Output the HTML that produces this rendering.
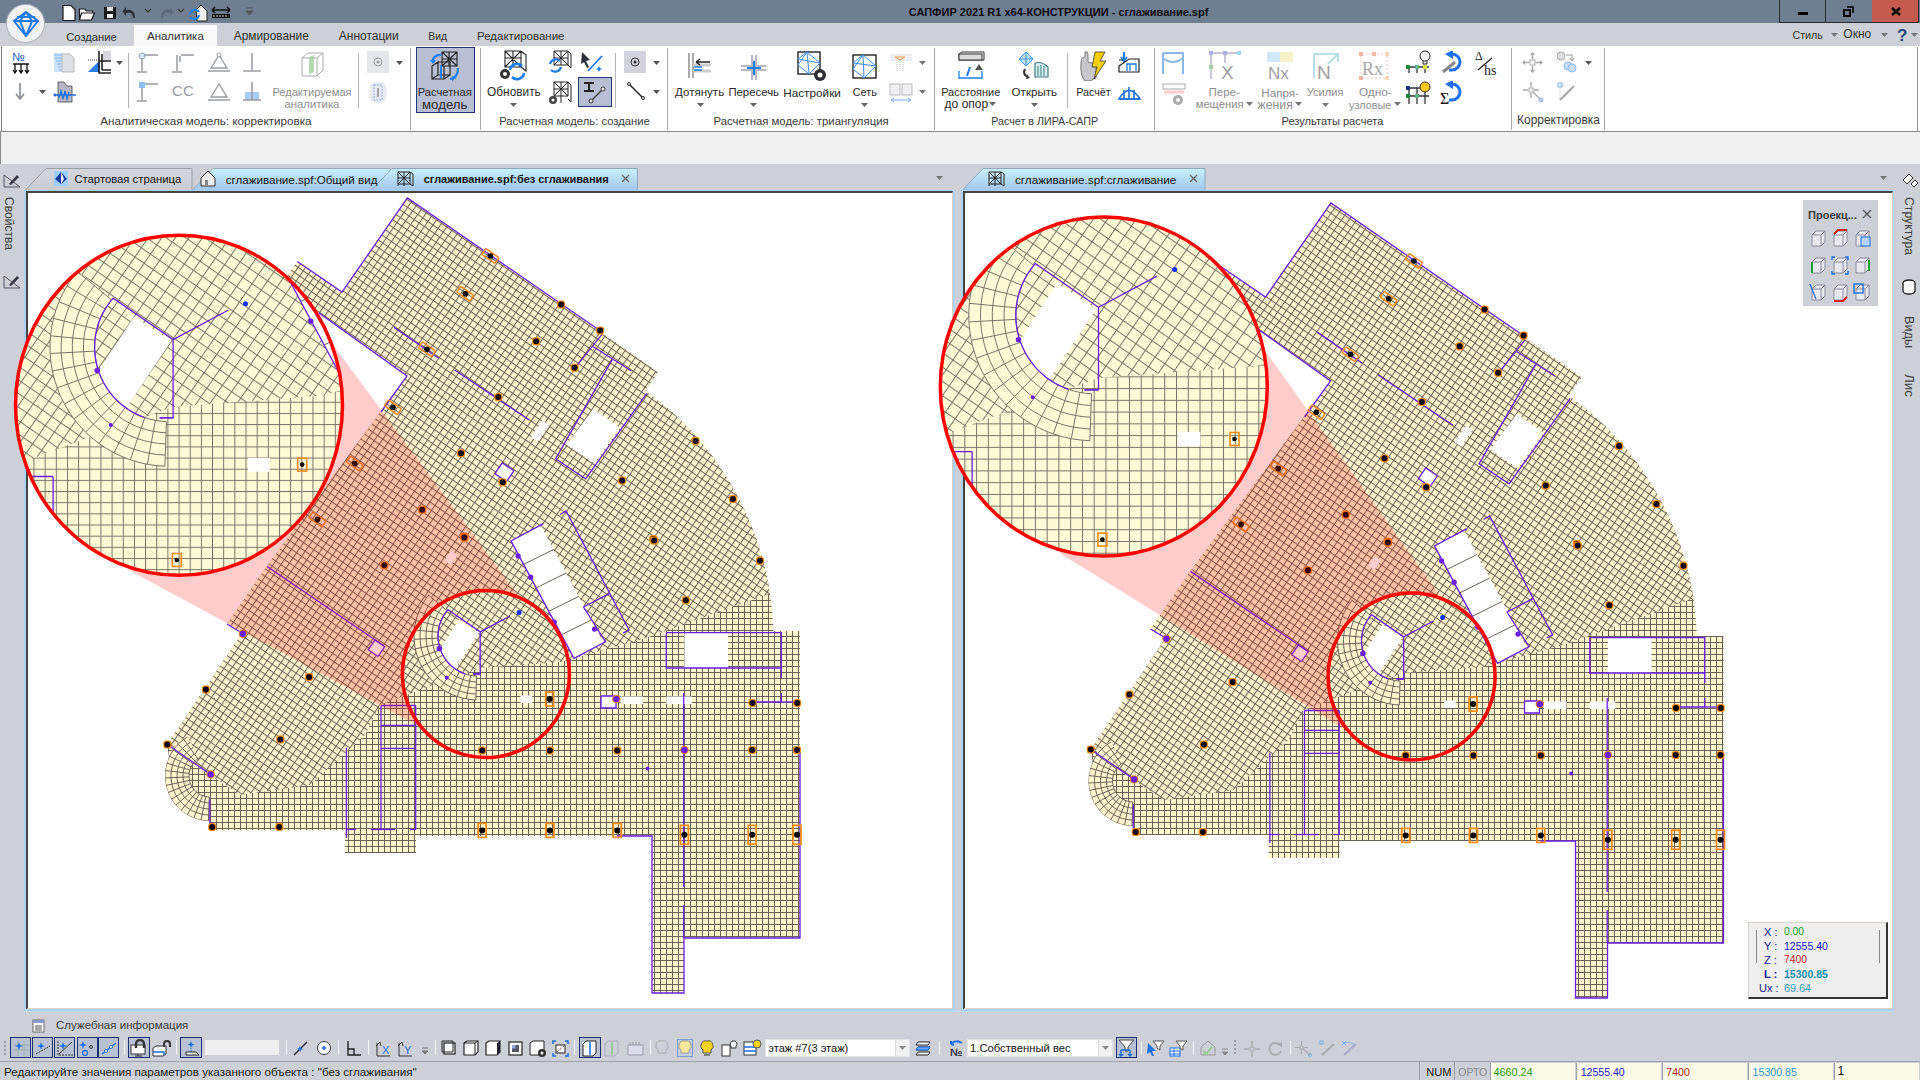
<!DOCTYPE html><html><head><meta charset="utf-8"><style>
*{margin:0;padding:0;box-sizing:border-box}
body{width:1920px;height:1080px;overflow:hidden;position:relative;background:#cdd1d7;font-family:"Liberation Sans", sans-serif;font-size:12px;color:#1e1e1e}
.a{position:absolute;white-space:nowrap}
</style></head><body>

<div class="a" style="left:0;top:0;width:1920px;height:23px;background:#6f7e91"></div>
<div class="a" style="left:908.75px;top:5.72px;font-size:11.01px;line-height:12.67px;color:#0a0a0a;font-weight:bold;">САПФИР 2021 R1 x64-КОНСТРУКЦИИ - сглаживание.spf</div>
<div class="a" style="left:1779px;top:0;width:47px;height:23px;border:1px solid #2a2a2a;border-top:0;"></div>
<div class="a" style="left:1826px;top:0;width:46px;height:23px;border-bottom:1px solid #2a2a2a;"></div>
<div class="a" style="left:1872px;top:0;width:47px;height:23px;border:1px solid #2a2a2a;border-top:0;border-left:0;background:#c55a4e"></div>
<div class="a" style="left:1798px;top:12px;width:10px;height:3px;background:#000"></div>
<svg class="a" style="left:1843px;top:6px;" width="11" height="11" viewBox="0 0 11 11"><rect x="1" y="4" width="6" height="6" fill="none" stroke="#000" stroke-width="2"/><path d="M4,1 L10,1 L10,7" fill="none" stroke="#000" stroke-width="1.6"/></svg>
<svg class="a" style="left:1891px;top:7px;" width="10" height="9" viewBox="0 0 10 9"><path d="M1,1 L9,8 M9,1 L1,8" stroke="#000" stroke-width="2.4"/></svg>
<svg class="a" style="left:60px;top:4px;" width="18" height="18" viewBox="0 0 18 18"><path d="M3,1.5 h8 l4,4 v11 h-12z" fill="#fff" stroke="#1a1a1a" stroke-width="1.2"/></svg>
<svg class="a" style="left:78px;top:4px;" width="18" height="18" viewBox="0 0 18 18"><path d="M1.5,5 h5 l2,2 h6 v2 h-11 l-2,7z M3.5,9 h13 l-3,7 h-12z" fill="#fff" stroke="#1a1a1a" stroke-width="1.2"/></svg>
<svg class="a" style="left:102px;top:4px;" width="16" height="18" viewBox="0 0 16 18"><rect x="2" y="3" width="12" height="12" fill="#1a1a1a"/><rect x="5" y="3" width="6" height="4" fill="#ddd"/><rect x="5" y="10" width="6" height="4" fill="#fff"/></svg>
<svg class="a" style="left:122px;top:3px;" width="16" height="18" viewBox="0 0 16 18"><path d="M13,15 C13,7 8,6 4,7 L4,4 L0.5,8.5 L4,13 L4,10 C8,9 11,10 11,15z" fill="#2a2f3a"/></svg>
<svg class="a" style="left:144px;top:8px;" width="8" height="6" viewBox="0 0 8 6"><path d="M1,1 L4,4 L7,1" fill="none" stroke="#333" stroke-width="1.2"/></svg>
<svg class="a" style="left:158px;top:3px;" width="16" height="18" viewBox="0 0 16 18"><path d="M3,15 C3,7 8,6 12,7 L12,4 L15.5,8.5 L12,13 L12,10 C8,9 5,10 5,15z" fill="#5c6878"/></svg>
<svg class="a" style="left:177px;top:8px;" width="8" height="6" viewBox="0 0 8 6"><path d="M1,1 L4,4 L7,1" fill="none" stroke="#333" stroke-width="1.2"/></svg>
<svg class="a" style="left:188px;top:2px;" width="20" height="20" viewBox="0 0 20 20"><path d="M8,8 L13,3 L19,9 v10 h-10z" fill="#eee" stroke="#222"/><path d="M2,12 a5,5 0 0 1 9,-2 M11,13 a5,5 0 0 1 -9,2" fill="none" stroke="#1e7ef0" stroke-width="2"/></svg>
<svg class="a" style="left:211px;top:4px;" width="20" height="16" viewBox="0 0 20 16"><path d="M1,6 h18 M1,6 l3,-3 M1,6 l3,3 M19,6 l-3,-3 M19,6 l-3,3" stroke="#111" stroke-width="1.5" fill="none"/><rect x="1" y="10" width="18" height="4" fill="#111"/><path d="M3,11v2 M6,11v2 M9,11v2 M12,11v2 M15,11v2" stroke="#ccc"/></svg>
<svg class="a" style="left:245px;top:7px;" width="9" height="9" viewBox="0 0 9 9"><path d="M1,1 h7 M1,4 L4.5,8 L8,4z" stroke="#555" fill="#555"/></svg>
<div class="a" style="left:0;top:23px;width:1920px;height:23px;background:#cdd1d7"></div>
<div class="a" style="left:134px;top:25px;width:83px;height:21px;background:#fafafa"></div>
<div class="a" style="left:66.25px;top:30.60px;font-size:11.20px;line-height:12.88px;color:#2e2e2e;">Создание</div>
<div class="a" style="left:147.00px;top:30.43px;font-size:11.47px;line-height:13.19px;color:#2e2e2e;">Аналитика</div>
<div class="a" style="left:233.75px;top:30.17px;font-size:11.86px;line-height:13.64px;color:#2e2e2e;">Армирование</div>
<div class="a" style="left:338.75px;top:30.08px;font-size:12.00px;line-height:13.80px;color:#2e2e2e;">Аннотации</div>
<div class="a" style="left:428.25px;top:31.15px;font-size:10.36px;line-height:11.92px;color:#2e2e2e;">Вид</div>
<div class="a" style="left:477.00px;top:30.42px;font-size:11.49px;line-height:13.21px;color:#2e2e2e;">Редактирование</div>
<div class="a" style="left:1792.50px;top:28.93px;font-size:10.69px;line-height:12.30px;color:#333;">Стиль</div>
<svg class="a" style="left:1831px;top:33px;" width="7" height="4" viewBox="0 0 7 4"><path d="M0,0 L7,0 L3.5,4Z" fill="#777"/></svg>
<div class="a" style="left:1843.30px;top:28.06px;font-size:12.03px;line-height:13.83px;color:#333;">Окно</div>
<svg class="a" style="left:1881px;top:33px;" width="7" height="4" viewBox="0 0 7 4"><path d="M0,0 L7,0 L3.5,4Z" fill="#777"/></svg>
<svg class="a" style="left:1897px;top:27px;" width="10" height="16" viewBox="0 0 10 16"><text x="0" y="14" font-family="Liberation Sans" font-weight="bold" font-size="17" fill="#2c4470">?</text></svg>
<svg class="a" style="left:1911px;top:33px;" width="7" height="4" viewBox="0 0 7 4"><path d="M0,0 L7,0 L3.5,4Z" fill="#777"/></svg>
<div class="a" style="left:7px;top:5px;width:37px;height:37px;border-radius:50%;background:#f1f2f4;box-shadow:0 0 0 1px #b0b6bf"></div>
<svg class="a" style="left:12px;top:11px;" width="28" height="26" viewBox="0 0 28 26"><path d="M14,1 L26,10 L14,25 L2,10z M2,10 h24 M14,1 L8,10 L14,25 L20,10z M5,6 h18" fill="none" stroke="#1e78e6" stroke-width="2"/></svg>
<div class="a" style="left:0;top:46px;width:1920px;height:86px;background:#fff;border-bottom:1px solid #8c8c8c"></div>
<div class="a" style="left:1px;top:46px;width:1px;height:85px;background:#7a7a7a"></div>
<div class="a" style="left:1917px;top:47px;width:1px;height:84px;background:#9a9a9a"></div>
<div class="a" style="left:0;top:132px;width:1920px;height:32px;background:#f1f1f1"></div>
<div class="a" style="left:0;top:132px;width:1px;height:32px;background:#888"></div>
<div class="a" style="left:100.20px;top:114.30px;font-size:11.66px;line-height:13.41px;color:#3a3a3a;">Аналитическая модель: корректировка</div>
<div class="a" style="left:499.20px;top:114.58px;font-size:11.24px;line-height:12.92px;color:#3a3a3a;">Расчетная модель: создание</div>
<div class="a" style="left:713.50px;top:114.50px;font-size:11.36px;line-height:13.07px;color:#3a3a3a;">Расчетная модель: триангуляция</div>
<div class="a" style="left:991.30px;top:114.92px;font-size:10.71px;line-height:12.31px;color:#3a3a3a;">Расчет в ЛИРА-САПР</div>
<div class="a" style="left:1281.50px;top:114.68px;font-size:11.08px;line-height:12.74px;color:#3a3a3a;">Результаты расчета</div>
<div class="a" style="left:1517.00px;top:114.10px;font-size:11.97px;line-height:13.77px;color:#3a3a3a;">Корректировка</div>
<div class="a" style="left:410.0px;top:48px;width:1px;height:82px;background:#a8a8a8"></div>
<div class="a" style="left:479.5px;top:48px;width:1px;height:82px;background:#a8a8a8"></div>
<div class="a" style="left:667.0px;top:48px;width:1px;height:82px;background:#a8a8a8"></div>
<div class="a" style="left:933.5px;top:48px;width:1px;height:82px;background:#a8a8a8"></div>
<div class="a" style="left:1153.5px;top:48px;width:1px;height:82px;background:#a8a8a8"></div>
<div class="a" style="left:1510.5px;top:48px;width:1px;height:82px;background:#a8a8a8"></div>
<div class="a" style="left:1604.0px;top:48px;width:1px;height:82px;background:#a8a8a8"></div>
<div class="a" style="left:128.0px;top:53px;width:1px;height:55px;background:#b4b4b4"></div>
<div class="a" style="left:358.0px;top:53px;width:1px;height:55px;background:#b4b4b4"></div>
<div class="a" style="left:614.5px;top:53px;width:1px;height:55px;background:#b4b4b4"></div>
<div class="a" style="left:1067.0px;top:53px;width:1px;height:55px;background:#b4b4b4"></div>
<svg class="a" style="left:11px;top:51px;" width="20" height="23" viewBox="0 0 20 23"><text x="1" y="10" font-family="Liberation Sans" font-size="12" fill="#1e5fd0">№</text><path d="M2,13 h16 M4,13 v8 M10,13 v8 M16,13 v8 M2,19 l2,3 l2,-3 M8,19 l2,3 l2,-3 M14,19 l2,3 l2,-3" stroke="#111" stroke-width="1.3" fill="none"/></svg>
<svg class="a" style="left:53px;top:52px;" width="23" height="21" viewBox="0 0 23 21"><path d="M1,1 h10 v19 h-10z" fill="#cfe3fb"/><path d="M1,3h10M2,6h9M3,9h8M4,12h7M5,15h6M6,18h5" stroke="#7fb6f0"/><path d="M9,2 h8 l4,4 v14 h-12z" fill="#dfe0e6" stroke="#bbb"/></svg>
<svg class="a" style="left:87px;top:50px;" width="25" height="24" viewBox="0 0 25 24"><path d="M1,22 L13,10 L13,22z" fill="#2a7de8"/><path d="M1,10 h11" stroke="#333" stroke-dasharray="1,1"/><path d="M12,1 v22 h12 M15,4 v16 M12,11 h12 M15,20 h9" stroke="#222" stroke-width="1.6" fill="none"/><rect x="16" y="1" width="8" height="9" fill="#d6d8de"/></svg>
<svg class="a" style="left:116px;top:61px;" width="7" height="4" viewBox="0 0 7 4"><path d="M0,0 L7,0 L3.5,4Z" fill="#555"/></svg>
<svg class="a" style="left:15px;top:82px;" width="10" height="19" viewBox="0 0 10 19"><path d="M5,1 v15 M1,12 l4,5 l4,-5" stroke="#8a8c94" stroke-width="1.6" fill="none"/></svg>
<svg class="a" style="left:39px;top:90px;" width="7" height="4" viewBox="0 0 7 4"><path d="M0,0 L7,0 L3.5,4Z" fill="#555"/></svg>
<svg class="a" style="left:53px;top:81px;" width="24" height="22" viewBox="0 0 24 22"><path d="M5,1 h6 l3,4 h5 v16 h-14z" fill="#b5b7c3" stroke="#444" stroke-width="0.8"/><path d="M1,14 h22 M6,17 l2,-7 l2,8 l2,-8 l2,8 l2,-7" stroke="#1e70e0" stroke-width="1.3" fill="none"/><circle cx="2" cy="14" r="1.6" fill="#1e70e0"/></svg>
<svg class="a" style="left:137px;top:52px;" width="23" height="22" viewBox="0 0 23 22"><circle cx="5" cy="4" r="3" fill="#d4e4fa" stroke="#8ab"/><path d="M5,7 v12 M8,3 h13 M0,20 h10" stroke="#9a9ca4" stroke-width="1.5"/></svg>
<svg class="a" style="left:137px;top:81px;" width="23" height="22" viewBox="0 0 23 22"><rect x="2" y="1" width="6" height="6" fill="#8ec0f4"/><path d="M5,7 v12 M8,3 h13 M0,20 h10" stroke="#9a9ca4" stroke-width="1.5"/></svg>
<svg class="a" style="left:172px;top:52px;" width="23" height="22" viewBox="0 0 23 22"><path d="M5,3 v16 M9,3 h13 M0,20 h10 M8,4 v6" stroke="#9a9ca4" stroke-width="1.5"/></svg>
<svg class="a" style="left:172px;top:81px;" width="23" height="22" viewBox="0 0 23 22"><text x="0" y="15" font-family="Liberation Sans" font-size="15" fill="#9a9ca4">C</text><text x="11" y="15" font-family="Liberation Sans" font-size="15" fill="#9a9ca4">C</text></svg>
<svg class="a" style="left:207px;top:52px;" width="23" height="22" viewBox="0 0 23 22"><path d="M12,3 L4,16 h16z M1,19 h22" stroke="#9a9ca4" stroke-width="1.4" fill="none"/><circle cx="12" cy="3" r="2" fill="#fff" stroke="#9a9ca4"/></svg>
<svg class="a" style="left:207px;top:81px;" width="23" height="22" viewBox="0 0 23 22"><path d="M12,3 L4,16 h16z M1,19 h22" stroke="#9a9ca4" stroke-width="1.4" fill="none"/></svg>
<svg class="a" style="left:241px;top:52px;" width="23" height="22" viewBox="0 0 23 22"><path d="M11,1 v17 M2,19 h18" stroke="#9a9ca4" stroke-width="1.5"/></svg>
<svg class="a" style="left:241px;top:81px;" width="23" height="22" viewBox="0 0 23 22"><rect x="4" y="11" width="14" height="8" fill="#a8cdf6"/><path d="M11,1 v18 M2,19 h18" stroke="#9a9ca4" stroke-width="1.5"/></svg>
<svg class="a" style="left:300px;top:52px;" width="25" height="26" viewBox="0 0 25 26"><path d="M2,6 L8,1 h15 v17 l-6,6 h-15z M2,6 h15 v18 M17,6 l6,-5" fill="none" stroke="#aaa"/><path d="M9,5 l5,-2 v17 l-5,2z" fill="#9fd19a" opacity="0.8"/></svg>
<div class="a" style="left:272.40px;top:86.27px;font-size:11.10px;line-height:12.76px;color:#8d8d8d;">Редактируемая</div>
<div class="a" style="left:284.40px;top:98.28px;font-size:11.39px;line-height:13.10px;color:#8d8d8d;">аналитика</div>
<div class="a" style="left:367px;top:51px;width:22px;height:22px;background:#e6e7ea"></div>
<svg class="a" style="left:372px;top:56px;" width="12" height="12" viewBox="0 0 12 12"><circle cx="6" cy="6" r="4" fill="none" stroke="#999"/><circle cx="6" cy="6" r="1.5" fill="#999"/></svg>
<svg class="a" style="left:396px;top:61px;" width="7" height="4" viewBox="0 0 7 4"><path d="M0,0 L7,0 L3.5,4Z" fill="#555"/></svg>
<svg class="a" style="left:367px;top:81px;" width="22" height="23" viewBox="0 0 22 23"><path d="M4,3 Q11,-1 18,3 Q22,11 18,20 Q11,24 4,20 Q0,11 4,3z" fill="#e8eaf0"/><rect x="7" y="4" width="8" height="15" fill="none" stroke="#6aa0e6" stroke-dasharray="1.5,1.5"/><path d="M11,7 v9" stroke="#888" stroke-width="1.5"/></svg>
<div class="a" style="left:416px;top:47px;width:59px;height:66px;background:#b8bfd2;border:1px solid #23367a"></div>
<svg class="a" style="left:428px;top:50px;" width="34" height="32" viewBox="0 0 34 32"><path d="M10,12 l-6,4 v13 l6,-4z M10,12 h12 v13 h-12 M4,29 h12 l6,-4 M16,16 v13" fill="none" stroke="#222" stroke-width="1.2"/><path d="M14,2 h15 v14 h-15z M14,9 h15 M21,2 v14 M14,2 l15,14 M29,2 l-15,14" fill="none" stroke="#222" stroke-width="1.1"/><path d="M4,12 Q6,4 14,5 M30,18 Q30,28 22,29" fill="none" stroke="#1e7ef0" stroke-width="2.2"/><path d="M2,10 l3,4 l3,-4z M28,28 l-4,3 l0,-5z" fill="#1e7ef0"/><path d="M13,15 v13" stroke="#1e7ef0" stroke-width="2"/></svg>
<div class="a" style="left:417.70px;top:85.99px;font-size:11.22px;line-height:12.90px;color:#2a2a2a;">Расчетная</div>
<div class="a" style="left:422.00px;top:96.76px;font-size:13.26px;line-height:15.24px;color:#2a2a2a;">модель</div>
<svg class="a" style="left:497px;top:50px;" width="36" height="32" viewBox="0 0 36 32"><path d="M8,1 h16 v16 h-16z M8,8 h16 M16,1 v16 M8,1 l16,16 M24,1 l-16,16 M24,1 l5,4 v16 l-5,-4" fill="none" stroke="#222" stroke-width="1.1"/><circle cx="8" cy="24" r="5" fill="#333"/><circle cx="8" cy="24" r="2" fill="#fff"/><path d="M13,20 a7,7 0 0 1 12,-4 M27,23 a7,7 0 0 1 -12,4" fill="none" stroke="#1e7ef0" stroke-width="2.6"/></svg>
<div class="a" style="left:487.10px;top:85.57px;font-size:11.86px;line-height:13.64px;color:#2a2a2a;">Обновить</div>
<svg class="a" style="left:510px;top:103px;" width="7" height="4" viewBox="0 0 7 4"><path d="M0,0 L7,0 L3.5,4Z" fill="#666"/></svg>
<svg class="a" style="left:548px;top:50px;" width="24" height="24" viewBox="0 0 24 24"><path d="M6,1 h14 v14 h-14z M6,8 h14 M13,1 v14 M6,1 l14,14 M20,1 l-14,14 M20,1 l3,3 v14 l-3,-3" fill="none" stroke="#222" stroke-width="1"/><path d="M2,14 a6,6 0 0 1 10,-3 M13,17 a6,6 0 0 1 -10,3" fill="none" stroke="#1e7ef0" stroke-width="2.2"/></svg>
<svg class="a" style="left:548px;top:81px;" width="24" height="24" viewBox="0 0 24 24"><path d="M6,1 h14 v14 h-14z M6,8 h14 M13,1 v14 M6,1 l14,14 M20,1 l-14,14 M20,1 l3,3 v17 l-3,-3 M6,15 v7 M13,15 v7" fill="none" stroke="#222" stroke-width="1"/><circle cx="5" cy="19" r="4" fill="#444"/><circle cx="5" cy="19" r="1.5" fill="#fff"/></svg>
<svg class="a" style="left:580px;top:51px;" width="25" height="22" viewBox="0 0 25 22"><path d="M2,1 L10,9 L6,10 L9,16 L7,17 L4,11 L1,13z" fill="#2d3140"/><path d="M8,20 L22,5" stroke="#1e7ef0" stroke-width="1.8"/><path d="M19,15 l1,2 l2,1 l-2,1 l-1,2 l-1,-2 l-2,-1 l2,-1z" fill="#1e7ef0"/></svg>
<div class="a" style="left:578px;top:77px;width:34px;height:30px;background:#b8bfd2;border:1px solid #23367a"></div>
<svg class="a" style="left:582px;top:81px;" width="28" height="24" viewBox="0 0 28 24"><path d="M2,2 h10 M2,10 h10 M7,2 v8" stroke="#222" stroke-width="2" fill="none"/><path d="M9,20 L21,8" stroke="#333" stroke-width="1.2"/><circle cx="9" cy="20" r="2" fill="#fff" stroke="#333"/><circle cx="21" cy="8" r="2" fill="#fff" stroke="#333"/></svg>
<div class="a" style="left:624px;top:51px;width:22px;height:22px;background:#d3d3df"></div>
<svg class="a" style="left:629px;top:56px;" width="12" height="12" viewBox="0 0 12 12"><circle cx="6" cy="6" r="4" fill="none" stroke="#333"/><circle cx="6" cy="6" r="1.5" fill="#333"/></svg>
<svg class="a" style="left:653px;top:61px;" width="7" height="4" viewBox="0 0 7 4"><path d="M0,0 L7,0 L3.5,4Z" fill="#555"/></svg>
<svg class="a" style="left:627px;top:82px;" width="18" height="18" viewBox="0 0 18 18"><path d="M2,2 L16,16" stroke="#222" stroke-width="1.4"/><circle cx="2" cy="2" r="1.5" fill="#fff" stroke="#222"/><circle cx="16" cy="16" r="1.5" fill="#fff" stroke="#222"/></svg>
<svg class="a" style="left:653px;top:90px;" width="7" height="4" viewBox="0 0 7 4"><path d="M0,0 L7,0 L3.5,4Z" fill="#555"/></svg>
<svg class="a" style="left:686px;top:52px;" width="26" height="27" viewBox="0 0 26 27"><path d="M3,1 v25 M7,1 v25" stroke="#aaa" stroke-width="2"/><path d="M7,13 h18 M7,19 h18" stroke="#ccc" stroke-width="3"/><path d="M10,10 h14 M10,10 l4,-3 M10,10 l4,3" stroke="#222" stroke-width="1.5" fill="none"/><path d="M8,15 h8 M8,18 h8" stroke="#1e7ef0" stroke-width="1.5"/></svg>
<div class="a" style="left:675.00px;top:85.76px;font-size:11.57px;line-height:13.30px;color:#2a2a2a;">Дотянуть</div>
<svg class="a" style="left:697px;top:103px;" width="7" height="4" viewBox="0 0 7 4"><path d="M0,0 L7,0 L3.5,4Z" fill="#666"/></svg>
<svg class="a" style="left:740px;top:54px;" width="27" height="27" viewBox="0 0 27 27"><path d="M12,1 v25 M16,1 v25 M1,12 h25 M1,16 h25" stroke="#b8b8c8" stroke-width="2"/><path d="M14,7 v14 M7,14 h14" stroke="#1e7ef0" stroke-width="2"/></svg>
<div class="a" style="left:728.40px;top:85.90px;font-size:11.37px;line-height:13.07px;color:#2a2a2a;">Пересечь</div>
<svg class="a" style="left:750px;top:103px;" width="7" height="4" viewBox="0 0 7 4"><path d="M0,0 L7,0 L3.5,4Z" fill="#666"/></svg>
<svg class="a" style="left:797px;top:51px;" width="31" height="32" viewBox="0 0 31 32"><rect x="1" y="1" width="22" height="22" fill="#fff" stroke="#222" stroke-width="1.4"/><path d="M1,8 L10,1 L23,12 L12,23 L1,14 L10,1 M10,1 L12,23 M1,8 L23,12" fill="none" stroke="#3a8ef0" stroke-width="1"/><circle cx="23" cy="24" r="6" fill="#2d2d35"/><circle cx="23" cy="24" r="2.5" fill="#fff"/></svg>
<div class="a" style="left:783.20px;top:85.63px;font-size:11.77px;line-height:13.53px;color:#2a2a2a;">Настройки</div>
<svg class="a" style="left:852px;top:54px;" width="25" height="25" viewBox="0 0 25 25"><rect x="1" y="1" width="23" height="23" fill="#fff" stroke="#222" stroke-width="1.4"/><path d="M1,9 L11,1 L24,12 L12,24 L1,15 L11,1 M11,1 L12,24 M1,9 L24,12" fill="none" stroke="#3a8ef0" stroke-width="1"/></svg>
<div class="a" style="left:852.70px;top:86.21px;font-size:10.88px;line-height:12.51px;color:#2a2a2a;">Сеть</div>
<svg class="a" style="left:861px;top:103px;" width="7" height="4" viewBox="0 0 7 4"><path d="M0,0 L7,0 L3.5,4Z" fill="#666"/></svg>
<svg class="a" style="left:889px;top:52px;" width="24" height="22" viewBox="0 0 24 22"><rect x="1" y="2" width="22" height="7" fill="#eef0f4"/><path d="M6,5 h10 l-5,3z" fill="none" stroke="#f0a050"/><path d="M11,8 v12 M8,10 v10 M14,10 v10" stroke="#bbb" stroke-dasharray="1,1"/></svg>
<svg class="a" style="left:919px;top:61px;" width="7" height="4" viewBox="0 0 7 4"><path d="M0,0 L7,0 L3.5,4Z" fill="#777"/></svg>
<svg class="a" style="left:888px;top:82px;" width="26" height="22" viewBox="0 0 26 22"><rect x="2" y="2" width="10" height="11" fill="#f0f0f2" stroke="#bbb"/><rect x="14" y="2" width="10" height="11" fill="#f0f0f2" stroke="#bbb"/><path d="M3,18 h20 M3,18 l3,-2 M3,18 l3,2 M23,18 l-3,-2 M23,18 l-3,2" stroke="#7ab0ee" fill="none"/></svg>
<svg class="a" style="left:919px;top:90px;" width="7" height="4" viewBox="0 0 7 4"><path d="M0,0 L7,0 L3.5,4Z" fill="#777"/></svg>
<svg class="a" style="left:956px;top:51px;" width="30" height="30" viewBox="0 0 30 30"><path d="M3,3 l3,-2 h22 v8 h-25z" fill="#f4f4f6" stroke="#333"/><rect x="3" y="3" width="23" height="6" fill="#ddd" stroke="#333"/><path d="M3,20 v8 M26,20 v8 M3,27 h23" stroke="#1e7ef0" stroke-width="1.3"/><path d="M11,25 l3,-9" stroke="#1e7ef0" stroke-width="2"/><path d="M19,19 l4,-6 l4,6z" fill="#555"/></svg>
<div class="a" style="left:941.20px;top:86.17px;font-size:10.94px;line-height:12.58px;color:#2a2a2a;">Расстояние</div>
<div class="a" style="left:944.60px;top:97.87px;font-size:12.02px;line-height:13.82px;color:#2a2a2a;">до опор</div>
<svg class="a" style="left:989px;top:102px;" width="7" height="4" viewBox="0 0 7 4"><path d="M0,0 L7,0 L3.5,4Z" fill="#666"/></svg>
<svg class="a" style="left:1018px;top:51px;" width="32" height="30" viewBox="0 0 32 30"><path d="M8,1 L15,8 L8,15 L1,8z M1,8 h14 M8,1 v14" fill="#bfe0fb" stroke="#3a9af0"/><path d="M7,18 q-3,5 3,8" stroke="#333" stroke-width="2.2" fill="none"/><path d="M9,24 l3,3 l-4,1z" fill="#333"/><path d="M17,12 q7,-2 13,4 v10 h-13z" fill="#d8efee" stroke="#3a7a80" stroke-width="1.2"/><path d="M20,15 v10 M23,14 v11 M26,15 v10" stroke="#3a7a80"/></svg>
<div class="a" style="left:1011.60px;top:85.75px;font-size:11.59px;line-height:13.32px;color:#2a2a2a;">Открыть</div>
<svg class="a" style="left:1031px;top:103px;" width="7" height="4" viewBox="0 0 7 4"><path d="M0,0 L7,0 L3.5,4Z" fill="#666"/></svg>
<svg class="a" style="left:1077px;top:51px;" width="32" height="30" viewBox="0 0 32 30"><path d="M4,12 q0,-6 4,-6 v-5 q3,-1 3,2 v8 l8,2 v14 l-6,3 h-5 q-5,-5 -4,-18z" fill="#c8c8cc" stroke="#777"/><path d="M18,1 h10 l-5,9 h6 l-12,18 l3,-12 h-5z" fill="#f6d000" stroke="#333" stroke-width="0.8"/></svg>
<div class="a" style="left:1076.20px;top:86.29px;font-size:10.77px;line-height:12.38px;color:#2a2a2a;">Расчёт</div>
<svg class="a" style="left:1117px;top:51px;" width="24" height="22" viewBox="0 0 24 22"><path d="M7,1 v8 M4,6 l3,4 l3,-4" stroke="#1e7ef0" stroke-width="2" fill="none"/><path d="M2,9 h4 M12,8 h10 v13 h-20 v-6 z" fill="#fff" stroke="#222" stroke-width="1.2"/><path d="M10,20 v-7 h9 v7 M13,13 v7" stroke="#1e7ef0" stroke-width="1.3" fill="none"/></svg>
<svg class="a" style="left:1117px;top:84px;" width="25" height="17" viewBox="0 0 25 17"><path d="M2,15 Q12,-2 23,15z" fill="#fff" stroke="#1e70e0" stroke-width="1.6"/><path d="M7,15 v-9 M12,15 v-12 M17,15 v-9 M2,15 h21" stroke="#1e70e0" stroke-width="1.6"/></svg>
<svg class="a" style="left:1161px;top:50px;" width="24" height="26" viewBox="0 0 24 26"><path d="M2,3 h20 v21 M2,3 v21" stroke="#8ab8ec" stroke-width="2" fill="none"/><path d="M2,8 q10,8 20,0" stroke="#8ab8ec" stroke-width="2" fill="none"/></svg>
<svg class="a" style="left:1161px;top:83px;" width="26" height="24" viewBox="0 0 26 24"><rect x="2" y="1" width="22" height="5" fill="#fff" stroke="#aaa"/><path d="M3,9 h20" stroke="#fcc" stroke-width="3"/><circle cx="17" cy="17" r="5" fill="#aaa"/><circle cx="17" cy="17" r="2" fill="#fff"/></svg>
<svg class="a" style="left:1208px;top:51px;" width="34" height="30" viewBox="0 0 34 30"><path d="M3,2 h28 M3,2 v26 M17,2 v10" stroke="#c8c8d8" stroke-width="2"/><rect x="1" y="0" width="4" height="4" fill="#aab0e0"/><rect x="15" y="0" width="4" height="4" fill="#aab0e0"/><rect x="29" y="0" width="4" height="4" fill="#9fd8f0"/><rect x="1" y="14" width="4" height="4" fill="#9fd0a8"/><text x="13" y="28" font-family="Liberation Sans" font-size="19" fill="#a0a0a0">X</text></svg>
<div class="a" style="left:1208.40px;top:85.76px;font-size:11.58px;line-height:13.32px;color:#8d8d8d;">Пере-</div>
<div class="a" style="left:1195.70px;top:98.40px;font-size:11.21px;line-height:12.89px;color:#8d8d8d;">мещения</div>
<svg class="a" style="left:1246px;top:102px;" width="7" height="4" viewBox="0 0 7 4"><path d="M0,0 L7,0 L3.5,4Z" fill="#777"/></svg>
<svg class="a" style="left:1266px;top:51px;" width="30" height="30" viewBox="0 0 30 30"><rect x="1" y="1" width="13" height="10" fill="#d0e8f8"/><rect x="14" y="1" width="13" height="10" fill="#f7f3c8"/><text x="2" y="28" font-family="Liberation Sans" font-size="17" fill="#a0a0a0">Nx</text></svg>
<div class="a" style="left:1261.30px;top:85.72px;font-size:11.64px;line-height:13.38px;color:#8d8d8d;">Напря-</div>
<div class="a" style="left:1257.60px;top:97.73px;font-size:12.23px;line-height:14.07px;color:#8d8d8d;">жения</div>
<svg class="a" style="left:1295px;top:102px;" width="7" height="4" viewBox="0 0 7 4"><path d="M0,0 L7,0 L3.5,4Z" fill="#777"/></svg>
<svg class="a" style="left:1311px;top:52px;" width="29" height="28" viewBox="0 0 29 28"><path d="M3,2 h24 v8 M3,2 v24 M27,2 l-10,10" stroke="#b8e0e8" stroke-width="2" fill="none"/><text x="6" y="27" font-family="Liberation Sans" font-size="19" fill="#a0a0a0">N</text></svg>
<div class="a" style="left:1306.80px;top:86.10px;font-size:11.06px;line-height:12.71px;color:#8d8d8d;">Усилия</div>
<svg class="a" style="left:1322px;top:103px;" width="7" height="4" viewBox="0 0 7 4"><path d="M0,0 L7,0 L3.5,4Z" fill="#777"/></svg>
<svg class="a" style="left:1358px;top:51px;" width="33" height="30" viewBox="0 0 33 30"><rect x="3" y="3" width="26" height="24" fill="none" stroke="#f0c8c0" stroke-dasharray="2,2"/><rect x="1" y="1" width="4" height="4" fill="#f0b8a0"/><rect x="14" y="1" width="4" height="4" fill="#f0b8a0"/><rect x="27" y="1" width="4" height="4" fill="#f8d8b8"/><rect x="1" y="25" width="4" height="4" fill="#f0b8a0"/><rect x="27" y="25" width="4" height="4" fill="#f8d8b8"/><text x="4" y="24" font-family="Liberation Serif" font-size="18" fill="#a8a8a8">Rx</text></svg>
<div class="a" style="left:1358.90px;top:85.59px;font-size:11.83px;line-height:13.61px;color:#8d8d8d;">Одно-</div>
<div class="a" style="left:1349.00px;top:98.66px;font-size:10.81px;line-height:12.43px;color:#8d8d8d;">узловые</div>
<svg class="a" style="left:1394px;top:102px;" width="7" height="4" viewBox="0 0 7 4"><path d="M0,0 L7,0 L3.5,4Z" fill="#777"/></svg>
<svg class="a" style="left:1405px;top:50px;" width="30" height="25" viewBox="0 0 30 25"><path d="M2,17 h22 M4,17 v6 M12,17 v6 M20,17 v6" stroke="#333" stroke-width="1.3"/><rect x="1" y="15" width="4" height="4" fill="#1a8a3a"/><rect x="10" y="15" width="4" height="4" fill="#5aba8a"/><rect x="18" y="15" width="4" height="4" fill="#d8e040"/><circle cx="20" cy="6" r="5" fill="#fff" stroke="#222"/><path d="M18,11 v3 h4 v-3" stroke="#222" fill="none"/></svg>
<svg class="a" style="left:1405px;top:81px;" width="30" height="25" viewBox="0 0 30 25"><path d="M2,7 h22 M2,15 h22 M4,7 v16 M12,7 v16 M20,7 v16" stroke="#333" stroke-width="1.3"/><rect x="1" y="5" width="4" height="4" fill="#223080"/><rect x="1" y="13" width="4" height="4" fill="#1a8a3a"/><rect x="10" y="13" width="4" height="4" fill="#5aba8a"/><circle cx="20" cy="6" r="5" fill="#f8c820" stroke="#333"/></svg>
<svg class="a" style="left:1440px;top:51px;" width="25" height="23" viewBox="0 0 25 23"><path d="M12,3 a8,8 0 1 1 0,16 h-3" fill="none" stroke="#1e70f0" stroke-width="3"/><path d="M13,-1 l-8,4 l8,5z" fill="#1e70f0"/><path d="M3,21 l12,-10" stroke="#888" stroke-width="3"/></svg>
<svg class="a" style="left:1440px;top:81px;" width="25" height="24" viewBox="0 0 25 24"><path d="M12,3 a8,8 0 1 1 0,16 h-3" fill="none" stroke="#1e70f0" stroke-width="3"/><path d="M13,-1 l-8,4 l8,5z" fill="#1e70f0"/><text x="0" y="23" font-family="Liberation Serif" font-size="16" fill="#111">Σ</text></svg>
<svg class="a" style="left:1474px;top:50px;" width="28" height="26" viewBox="0 0 28 26"><text x="1" y="10" font-family="Liberation Serif" font-size="12" fill="#222">Δ</text><path d="M4,20 L18,8" stroke="#222" stroke-width="1.3"/><text x="10" y="25" font-family="Liberation Serif" font-size="14" fill="#222">hs</text></svg>
<svg class="a" style="left:1522px;top:52px;" width="21" height="21" viewBox="0 0 21 21"><rect x="8" y="8" width="5" height="5" fill="none" stroke="#aaa"/><path d="M10.5,1 v6 M10.5,14 v6 M1,10.5 h6 M14,10.5 h6" stroke="#aaa" stroke-width="1.6"/><path d="M8,3 l2.5,-3 l2.5,3z M8,18 l2.5,3 l2.5,-3z M3,8 l-3,2.5 l3,2.5z M18,8 l3,2.5 l-3,2.5z" fill="#aaa"/></svg>
<svg class="a" style="left:1556px;top:50px;" width="24" height="24" viewBox="0 0 24 24"><circle cx="5" cy="6" r="4" fill="#ddd" stroke="#aaa"/><path d="M10,5 h6 v5 M14,8 l2,3 l2,-3" stroke="#999" fill="none"/><circle cx="12" cy="16" r="4" fill="#c8ddf8" stroke="#8ab8ec"/><circle cx="16" cy="18" r="4" fill="#c8ddf8" stroke="#8ab8ec"/></svg>
<svg class="a" style="left:1585px;top:61px;" width="7" height="4" viewBox="0 0 7 4"><path d="M0,0 L7,0 L3.5,4Z" fill="#555"/></svg>
<svg class="a" style="left:1522px;top:81px;" width="22" height="22" viewBox="0 0 22 22"><rect x="7" y="7" width="4" height="4" fill="none" stroke="#aaa"/><path d="M9,1 v5 M9,12 v5 M1,9 h5 M12,9 h5 M11,11 L20,20" stroke="#aaa" stroke-width="1.4"/><circle cx="19" cy="19" r="2" fill="none" stroke="#7ab0ee"/></svg>
<svg class="a" style="left:1557px;top:82px;" width="22" height="20" viewBox="0 0 22 20"><path d="M3,18 L17,4" stroke="#aaa" stroke-width="2.2"/><path d="M3,3 h12 M3,3 v14" stroke="#ccc" stroke-dasharray="1.5,1.5"/><rect x="1" y="1" width="4" height="4" fill="none" stroke="#7ab0ee"/></svg>
<div class="a" style="left:0;top:164px;width:1920px;height:27px;background:#cdd1d7"></div>
<svg class="a" style="left:25px;top:168px;" width="169" height="23" viewBox="0 0 169 23"><defs><linearGradient id="tg46" x1="0" y1="0" x2="0" y2="1"><stop offset="0" stop-color="#d3d7dc"/><stop offset="1" stop-color="#c9cdd3"/></linearGradient></defs><path d="M0.5,22 L21,0.5 H167.0 V22" fill="url(#tg46)" stroke="#9aa0a8"/></svg>
<svg class="a" style="left:192px;top:168px;" width="200" height="23" viewBox="0 0 200 23"><defs><linearGradient id="tg213" x1="0" y1="0" x2="0" y2="1"><stop offset="0" stop-color="#c8f1fd"/><stop offset="1" stop-color="#a2c6ee"/></linearGradient></defs><path d="M0.5,22 L21,0.5 H198.0 V22" fill="url(#tg213)" stroke="#9ab"/></svg>
<svg class="a" style="left:371px;top:168px;" width="268" height="23" viewBox="0 0 268 23"><defs><linearGradient id="tg392" x1="0" y1="0" x2="0" y2="1"><stop offset="0" stop-color="#c8f1fd"/><stop offset="1" stop-color="#a2c6ee"/></linearGradient></defs><path d="M0.5,22 L21,0.5 H266.5 V22" fill="url(#tg392)" stroke="#8fa8c0"/></svg>
<svg class="a" style="left:962px;top:168px;" width="245" height="23" viewBox="0 0 245 23"><defs><linearGradient id="tg983" x1="0" y1="0" x2="0" y2="1"><stop offset="0" stop-color="#c8f1fd"/><stop offset="1" stop-color="#a2c6ee"/></linearGradient></defs><path d="M0.5,22 L21,0.5 H243.0 V22" fill="url(#tg983)" stroke="#8fa8c0"/></svg>
<svg class="a" style="left:53px;top:170px;" width="16" height="17" viewBox="0 0 16 17"><rect x="1" y="1" width="14" height="15" fill="#9ed0fb"/><path d="M8,2 L14,9 L8,14 L2,9z" fill="#1a3aa0"/><path d="M8,2 L11,9 L8,14z" fill="#fff"/></svg>
<div class="a" style="left:74.40px;top:172.95px;font-size:11.29px;line-height:12.98px;color:#101010;">Стартовая страница</div>
<svg class="a" style="left:199px;top:170px;" width="18" height="17" viewBox="0 0 18 17"><path d="M2,8 L9,1 L16,8 v8 h-14z" fill="#eee" stroke="#333"/><rect x="6" y="10" width="3" height="6" fill="#888"/></svg>
<div class="a" style="left:225.75px;top:172.74px;font-size:11.60px;line-height:13.34px;color:#101010;">сглаживание.spf:Общий вид</div>
<svg class="a" style="left:397px;top:169px;" width="17" height="18" viewBox="0 0 17 18"><path d="M1,3 h12 v12 h-12z M1,9 h12 M7,3 v12 M1,3 l12,12 M13,3 l-12,12 M13,3 l3,2 v12 l-3,-2 M1,15 v2 M7,15 v2" fill="none" stroke="#222" stroke-width="1"/></svg>
<div class="a" style="left:423.75px;top:173.16px;font-size:10.96px;line-height:12.61px;color:#101010;font-weight:bold;">сглаживание.spf:без сглаживания</div>
<svg class="a" style="left:621px;top:174px;" width="9" height="9" viewBox="0 0 9 9"><path d="M1,1 L8,8 M8,1 L1,8" stroke="#666" stroke-width="1.3"/></svg>
<svg class="a" style="left:988px;top:169px;" width="17" height="18" viewBox="0 0 17 18"><path d="M1,3 h12 v12 h-12z M1,9 h12 M7,3 v12 M1,3 l12,12 M13,3 l-12,12 M13,3 l3,2 v12 l-3,-2 M1,15 v2 M7,15 v2" fill="none" stroke="#222" stroke-width="1"/></svg>
<div class="a" style="left:1015.00px;top:172.68px;font-size:11.69px;line-height:13.44px;color:#101010;">сглаживание.spf:сглаживание</div>
<svg class="a" style="left:1189px;top:174px;" width="9" height="9" viewBox="0 0 9 9"><path d="M1,1 L8,8 M8,1 L1,8" stroke="#666" stroke-width="1.3"/></svg>
<svg class="a" style="left:936px;top:176px;" width="7" height="4" viewBox="0 0 7 4"><path d="M0,0 L7,0 L3.5,4Z" fill="#777"/></svg>
<svg class="a" style="left:1880px;top:176px;" width="7" height="4" viewBox="0 0 7 4"><path d="M0,0 L7,0 L3.5,4Z" fill="#777"/></svg>
<div class="a" style="left:0;top:164px;width:24px;height:850px;background:#cdd1d7"></div>
<svg class="a" style="left:3px;top:172px;" width="18" height="16" viewBox="0 0 18 16"><path d="M1,15 h16 L1,3z" fill="none" stroke="#556"/><path d="M6,12 L14,3 l2,2 L8,13z" fill="#334"/></svg>
<svg class="a" style="left:3px;top:273px;" width="18" height="16" viewBox="0 0 18 16"><path d="M1,15 h16 L1,3z" fill="none" stroke="#556"/><path d="M6,12 L14,3 l2,2 L8,13z" fill="#334"/></svg>
<div class="a" style="left:2px;top:197px;width:53px;height:18px;transform-origin:0 0;transform:translate(15px,0) rotate(90deg)"><div class="a" style="left:0.00px;top:2.04px;font-size:12.07px;line-height:13.88px;color:#404040;">Свойства</div></div>
<div class="a" style="left:1894px;top:164px;width:26px;height:850px;background:#cdd1d7"></div>
<svg class="a" style="left:1901px;top:172px;" width="18" height="17" viewBox="0 0 18 17"><path d="M2,8 L8,2 L12,6 L6,12z M10,12 L14,8 L17,11 L13,15z" fill="#fff" stroke="#333"/></svg>
<div class="a" style="left:1900px;top:197px;width:60px;height:18px;transform-origin:0 0;transform:translate(18px,0) rotate(90deg)"><div class="a" style="left:0.00px;top:1.93px;font-size:12.23px;line-height:14.06px;color:#404040;">Структура</div></div>
<svg class="a" style="left:1901px;top:279px;" width="16" height="16" viewBox="0 0 16 16"><ellipse cx="8" cy="4" rx="6" ry="3" fill="#fff" stroke="#222" stroke-width="1.3"/><path d="M2,4 v8 a6,3 0 0 0 12,0 v-8" fill="#fff" stroke="#222" stroke-width="1.3"/></svg>
<div class="a" style="left:1900px;top:316px;width:34px;height:18px;transform-origin:0 0;transform:translate(18px,0) rotate(90deg)"><div class="a" style="left:0.00px;top:1.65px;font-size:12.66px;line-height:14.56px;color:#404040;">Виды</div></div>
<div class="a" style="left:1900px;top:374px;width:24px;height:18px;transform-origin:0 0;transform:translate(18px,0) rotate(90deg)"><div class="a" style="left:0.00px;top:1.16px;font-size:13.41px;line-height:15.42px;color:#404040;">Лис</div></div>
<div class="a" style="left:24px;top:190px;width:931px;height:821px;background:#aed3f2"></div>
<div class="a" style="left:26px;top:191px;width:927px;height:818px;background:#fff;border-left:2px solid #444;border-top:2px solid #444;border-right:1px solid #d8d0c0;border-bottom:1px solid #d8d0c0"></div>
<div class="a" style="left:961px;top:190px;width:933px;height:821px;background:#aed3f2"></div>
<div class="a" style="left:963px;top:191px;width:930px;height:818px;background:#fff;border-left:2px solid #444;border-top:2px solid #444;border-right:1px solid #d8d0c0;border-bottom:1px solid #d8d0c0"></div>
<svg class="a" style="left:0;top:0" width="1920" height="1080" viewBox="0 0 1920 1080"><defs>
<clipPath id="cvl"><rect x="28" y="193" width="926" height="815"/></clipPath>
<clipPath id="cvr"><rect x="965" y="193" width="927" height="815"/></clipPath>
<clipPath id="cb0"><ellipse cx="179.0" cy="405.2" rx="163.5" ry="170.0"/></clipPath>
<clipPath id="cs0"><circle cx="485.9" cy="674.1" r="83.5"/></clipPath>
<clipPath id="cb1"><ellipse cx="1103.8" cy="386.6" rx="163.5" ry="169.5"/></clipPath>
<clipPath id="cs1"><circle cx="1411.6" cy="676.5" r="83.5"/></clipPath>
</defs>
<g clip-path="url(#cvl)">
<pattern id="m0a" patternUnits="userSpaceOnUse" width="6.000" height="6.000" patternTransform="rotate(0.00)"><rect width="6.000" height="6.000" fill="#fff6d0"/><rect width="6.000" height="1.000" fill="#6b6357"/><rect width="1.000" height="6.000" fill="#6b6357"/></pattern>
<pattern id="m0b" patternUnits="userSpaceOnUse" width="6.200" height="6.200" patternTransform="rotate(34.70)"><rect width="6.200" height="6.200" fill="#fff6d0"/><rect width="6.200" height="1.000" fill="#6b6357"/><rect width="1.000" height="6.200" fill="#6b6357"/></pattern>
<path d="M407.4,198.0 L658.0,372.0 L645.4,390.8 L653.0,396.4 L660.4,402.2 L667.6,408.2 L674.6,414.5 L681.4,421.0 L688.0,427.6 L694.4,434.5 L700.6,441.6 L706.6,448.9 L712.3,456.3 L717.9,463.9 L723.1,471.7 L728.2,479.6 L733.0,487.7 L737.5,495.9 L741.8,504.3 L745.8,512.8 L749.6,521.4 L753.1,530.1 L756.4,538.9 L759.3,547.9 L762.0,556.9 L764.4,565.9 L766.5,575.1 L768.4,584.3 L770.0,593.6 L771.2,602.9 L772.2,612.2 L772.9,621.6 L773.4,631.0 L800.0,631.0 L800.0,938.0 L684.0,938.0 L684.0,993.0 L652.0,993.0 L652.0,836.0 L416.0,836.0 L416.0,853.0 L345.0,853.0 L345.0,830.0 L210.0,830.0 L210.0,821.0 L202.5,820.4 L195.2,818.5 L188.4,815.5 L182.1,811.3 L176.6,806.2 L172.0,800.2 L168.6,793.5 L166.2,786.4 L165.1,778.9 L165.2,771.4 L166.6,764.0 L169.2,757.0 L167.0,745.0 L242.0,633.0 L227.0,624.0 L267.0,566.0 L407.0,376.0 L280.8,285.3 L297.3,261.5 L342.0,292.0Z" fill="url(#m0a)"/>
<path d="M407.4,198.0 L658.0,372.0 L645.4,390.8 L653.0,396.4 L660.4,402.2 L667.6,408.2 L674.6,414.5 L681.4,421.0 L688.0,427.6 L694.4,434.5 L700.6,441.6 L706.6,448.9 L712.3,456.3 L717.9,463.9 L723.1,471.7 L728.2,479.6 L733.0,487.7 L737.5,495.9 L741.8,504.3 L745.8,512.8 L749.6,521.4 L753.1,530.1 L756.4,538.9 L759.3,547.9 L762.0,556.9 L764.4,565.9 L766.5,575.1 L768.4,584.3 L770.0,593.6 L640.0,640.0 L560.0,662.0 L480.0,668.0 L420.0,690.0 L380.0,705.0 L365.0,735.0 L310.0,785.0 L240.0,795.0 L195.0,765.0 L167.0,745.0 L242.0,633.0 L227.0,624.0 L267.0,566.0 L407.0,376.0 L280.8,285.3 L297.3,261.5 L342.0,292.0Z" fill="url(#m0b)"/>
<path d="M475.8,700.0 L471.0,699.6 L466.3,698.9 L461.7,697.9 L457.1,696.5 L452.7,694.8 L448.3,692.7 L444.2,690.4 L440.3,687.7 L436.5,684.7 L433.0,681.5 L429.7,678.0 L426.8,674.3 L424.0,670.4 L421.6,666.3 L419.5,662.0 L417.8,657.6 L416.3,653.1 L415.2,648.4 L414.5,643.7 L414.1,639.0 L414.0,634.2 L414.3,629.5 L415.0,624.7 L416.0,620.1 L417.4,615.5 L419.1,611.1 L421.1,606.7 L423.4,602.6 L426.0,598.6 L429.0,594.9 L447.4,610.3 L445.5,612.6 L443.9,615.1 L442.4,617.7 L441.2,620.4 L440.1,623.2 L439.3,626.1 L438.6,629.0 L438.2,631.9 L438.0,634.9 L438.0,637.9 L438.3,640.8 L438.8,643.8 L439.4,646.7 L440.3,649.5 L441.5,652.3 L442.8,654.9 L444.3,657.5 L446.0,660.0 L447.8,662.3 L449.9,664.4 L452.1,666.5 L454.4,668.3 L456.9,670.0 L459.5,671.4 L462.2,672.7 L464.9,673.8 L467.8,674.7 L470.7,675.3 L473.6,675.8 L476.6,676.0Z" fill="#fff6d0"/>
<path d="M476.6,676.0 L473.6,675.8 L470.7,675.3 L467.8,674.7 L464.9,673.8 L462.2,672.7 L459.5,671.4 L456.9,670.0 L454.4,668.3 L452.1,666.5 L449.9,664.4 L447.8,662.3 L446.0,660.0 L444.3,657.5 L442.8,654.9 L441.5,652.3 L440.3,649.5 L439.4,646.7 L438.8,643.8 L438.3,640.8 L438.0,637.9 L438.0,634.9 L438.2,631.9 L438.6,629.0 L439.3,626.1 L440.1,623.2 L441.2,620.4 L442.4,617.7 L443.9,615.1 L445.5,612.6 L447.4,610.3 M476.4,682.0 L473.0,681.7 L469.6,681.2 L466.2,680.5 L463.0,679.5 L459.8,678.2 L456.7,676.8 L453.7,675.1 L450.9,673.2 L448.2,671.0 L445.7,668.7 L443.3,666.2 L441.2,663.6 L439.2,660.7 L437.5,657.8 L436.0,654.7 L434.7,651.5 L433.7,648.3 L432.9,644.9 L432.3,641.6 L432.0,638.1 L432.0,634.7 L432.2,631.3 L432.7,627.9 L433.4,624.6 L434.4,621.3 L435.6,618.1 L437.1,615.0 L438.8,612.0 L440.7,609.1 L442.8,606.4 M476.2,688.0 L472.3,687.7 L468.5,687.1 L464.7,686.3 L461.0,685.1 L457.4,683.7 L453.9,682.1 L450.5,680.2 L447.3,678.0 L444.3,675.6 L441.4,673.0 L438.8,670.2 L436.4,667.1 L434.2,664.0 L432.2,660.6 L430.5,657.2 L429.1,653.6 L427.9,649.9 L427.0,646.1 L426.4,642.3 L426.1,638.4 L426.0,634.5 L426.3,630.7 L426.8,626.9 L427.6,623.1 L428.7,619.4 L430.1,615.7 L431.8,612.2 L433.6,608.9 L435.8,605.6 L438.2,602.6 M476.0,694.0 L471.7,693.7 L467.4,693.0 L463.2,692.1 L459.1,690.8 L455.0,689.3 L451.1,687.4 L447.4,685.3 L443.8,682.8 L440.4,680.2 L437.2,677.3 L434.3,674.1 L431.6,670.7 L429.1,667.2 L426.9,663.5 L425.0,659.6 L423.4,655.6 L422.1,651.5 L421.1,647.3 L420.4,643.0 L420.1,638.7 L420.0,634.4 L420.3,630.1 L420.9,625.8 L421.8,621.6 L423.1,617.4 L424.6,613.4 L426.4,609.5 L428.5,605.7 L430.9,602.1 L433.6,598.7 M475.8,700.0 L471.0,699.6 L466.3,698.9 L461.7,697.9 L457.1,696.5 L452.7,694.8 L448.3,692.7 L444.2,690.4 L440.3,687.7 L436.5,684.7 L433.0,681.5 L429.7,678.0 L426.8,674.3 L424.0,670.4 L421.6,666.3 L419.5,662.0 L417.8,657.6 L416.3,653.1 L415.2,648.4 L414.5,643.7 L414.1,639.0 L414.0,634.2 L414.3,629.5 L415.0,624.7 L416.0,620.1 L417.4,615.5 L419.1,611.1 L421.1,606.7 L423.4,602.6 L426.0,598.6 L429.0,594.9 M476.6,676.0 L475.8,700.0 M470.7,675.3 L466.3,698.9 M465.0,673.8 L457.2,696.5 M459.5,671.5 L448.4,692.8 M454.5,668.4 L440.4,687.8 M450.0,664.5 L433.1,681.6 M446.1,660.1 L426.9,674.5 M442.8,655.1 L421.8,666.5 M440.4,649.7 L417.9,657.9 M438.8,644.0 L415.3,648.8 M438.1,638.1 L414.1,639.3 M438.2,632.2 L414.3,629.9 M439.2,626.3 L415.9,620.5 M441.0,620.7 L418.9,611.5 M443.7,615.4 L423.1,603.0 M447.1,610.6 L428.6,595.3" fill="none" stroke="#6b6357" stroke-width="1"/>
<clipPath id="m0po"><path d="M407.4,198.0 L658.0,372.0 L645.4,390.8 L653.0,396.4 L660.4,402.2 L667.6,408.2 L674.6,414.5 L681.4,421.0 L688.0,427.6 L694.4,434.5 L700.6,441.6 L706.6,448.9 L712.3,456.3 L717.9,463.9 L723.1,471.7 L728.2,479.6 L733.0,487.7 L737.5,495.9 L741.8,504.3 L745.8,512.8 L749.6,521.4 L753.1,530.1 L756.4,538.9 L759.3,547.9 L762.0,556.9 L764.4,565.9 L766.5,575.1 L768.4,584.3 L770.0,593.6 L771.2,602.9 L772.2,612.2 L772.9,621.6 L773.4,631.0 L800.0,631.0 L800.0,938.0 L684.0,938.0 L684.0,993.0 L652.0,993.0 L652.0,836.0 L416.0,836.0 L416.0,853.0 L345.0,853.0 L345.0,830.0 L210.0,830.0 L210.0,821.0 L202.5,820.4 L195.2,818.5 L188.4,815.5 L182.1,811.3 L176.6,806.2 L172.0,800.2 L168.6,793.5 L166.2,786.4 L165.1,778.9 L165.2,771.4 L166.6,764.0 L169.2,757.0 L167.0,745.0 L242.0,633.0 L227.0,624.0 L267.0,566.0 L407.0,376.0 L280.8,285.3 L297.3,261.5 L342.0,292.0Z"/></clipPath>
<g clip-path="url(#m0po)">
<path d="M208.4,822.0 L204.4,821.7 L200.5,821.0 L196.7,820.0 L193.0,818.7 L189.4,817.1 L185.9,815.2 L182.6,813.0 L179.5,810.5 L176.7,807.7 L174.1,804.7 L171.7,801.5 L169.7,798.2 L167.9,794.6 L166.5,790.9 L165.4,787.1 L164.6,783.2 L164.1,779.3 L164.0,775.4 L164.2,771.4 L164.8,767.5 L165.7,763.6 L166.9,759.9 L168.5,756.2 L170.3,752.7 L172.5,749.4 L174.9,746.3 L177.6,743.4 L180.5,740.7 L183.7,738.3 L187.0,736.2 L199.5,757.8 L198.0,758.8 L196.5,759.9 L195.2,761.1 L194.0,762.4 L192.9,763.9 L191.9,765.4 L191.0,767.0 L190.3,768.6 L189.8,770.4 L189.4,772.1 L189.1,773.9 L189.0,775.7 L189.1,777.5 L189.3,779.3 L189.6,781.1 L190.1,782.8 L190.8,784.5 L191.6,786.1 L192.5,787.7 L193.6,789.1 L194.8,790.5 L196.1,791.7 L197.5,792.9 L199.0,793.9 L200.6,794.8 L202.2,795.5 L203.9,796.1 L205.7,796.6 L207.5,796.8 L209.3,797.0Z" fill="#fff6d0"/>
<path d="M209.3,797.0 L207.5,796.8 L205.7,796.6 L203.9,796.1 L202.2,795.5 L200.6,794.8 L199.0,793.9 L197.5,792.9 L196.1,791.7 L194.8,790.5 L193.6,789.1 L192.5,787.7 L191.6,786.1 L190.8,784.5 L190.1,782.8 L189.6,781.1 L189.3,779.3 L189.1,777.5 L189.0,775.7 L189.1,773.9 L189.4,772.1 L189.8,770.4 L190.3,768.6 L191.0,767.0 L191.9,765.4 L192.9,763.9 L194.0,762.4 L195.2,761.1 L196.5,759.9 L198.0,758.8 L199.5,757.8 M209.1,803.0 L206.7,802.8 L204.4,802.4 L202.2,801.8 L200.0,801.1 L197.9,800.1 L195.9,799.0 L193.9,797.7 L192.1,796.2 L190.4,794.6 L188.9,792.9 L187.5,791.0 L186.3,789.0 L185.3,786.9 L184.5,784.8 L183.8,782.5 L183.3,780.3 L183.1,777.9 L183.0,775.6 L183.1,773.3 L183.5,771.0 L184.0,768.7 L184.7,766.5 L185.6,764.4 L186.7,762.3 L188.0,760.4 L189.4,758.5 L191.0,756.8 L192.7,755.3 L194.5,753.9 L196.5,752.6 M208.8,809.0 L206.0,808.8 L203.2,808.3 L200.5,807.6 L197.8,806.7 L195.2,805.5 L192.7,804.1 L190.4,802.5 L188.1,800.7 L186.1,798.8 L184.2,796.6 L182.6,794.3 L181.1,791.9 L179.8,789.4 L178.8,786.7 L178.0,784.0 L177.4,781.2 L177.1,778.4 L177.0,775.5 L177.2,772.7 L177.6,769.9 L178.2,767.1 L179.1,764.4 L180.2,761.8 L181.5,759.3 L183.1,756.9 L184.8,754.7 L186.7,752.6 L188.8,750.7 L191.1,748.9 L193.5,747.4 M208.6,815.0 L205.3,814.7 L202.0,814.2 L198.7,813.3 L195.6,812.2 L192.5,810.9 L189.6,809.2 L186.8,807.3 L184.2,805.2 L181.8,802.9 L179.5,800.4 L177.6,797.7 L175.8,794.8 L174.3,791.8 L173.1,788.7 L172.2,785.4 L171.5,782.1 L171.1,778.8 L171.0,775.5 L171.2,772.1 L171.7,768.8 L172.4,765.5 L173.5,762.3 L174.8,759.2 L176.4,756.3 L178.2,753.4 L180.2,750.8 L182.5,748.3 L185.0,746.1 L187.7,744.0 L190.5,742.2 M208.4,821.0 L204.6,820.7 L200.7,820.0 L197.0,819.1 L193.3,817.8 L189.8,816.2 L186.4,814.3 L183.2,812.2 L180.2,809.7 L177.4,807.0 L174.9,804.1 L172.6,801.0 L170.6,797.7 L168.8,794.2 L167.4,790.6 L166.3,786.9 L165.6,783.1 L165.1,779.2 L165.0,775.4 L165.2,771.5 L165.8,767.7 L166.7,763.9 L167.9,760.2 L169.4,756.7 L171.2,753.2 L173.3,750.0 L175.7,746.9 L178.3,744.1 L181.2,741.5 L184.2,739.1 L187.5,737.0 M209.3,797.0 L208.4,822.0 M205.8,796.6 L200.8,821.1 M202.5,795.6 L193.5,818.9 M199.3,794.1 L186.7,815.6 M196.5,792.1 L180.4,811.2 M194.0,789.6 L175.0,805.9 M192.0,786.8 L170.6,799.7 M190.5,783.7 L167.2,792.9 M189.5,780.4 L165.0,785.6 M189.0,776.9 L164.0,778.0 M189.2,773.4 L164.3,770.4 M189.9,770.0 L165.9,762.9 M191.1,766.8 L168.7,755.8 M192.9,763.8 L172.6,749.3 M195.2,761.2 L177.5,743.5 M197.8,758.9 L183.3,738.6" fill="none" stroke="#6b6357" stroke-width="1"/>
</g>
<path d="M593.3,408.9 L620.0,427.8 L594.4,463.3 L566.7,444.4Z" fill="#fff"/>
<path d="M531.0,436.9 L542.4,420.5 L549.0,425.1 L537.6,441.5Z" fill="#fff"/>
<path d="M506.5,481.5 L494.9,473.6 L502.3,462.9 L513.9,470.8Z" fill="#fff"/>
<path d="M511.0,540.9 L541.0,526.0 L604.0,643.4 L574.0,658.3Z" fill="#fff"/>
<path d="M684.4,632.6 L728.0,632.6 L728.0,667.8 L684.4,667.8Z" fill="#fff"/>
<path d="M520.5,695.5 L532.2,695.5 L532.2,702.9 L520.5,702.9Z" fill="#fff"/>
<path d="M620.5,696.5 L642.9,696.5 L642.9,704.0 L620.5,704.0Z" fill="#fff"/>
<path d="M666.3,696.5 L691.8,696.5 L691.8,704.0 L666.3,704.0Z" fill="#fff"/>
<path d="M601.0,696.0 L616.0,696.0 L616.0,708.0 L601.0,708.0Z" fill="#fff"/>
<path d="M459.1,619.6 L479.1,632.6 L455.1,668.8 L453.0,667.3 L451.1,665.6 L449.3,663.9 L447.6,662.0 L446.0,660.0 L444.6,657.9 L443.2,655.8 L442.1,653.6 L441.0,651.3 L440.1,648.9Z" fill="#fff"/>
<path d="M444.3,560.7 L451.1,550.8 L457.7,555.3 L450.9,565.2Z" fill="#fff"/>
<path d="M378.0,656.5 L368.2,649.7 L375.0,639.9 L384.8,646.7Z" fill="#fff"/>
<path d="M523.6,564.4 L553.6,549.5" stroke="#6b6357" stroke-width="1"/>
<path d="M536.2,587.9 L566.2,573.0" stroke="#6b6357" stroke-width="1"/>
<path d="M548.8,611.3 L578.8,596.4" stroke="#6b6357" stroke-width="1"/>
<path d="M561.4,634.8 L591.4,619.9" stroke="#6b6357" stroke-width="1"/>
<g fill="none" stroke="#6a1ee8" stroke-width="1.3">
<path d="M297.3,261.5 L342.0,292.0 L407.4,198.0 L600.5,331.0"/>
<path d="M319.0,313.0 L407.0,376.0 L381.0,412.0"/>
<path d="M394.0,327.4 L438.7,358.3"/>
<path d="M454.7,370.0 L529.2,420.0"/>
<path d="M575.0,367.8 L601.6,334.8"/>
<path d="M612.2,359.6 L555.6,458.9 L585.6,478.9 L646.7,393.3"/>
<path d="M593.0,346.5 L631.4,371.0"/>
<path d="M506.5,481.5 L494.9,473.6 L502.3,462.9 L513.9,470.8 L506.5,481.5"/>
<path d="M543.3,523.6 L511.0,540.9 L574.0,658.3 L605.5,641.7 L583.5,607.0 L609.4,593.7"/>
<path d="M560.0,514.5 L566.1,511.0 L629.1,629.9 L623.0,633.0"/>
<path d="M666.3,632.6 L781.3,632.6 L781.3,668.0 L666.3,668.0 L666.3,632.6"/>
<path d="M781.3,668.0 L781.3,678.0"/>
<path d="M601.0,696.0 L616.0,696.0 L616.0,708.0 L601.0,708.0 L601.0,696.0"/>
<path d="M781.3,693.0 L781.3,702.0 L752.5,702.0"/>
<path d="M781.3,702.0 L797.0,702.0"/>
<path d="M683.7,693.0 L683.7,887.0"/>
<path d="M683.7,905.0 L683.7,938.0"/>
<path d="M800.0,748.0 L800.0,938.0 L684.0,938.0 L684.0,993.0 L652.0,993.0 L652.0,836.0 L617.0,836.0"/>
<path d="M346.4,747.7 L346.4,838.0"/>
<path d="M381.0,705.5 L381.0,829.5"/>
<path d="M415.7,705.5 L415.7,829.5"/>
<path d="M381.0,705.5 L415.7,705.5"/>
<path d="M381.0,725.4 L415.7,725.4"/>
<path d="M381.0,748.3 L415.7,748.3"/>
<path d="M346.0,829.5 L356.0,829.5"/>
<path d="M371.0,829.5 L395.0,829.5"/>
<path d="M410.0,829.5 L416.0,829.5"/>
<path d="M167.3,744.5 L210.6,774.4"/>
<path d="M209.8,799.6 L209.8,829.5"/>
<path d="M266.9,566.4 L383.7,645.8"/>
<path d="M227.0,624.0 L242.0,633.0"/>
<path d="M378.0,656.5 L368.2,649.7 L375.0,639.9 L384.8,646.7 L378.0,656.5"/>
<path d="M473.0,674.0 L480.2,674.0 L480.2,631.9 L448.0,609.6 L447.9,609.6 L445.9,612.1 L444.1,614.8 L442.5,617.7 L441.1,620.6 L439.9,623.7 L439.1,626.8 L438.5,630.0 L438.1,633.3 L438.0,636.5 L438.2,639.8 L438.6,643.0 L439.3,646.2 L440.3,649.3 L441.5,652.3 L442.9,655.2 L444.6,658.0 L446.5,660.7 L448.6,663.2 L450.9,665.5 L453.4,667.6 L456.1,669.5 L458.9,671.1 L461.8,672.6 L464.8,673.8"/>
<path d="M480.2,631.9 L510.0,616.0"/>
<path d="M473.0,674.0 L480.2,674.0"/>
</g>
<rect x="482.4" y="252.5" width="16" height="7" rx="1" transform="rotate(34.7 490.4 256.0)" fill="none" stroke="#f08a1c" stroke-width="1.5"/><circle cx="490.4" cy="256.0" r="2.8" fill="#000"/>
<rect x="457.3" y="290.2" width="16" height="7" rx="1" transform="rotate(34.7 465.3 293.7)" fill="none" stroke="#f08a1c" stroke-width="1.5"/><circle cx="465.3" cy="293.7" r="2.8" fill="#000"/>
<rect x="557.1" y="300.6" width="8" height="8" rx="2.8" fill="#f88a10"/><circle cx="561.1" cy="304.6" r="3" fill="#000"/>
<rect x="596.1" y="326.6" width="8" height="8" rx="2.8" fill="#f88a10"/><circle cx="600.1" cy="330.6" r="3" fill="#000"/>
<rect x="532.2" y="337.2" width="8" height="8" rx="2.8" fill="#f88a10"/><circle cx="536.2" cy="341.2" r="3" fill="#000"/>
<rect x="419.0" y="345.8" width="16" height="7" rx="1" transform="rotate(34.7 427.0 349.3)" fill="none" stroke="#f08a1c" stroke-width="1.5"/><circle cx="427.0" cy="349.3" r="2.8" fill="#000"/>
<rect x="570.6" y="363.8" width="8" height="8" rx="2.8" fill="#f88a10"/><circle cx="574.6" cy="367.8" r="3" fill="#000"/>
<rect x="494.3" y="393.0" width="8" height="8" rx="2.8" fill="#f88a10"/><circle cx="498.3" cy="397.0" r="3" fill="#000"/>
<rect x="384.9" y="403.8" width="16" height="7" rx="1" transform="rotate(34.7 392.9 407.3)" fill="none" stroke="#f08a1c" stroke-width="1.5"/><circle cx="392.9" cy="407.3" r="2.8" fill="#000"/>
<rect x="457.0" y="449.3" width="8" height="8" rx="2.8" fill="#f88a10"/><circle cx="461.0" cy="453.3" r="3" fill="#000"/>
<rect x="498.7" y="478.2" width="8" height="8" rx="2.8" fill="#f88a10"/><circle cx="502.7" cy="482.2" r="3" fill="#000"/>
<rect x="618.2" y="476.4" width="8" height="8" rx="2.8" fill="#f88a10"/><circle cx="622.2" cy="480.4" r="3" fill="#000"/>
<rect x="691.6" y="437.1" width="8" height="8" rx="2.8" fill="#f88a10"/><circle cx="695.6" cy="441.1" r="3" fill="#000"/>
<rect x="649.3" y="534.9" width="8" height="8" rx="2.8" fill="#f88a10"/><circle cx="653.3" cy="538.9" r="3" fill="#000"/>
<rect x="460.4" y="532.7" width="8" height="8" rx="2.8" fill="#f88a10"/><circle cx="464.4" cy="536.7" r="3" fill="#000"/>
<rect x="728.9" y="494.9" width="8" height="8" rx="2.8" fill="#f88a10"/><circle cx="732.9" cy="498.9" r="3" fill="#000"/>
<rect x="650.2" y="536.5" width="8" height="8" rx="2.8" fill="#f88a10"/><circle cx="654.2" cy="540.5" r="3" fill="#000"/>
<rect x="756.0" y="556.7" width="8" height="8" rx="2.8" fill="#f88a10"/><circle cx="760.0" cy="560.7" r="3" fill="#000"/>
<rect x="681.9" y="596.3" width="8" height="8" rx="2.8" fill="#f88a10"/><circle cx="685.9" cy="600.3" r="3" fill="#000"/>
<rect x="545.6" y="692.1" width="8" height="14" fill="none" stroke="#f88a10" stroke-width="1.7"/><circle cx="549.6" cy="699.1" r="3" fill="#000"/>
<circle cx="616.3" cy="699.1" r="4.2" fill="#f08a1c"/><circle cx="616.3" cy="699.1" r="3.2" fill="#6a1ee8"/>
<rect x="748.5" y="698.9" width="8" height="8" rx="2.8" fill="#f88a10"/><circle cx="752.5" cy="702.9" r="3" fill="#000"/>
<rect x="793.2" y="698.9" width="8" height="8" rx="2.8" fill="#f88a10"/><circle cx="797.2" cy="702.9" r="3" fill="#000"/>
<rect x="346.8" y="460.1" width="16" height="7" rx="1" transform="rotate(34.7 354.8 463.6)" fill="none" stroke="#f08a1c" stroke-width="1.5"/><circle cx="354.8" cy="463.6" r="2.8" fill="#000"/>
<rect x="309.5" y="515.9" width="16" height="7" rx="1" transform="rotate(34.7 317.5 519.4)" fill="none" stroke="#f08a1c" stroke-width="1.5"/><circle cx="317.5" cy="519.4" r="2.8" fill="#000"/>
<rect x="418.2" y="505.8" width="8" height="8" rx="2.8" fill="#f88a10"/><circle cx="422.2" cy="509.8" r="3" fill="#000"/>
<rect x="460.3" y="533.5" width="8" height="8" rx="2.8" fill="#f88a10"/><circle cx="464.3" cy="537.5" r="3" fill="#000"/>
<rect x="380.4" y="561.2" width="8" height="8" rx="2.8" fill="#f88a10"/><circle cx="384.4" cy="565.2" r="3" fill="#000"/>
<rect x="305.1" y="673.1" width="8" height="8" rx="2.8" fill="#f88a10"/><circle cx="309.1" cy="677.1" r="3" fill="#000"/>
<circle cx="242.9" cy="633.8" r="4.2" fill="#f08a1c"/><circle cx="242.9" cy="633.8" r="3.2" fill="#6a1ee8"/>
<rect x="478.2" y="746.4" width="8" height="8" rx="2.8" fill="#f88a10"/><circle cx="482.2" cy="750.4" r="3" fill="#000"/>
<rect x="545.9" y="746.4" width="8" height="8" rx="2.8" fill="#f88a10"/><circle cx="549.9" cy="750.4" r="3" fill="#000"/>
<rect x="613.3" y="746.4" width="8" height="8" rx="2.8" fill="#f88a10"/><circle cx="617.3" cy="750.4" r="3" fill="#000"/>
<rect x="478.2" y="823.4" width="8" height="14" fill="none" stroke="#f88a10" stroke-width="1.7"/><circle cx="482.2" cy="830.4" r="3" fill="#000"/>
<rect x="545.9" y="823.4" width="8" height="14" fill="none" stroke="#f88a10" stroke-width="1.7"/><circle cx="549.9" cy="830.4" r="3" fill="#000"/>
<rect x="613.3" y="823.4" width="8" height="14" fill="none" stroke="#f88a10" stroke-width="1.7"/><circle cx="617.3" cy="830.4" r="3" fill="#000"/>
<rect x="201.9" y="685.4" width="8" height="8" rx="2.8" fill="#f88a10"/><circle cx="205.9" cy="689.4" r="3" fill="#000"/>
<rect x="163.3" y="740.5" width="8" height="8" rx="2.8" fill="#f88a10"/><circle cx="167.3" cy="744.5" r="3" fill="#000"/>
<rect x="276.3" y="735.5" width="8" height="8" rx="2.8" fill="#f88a10"/><circle cx="280.3" cy="739.5" r="3" fill="#000"/>
<circle cx="210.6" cy="774.4" r="4.2" fill="#f08a1c"/><circle cx="210.6" cy="774.4" r="3.2" fill="#6a1ee8"/>
<rect x="208.2" y="823.1" width="8" height="8" rx="2.8" fill="#f88a10"/><circle cx="212.2" cy="827.1" r="3" fill="#000"/>
<rect x="275.3" y="823.1" width="8" height="8" rx="2.8" fill="#f88a10"/><circle cx="279.3" cy="827.1" r="3" fill="#000"/>
<circle cx="684.4" cy="750.0" r="4.2" fill="#f08a1c"/><circle cx="684.4" cy="750.0" r="3.2" fill="#6a1ee8"/>
<rect x="748.2" y="746.0" width="8" height="8" rx="2.8" fill="#f88a10"/><circle cx="752.2" cy="750.0" r="3" fill="#000"/>
<rect x="793.0" y="746.0" width="8" height="8" rx="2.8" fill="#f88a10"/><circle cx="797.0" cy="750.0" r="3" fill="#000"/>
<rect x="680.4" y="825.3" width="8" height="19" fill="none" stroke="#f88a10" stroke-width="1.7"/><circle cx="684.4" cy="834.8" r="3" fill="#000"/>
<rect x="748.2" y="825.3" width="8" height="19" fill="none" stroke="#f88a10" stroke-width="1.7"/><circle cx="752.2" cy="834.8" r="3" fill="#000"/>
<rect x="793.0" y="825.3" width="8" height="19" fill="none" stroke="#f88a10" stroke-width="1.7"/><circle cx="797.0" cy="834.8" r="3" fill="#000"/>
<circle cx="518.1" cy="555.9" r="2.6" fill="#6a1ee8"/>
<circle cx="530.7" cy="577.2" r="2.6" fill="#6a1ee8"/>
<circle cx="554.3" cy="622.0" r="2.6" fill="#6a1ee8"/>
<circle cx="594.5" cy="629.1" r="2.6" fill="#6a1ee8"/>
<circle cx="439.4" cy="648.5" r="2.8" fill="#6a1ee8"/>
<circle cx="446.7" cy="677.8" r="2.0" fill="#6a1ee8"/>
<circle cx="647.6" cy="768.5" r="2.0" fill="#6a1ee8"/>
<circle cx="519.1" cy="612.6" r="2.5" fill="#1030ff"/>
<path d="M179.0,405.0 L334.4,346.7 L516.0,592.2 L485.9,674.1 L430.0,732.3 L130.0,570.8Z" fill="#ff0000" fill-opacity="0.2"/>
<g clip-path="url(#cs0)"><rect x="402.4" y="590.6" width="167.0" height="167.0" fill="#fff"/>
<pattern id="s0a" patternUnits="userSpaceOnUse" width="6.000" height="6.000" patternTransform="rotate(0.00)"><rect width="6.000" height="6.000" fill="#fff6d0"/><rect width="6.000" height="1.000" fill="#6b6357"/><rect width="1.000" height="6.000" fill="#6b6357"/></pattern>
<pattern id="s0b" patternUnits="userSpaceOnUse" width="6.200" height="6.200" patternTransform="rotate(34.70)"><rect width="6.200" height="6.200" fill="#fff6d0"/><rect width="6.200" height="1.000" fill="#6b6357"/><rect width="1.000" height="6.200" fill="#6b6357"/></pattern>
<path d="M407.4,198.0 L658.0,372.0 L645.4,390.8 L653.0,396.4 L660.4,402.2 L667.6,408.2 L674.6,414.5 L681.4,421.0 L688.0,427.6 L694.4,434.5 L700.6,441.6 L706.6,448.9 L712.3,456.3 L717.9,463.9 L723.1,471.7 L728.2,479.6 L733.0,487.7 L737.5,495.9 L741.8,504.3 L745.8,512.8 L749.6,521.4 L753.1,530.1 L756.4,538.9 L759.3,547.9 L762.0,556.9 L764.4,565.9 L766.5,575.1 L768.4,584.3 L770.0,593.6 L771.2,602.9 L772.2,612.2 L772.9,621.6 L773.4,631.0 L800.0,631.0 L800.0,938.0 L684.0,938.0 L684.0,993.0 L652.0,993.0 L652.0,836.0 L416.0,836.0 L416.0,853.0 L345.0,853.0 L345.0,830.0 L210.0,830.0 L210.0,821.0 L202.5,820.4 L195.2,818.5 L188.4,815.5 L182.1,811.3 L176.6,806.2 L172.0,800.2 L168.6,793.5 L166.2,786.4 L165.1,778.9 L165.2,771.4 L166.6,764.0 L169.2,757.0 L167.0,745.0 L242.0,633.0 L227.0,624.0 L267.0,566.0 L407.0,376.0 L280.8,285.3 L297.3,261.5 L342.0,292.0Z" fill="url(#s0a)"/>
<path d="M407.4,198.0 L658.0,372.0 L645.4,390.8 L653.0,396.4 L660.4,402.2 L667.6,408.2 L674.6,414.5 L681.4,421.0 L688.0,427.6 L694.4,434.5 L700.6,441.6 L706.6,448.9 L712.3,456.3 L717.9,463.9 L723.1,471.7 L728.2,479.6 L733.0,487.7 L737.5,495.9 L741.8,504.3 L745.8,512.8 L749.6,521.4 L753.1,530.1 L756.4,538.9 L759.3,547.9 L762.0,556.9 L764.4,565.9 L766.5,575.1 L768.4,584.3 L770.0,593.6 L640.0,640.0 L560.0,662.0 L480.0,668.0 L420.0,690.0 L380.0,705.0 L365.0,735.0 L310.0,785.0 L240.0,795.0 L195.0,765.0 L167.0,745.0 L242.0,633.0 L227.0,624.0 L267.0,566.0 L407.0,376.0 L280.8,285.3 L297.3,261.5 L342.0,292.0Z" fill="url(#s0b)"/>
<path d="M475.8,700.0 L471.0,699.6 L466.3,698.9 L461.7,697.9 L457.1,696.5 L452.7,694.8 L448.3,692.7 L444.2,690.4 L440.3,687.7 L436.5,684.7 L433.0,681.5 L429.7,678.0 L426.8,674.3 L424.0,670.4 L421.6,666.3 L419.5,662.0 L417.8,657.6 L416.3,653.1 L415.2,648.4 L414.5,643.7 L414.1,639.0 L414.0,634.2 L414.3,629.5 L415.0,624.7 L416.0,620.1 L417.4,615.5 L419.1,611.1 L421.1,606.7 L423.4,602.6 L426.0,598.6 L429.0,594.9 L447.4,610.3 L445.5,612.6 L443.9,615.1 L442.4,617.7 L441.2,620.4 L440.1,623.2 L439.3,626.1 L438.6,629.0 L438.2,631.9 L438.0,634.9 L438.0,637.9 L438.3,640.8 L438.8,643.8 L439.4,646.7 L440.3,649.5 L441.5,652.3 L442.8,654.9 L444.3,657.5 L446.0,660.0 L447.8,662.3 L449.9,664.4 L452.1,666.5 L454.4,668.3 L456.9,670.0 L459.5,671.4 L462.2,672.7 L464.9,673.8 L467.8,674.7 L470.7,675.3 L473.6,675.8 L476.6,676.0Z" fill="#fff6d0"/>
<path d="M476.6,676.0 L473.6,675.8 L470.7,675.3 L467.8,674.7 L464.9,673.8 L462.2,672.7 L459.5,671.4 L456.9,670.0 L454.4,668.3 L452.1,666.5 L449.9,664.4 L447.8,662.3 L446.0,660.0 L444.3,657.5 L442.8,654.9 L441.5,652.3 L440.3,649.5 L439.4,646.7 L438.8,643.8 L438.3,640.8 L438.0,637.9 L438.0,634.9 L438.2,631.9 L438.6,629.0 L439.3,626.1 L440.1,623.2 L441.2,620.4 L442.4,617.7 L443.9,615.1 L445.5,612.6 L447.4,610.3 M476.4,682.0 L473.0,681.7 L469.6,681.2 L466.2,680.5 L463.0,679.5 L459.8,678.2 L456.7,676.8 L453.7,675.1 L450.9,673.2 L448.2,671.0 L445.7,668.7 L443.3,666.2 L441.2,663.6 L439.2,660.7 L437.5,657.8 L436.0,654.7 L434.7,651.5 L433.7,648.3 L432.9,644.9 L432.3,641.6 L432.0,638.1 L432.0,634.7 L432.2,631.3 L432.7,627.9 L433.4,624.6 L434.4,621.3 L435.6,618.1 L437.1,615.0 L438.8,612.0 L440.7,609.1 L442.8,606.4 M476.2,688.0 L472.3,687.7 L468.5,687.1 L464.7,686.3 L461.0,685.1 L457.4,683.7 L453.9,682.1 L450.5,680.2 L447.3,678.0 L444.3,675.6 L441.4,673.0 L438.8,670.2 L436.4,667.1 L434.2,664.0 L432.2,660.6 L430.5,657.2 L429.1,653.6 L427.9,649.9 L427.0,646.1 L426.4,642.3 L426.1,638.4 L426.0,634.5 L426.3,630.7 L426.8,626.9 L427.6,623.1 L428.7,619.4 L430.1,615.7 L431.8,612.2 L433.6,608.9 L435.8,605.6 L438.2,602.6 M476.0,694.0 L471.7,693.7 L467.4,693.0 L463.2,692.1 L459.1,690.8 L455.0,689.3 L451.1,687.4 L447.4,685.3 L443.8,682.8 L440.4,680.2 L437.2,677.3 L434.3,674.1 L431.6,670.7 L429.1,667.2 L426.9,663.5 L425.0,659.6 L423.4,655.6 L422.1,651.5 L421.1,647.3 L420.4,643.0 L420.1,638.7 L420.0,634.4 L420.3,630.1 L420.9,625.8 L421.8,621.6 L423.1,617.4 L424.6,613.4 L426.4,609.5 L428.5,605.7 L430.9,602.1 L433.6,598.7 M475.8,700.0 L471.0,699.6 L466.3,698.9 L461.7,697.9 L457.1,696.5 L452.7,694.8 L448.3,692.7 L444.2,690.4 L440.3,687.7 L436.5,684.7 L433.0,681.5 L429.7,678.0 L426.8,674.3 L424.0,670.4 L421.6,666.3 L419.5,662.0 L417.8,657.6 L416.3,653.1 L415.2,648.4 L414.5,643.7 L414.1,639.0 L414.0,634.2 L414.3,629.5 L415.0,624.7 L416.0,620.1 L417.4,615.5 L419.1,611.1 L421.1,606.7 L423.4,602.6 L426.0,598.6 L429.0,594.9 M476.6,676.0 L475.8,700.0 M470.7,675.3 L466.3,698.9 M465.0,673.8 L457.2,696.5 M459.5,671.5 L448.4,692.8 M454.5,668.4 L440.4,687.8 M450.0,664.5 L433.1,681.6 M446.1,660.1 L426.9,674.5 M442.8,655.1 L421.8,666.5 M440.4,649.7 L417.9,657.9 M438.8,644.0 L415.3,648.8 M438.1,638.1 L414.1,639.3 M438.2,632.2 L414.3,629.9 M439.2,626.3 L415.9,620.5 M441.0,620.7 L418.9,611.5 M443.7,615.4 L423.1,603.0 M447.1,610.6 L428.6,595.3" fill="none" stroke="#6b6357" stroke-width="1"/>
<clipPath id="s0po"><path d="M407.4,198.0 L658.0,372.0 L645.4,390.8 L653.0,396.4 L660.4,402.2 L667.6,408.2 L674.6,414.5 L681.4,421.0 L688.0,427.6 L694.4,434.5 L700.6,441.6 L706.6,448.9 L712.3,456.3 L717.9,463.9 L723.1,471.7 L728.2,479.6 L733.0,487.7 L737.5,495.9 L741.8,504.3 L745.8,512.8 L749.6,521.4 L753.1,530.1 L756.4,538.9 L759.3,547.9 L762.0,556.9 L764.4,565.9 L766.5,575.1 L768.4,584.3 L770.0,593.6 L771.2,602.9 L772.2,612.2 L772.9,621.6 L773.4,631.0 L800.0,631.0 L800.0,938.0 L684.0,938.0 L684.0,993.0 L652.0,993.0 L652.0,836.0 L416.0,836.0 L416.0,853.0 L345.0,853.0 L345.0,830.0 L210.0,830.0 L210.0,821.0 L202.5,820.4 L195.2,818.5 L188.4,815.5 L182.1,811.3 L176.6,806.2 L172.0,800.2 L168.6,793.5 L166.2,786.4 L165.1,778.9 L165.2,771.4 L166.6,764.0 L169.2,757.0 L167.0,745.0 L242.0,633.0 L227.0,624.0 L267.0,566.0 L407.0,376.0 L280.8,285.3 L297.3,261.5 L342.0,292.0Z"/></clipPath>
<g clip-path="url(#s0po)">
<path d="M208.4,822.0 L204.4,821.7 L200.5,821.0 L196.7,820.0 L193.0,818.7 L189.4,817.1 L185.9,815.2 L182.6,813.0 L179.5,810.5 L176.7,807.7 L174.1,804.7 L171.7,801.5 L169.7,798.2 L167.9,794.6 L166.5,790.9 L165.4,787.1 L164.6,783.2 L164.1,779.3 L164.0,775.4 L164.2,771.4 L164.8,767.5 L165.7,763.6 L166.9,759.9 L168.5,756.2 L170.3,752.7 L172.5,749.4 L174.9,746.3 L177.6,743.4 L180.5,740.7 L183.7,738.3 L187.0,736.2 L199.5,757.8 L198.0,758.8 L196.5,759.9 L195.2,761.1 L194.0,762.4 L192.9,763.9 L191.9,765.4 L191.0,767.0 L190.3,768.6 L189.8,770.4 L189.4,772.1 L189.1,773.9 L189.0,775.7 L189.1,777.5 L189.3,779.3 L189.6,781.1 L190.1,782.8 L190.8,784.5 L191.6,786.1 L192.5,787.7 L193.6,789.1 L194.8,790.5 L196.1,791.7 L197.5,792.9 L199.0,793.9 L200.6,794.8 L202.2,795.5 L203.9,796.1 L205.7,796.6 L207.5,796.8 L209.3,797.0Z" fill="#fff6d0"/>
<path d="M209.3,797.0 L207.5,796.8 L205.7,796.6 L203.9,796.1 L202.2,795.5 L200.6,794.8 L199.0,793.9 L197.5,792.9 L196.1,791.7 L194.8,790.5 L193.6,789.1 L192.5,787.7 L191.6,786.1 L190.8,784.5 L190.1,782.8 L189.6,781.1 L189.3,779.3 L189.1,777.5 L189.0,775.7 L189.1,773.9 L189.4,772.1 L189.8,770.4 L190.3,768.6 L191.0,767.0 L191.9,765.4 L192.9,763.9 L194.0,762.4 L195.2,761.1 L196.5,759.9 L198.0,758.8 L199.5,757.8 M209.1,803.0 L206.7,802.8 L204.4,802.4 L202.2,801.8 L200.0,801.1 L197.9,800.1 L195.9,799.0 L193.9,797.7 L192.1,796.2 L190.4,794.6 L188.9,792.9 L187.5,791.0 L186.3,789.0 L185.3,786.9 L184.5,784.8 L183.8,782.5 L183.3,780.3 L183.1,777.9 L183.0,775.6 L183.1,773.3 L183.5,771.0 L184.0,768.7 L184.7,766.5 L185.6,764.4 L186.7,762.3 L188.0,760.4 L189.4,758.5 L191.0,756.8 L192.7,755.3 L194.5,753.9 L196.5,752.6 M208.8,809.0 L206.0,808.8 L203.2,808.3 L200.5,807.6 L197.8,806.7 L195.2,805.5 L192.7,804.1 L190.4,802.5 L188.1,800.7 L186.1,798.8 L184.2,796.6 L182.6,794.3 L181.1,791.9 L179.8,789.4 L178.8,786.7 L178.0,784.0 L177.4,781.2 L177.1,778.4 L177.0,775.5 L177.2,772.7 L177.6,769.9 L178.2,767.1 L179.1,764.4 L180.2,761.8 L181.5,759.3 L183.1,756.9 L184.8,754.7 L186.7,752.6 L188.8,750.7 L191.1,748.9 L193.5,747.4 M208.6,815.0 L205.3,814.7 L202.0,814.2 L198.7,813.3 L195.6,812.2 L192.5,810.9 L189.6,809.2 L186.8,807.3 L184.2,805.2 L181.8,802.9 L179.5,800.4 L177.6,797.7 L175.8,794.8 L174.3,791.8 L173.1,788.7 L172.2,785.4 L171.5,782.1 L171.1,778.8 L171.0,775.5 L171.2,772.1 L171.7,768.8 L172.4,765.5 L173.5,762.3 L174.8,759.2 L176.4,756.3 L178.2,753.4 L180.2,750.8 L182.5,748.3 L185.0,746.1 L187.7,744.0 L190.5,742.2 M208.4,821.0 L204.6,820.7 L200.7,820.0 L197.0,819.1 L193.3,817.8 L189.8,816.2 L186.4,814.3 L183.2,812.2 L180.2,809.7 L177.4,807.0 L174.9,804.1 L172.6,801.0 L170.6,797.7 L168.8,794.2 L167.4,790.6 L166.3,786.9 L165.6,783.1 L165.1,779.2 L165.0,775.4 L165.2,771.5 L165.8,767.7 L166.7,763.9 L167.9,760.2 L169.4,756.7 L171.2,753.2 L173.3,750.0 L175.7,746.9 L178.3,744.1 L181.2,741.5 L184.2,739.1 L187.5,737.0 M209.3,797.0 L208.4,822.0 M205.8,796.6 L200.8,821.1 M202.5,795.6 L193.5,818.9 M199.3,794.1 L186.7,815.6 M196.5,792.1 L180.4,811.2 M194.0,789.6 L175.0,805.9 M192.0,786.8 L170.6,799.7 M190.5,783.7 L167.2,792.9 M189.5,780.4 L165.0,785.6 M189.0,776.9 L164.0,778.0 M189.2,773.4 L164.3,770.4 M189.9,770.0 L165.9,762.9 M191.1,766.8 L168.7,755.8 M192.9,763.8 L172.6,749.3 M195.2,761.2 L177.5,743.5 M197.8,758.9 L183.3,738.6" fill="none" stroke="#6b6357" stroke-width="1"/>
</g>
<path d="M593.3,408.9 L620.0,427.8 L594.4,463.3 L566.7,444.4Z" fill="#fff"/>
<path d="M531.0,436.9 L542.4,420.5 L549.0,425.1 L537.6,441.5Z" fill="#fff"/>
<path d="M506.5,481.5 L494.9,473.6 L502.3,462.9 L513.9,470.8Z" fill="#fff"/>
<path d="M511.0,540.9 L541.0,526.0 L604.0,643.4 L574.0,658.3Z" fill="#fff"/>
<path d="M684.4,632.6 L728.0,632.6 L728.0,667.8 L684.4,667.8Z" fill="#fff"/>
<path d="M520.5,695.5 L532.2,695.5 L532.2,702.9 L520.5,702.9Z" fill="#fff"/>
<path d="M620.5,696.5 L642.9,696.5 L642.9,704.0 L620.5,704.0Z" fill="#fff"/>
<path d="M666.3,696.5 L691.8,696.5 L691.8,704.0 L666.3,704.0Z" fill="#fff"/>
<path d="M601.0,696.0 L616.0,696.0 L616.0,708.0 L601.0,708.0Z" fill="#fff"/>
<path d="M459.1,619.6 L479.1,632.6 L455.1,668.8 L453.0,667.3 L451.1,665.6 L449.3,663.9 L447.6,662.0 L446.0,660.0 L444.6,657.9 L443.2,655.8 L442.1,653.6 L441.0,651.3 L440.1,648.9Z" fill="#fff"/>
<path d="M444.3,560.7 L451.1,550.8 L457.7,555.3 L450.9,565.2Z" fill="#fff"/>
<path d="M378.0,656.5 L368.2,649.7 L375.0,639.9 L384.8,646.7Z" fill="#fff"/>
<path d="M523.6,564.4 L553.6,549.5" stroke="#6b6357" stroke-width="1"/>
<path d="M536.2,587.9 L566.2,573.0" stroke="#6b6357" stroke-width="1"/>
<path d="M548.8,611.3 L578.8,596.4" stroke="#6b6357" stroke-width="1"/>
<path d="M561.4,634.8 L591.4,619.9" stroke="#6b6357" stroke-width="1"/>
<g fill="none" stroke="#6a1ee8" stroke-width="1.3">
<path d="M297.3,261.5 L342.0,292.0 L407.4,198.0 L600.5,331.0"/>
<path d="M319.0,313.0 L407.0,376.0 L381.0,412.0"/>
<path d="M394.0,327.4 L438.7,358.3"/>
<path d="M454.7,370.0 L529.2,420.0"/>
<path d="M575.0,367.8 L601.6,334.8"/>
<path d="M612.2,359.6 L555.6,458.9 L585.6,478.9 L646.7,393.3"/>
<path d="M593.0,346.5 L631.4,371.0"/>
<path d="M506.5,481.5 L494.9,473.6 L502.3,462.9 L513.9,470.8 L506.5,481.5"/>
<path d="M543.3,523.6 L511.0,540.9 L574.0,658.3 L605.5,641.7 L583.5,607.0 L609.4,593.7"/>
<path d="M560.0,514.5 L566.1,511.0 L629.1,629.9 L623.0,633.0"/>
<path d="M666.3,632.6 L781.3,632.6 L781.3,668.0 L666.3,668.0 L666.3,632.6"/>
<path d="M781.3,668.0 L781.3,678.0"/>
<path d="M601.0,696.0 L616.0,696.0 L616.0,708.0 L601.0,708.0 L601.0,696.0"/>
<path d="M781.3,693.0 L781.3,702.0 L752.5,702.0"/>
<path d="M781.3,702.0 L797.0,702.0"/>
<path d="M683.7,693.0 L683.7,887.0"/>
<path d="M683.7,905.0 L683.7,938.0"/>
<path d="M800.0,748.0 L800.0,938.0 L684.0,938.0 L684.0,993.0 L652.0,993.0 L652.0,836.0 L617.0,836.0"/>
<path d="M346.4,747.7 L346.4,838.0"/>
<path d="M381.0,705.5 L381.0,829.5"/>
<path d="M415.7,705.5 L415.7,829.5"/>
<path d="M381.0,705.5 L415.7,705.5"/>
<path d="M381.0,725.4 L415.7,725.4"/>
<path d="M381.0,748.3 L415.7,748.3"/>
<path d="M346.0,829.5 L356.0,829.5"/>
<path d="M371.0,829.5 L395.0,829.5"/>
<path d="M410.0,829.5 L416.0,829.5"/>
<path d="M167.3,744.5 L210.6,774.4"/>
<path d="M209.8,799.6 L209.8,829.5"/>
<path d="M266.9,566.4 L383.7,645.8"/>
<path d="M227.0,624.0 L242.0,633.0"/>
<path d="M378.0,656.5 L368.2,649.7 L375.0,639.9 L384.8,646.7 L378.0,656.5"/>
<path d="M473.0,674.0 L480.2,674.0 L480.2,631.9 L448.0,609.6 L447.9,609.6 L445.9,612.1 L444.1,614.8 L442.5,617.7 L441.1,620.6 L439.9,623.7 L439.1,626.8 L438.5,630.0 L438.1,633.3 L438.0,636.5 L438.2,639.8 L438.6,643.0 L439.3,646.2 L440.3,649.3 L441.5,652.3 L442.9,655.2 L444.6,658.0 L446.5,660.7 L448.6,663.2 L450.9,665.5 L453.4,667.6 L456.1,669.5 L458.9,671.1 L461.8,672.6 L464.8,673.8"/>
<path d="M480.2,631.9 L510.0,616.0"/>
<path d="M473.0,674.0 L480.2,674.0"/>
</g>
<rect x="482.4" y="252.5" width="16" height="7" rx="1" transform="rotate(34.7 490.4 256.0)" fill="none" stroke="#f08a1c" stroke-width="1.5"/><circle cx="490.4" cy="256.0" r="2.8" fill="#000"/>
<rect x="457.3" y="290.2" width="16" height="7" rx="1" transform="rotate(34.7 465.3 293.7)" fill="none" stroke="#f08a1c" stroke-width="1.5"/><circle cx="465.3" cy="293.7" r="2.8" fill="#000"/>
<rect x="557.1" y="300.6" width="8" height="8" rx="2.8" fill="#f88a10"/><circle cx="561.1" cy="304.6" r="3" fill="#000"/>
<rect x="596.1" y="326.6" width="8" height="8" rx="2.8" fill="#f88a10"/><circle cx="600.1" cy="330.6" r="3" fill="#000"/>
<rect x="532.2" y="337.2" width="8" height="8" rx="2.8" fill="#f88a10"/><circle cx="536.2" cy="341.2" r="3" fill="#000"/>
<rect x="419.0" y="345.8" width="16" height="7" rx="1" transform="rotate(34.7 427.0 349.3)" fill="none" stroke="#f08a1c" stroke-width="1.5"/><circle cx="427.0" cy="349.3" r="2.8" fill="#000"/>
<rect x="570.6" y="363.8" width="8" height="8" rx="2.8" fill="#f88a10"/><circle cx="574.6" cy="367.8" r="3" fill="#000"/>
<rect x="494.3" y="393.0" width="8" height="8" rx="2.8" fill="#f88a10"/><circle cx="498.3" cy="397.0" r="3" fill="#000"/>
<rect x="384.9" y="403.8" width="16" height="7" rx="1" transform="rotate(34.7 392.9 407.3)" fill="none" stroke="#f08a1c" stroke-width="1.5"/><circle cx="392.9" cy="407.3" r="2.8" fill="#000"/>
<rect x="457.0" y="449.3" width="8" height="8" rx="2.8" fill="#f88a10"/><circle cx="461.0" cy="453.3" r="3" fill="#000"/>
<rect x="498.7" y="478.2" width="8" height="8" rx="2.8" fill="#f88a10"/><circle cx="502.7" cy="482.2" r="3" fill="#000"/>
<rect x="618.2" y="476.4" width="8" height="8" rx="2.8" fill="#f88a10"/><circle cx="622.2" cy="480.4" r="3" fill="#000"/>
<rect x="691.6" y="437.1" width="8" height="8" rx="2.8" fill="#f88a10"/><circle cx="695.6" cy="441.1" r="3" fill="#000"/>
<rect x="649.3" y="534.9" width="8" height="8" rx="2.8" fill="#f88a10"/><circle cx="653.3" cy="538.9" r="3" fill="#000"/>
<rect x="460.4" y="532.7" width="8" height="8" rx="2.8" fill="#f88a10"/><circle cx="464.4" cy="536.7" r="3" fill="#000"/>
<rect x="728.9" y="494.9" width="8" height="8" rx="2.8" fill="#f88a10"/><circle cx="732.9" cy="498.9" r="3" fill="#000"/>
<rect x="650.2" y="536.5" width="8" height="8" rx="2.8" fill="#f88a10"/><circle cx="654.2" cy="540.5" r="3" fill="#000"/>
<rect x="756.0" y="556.7" width="8" height="8" rx="2.8" fill="#f88a10"/><circle cx="760.0" cy="560.7" r="3" fill="#000"/>
<rect x="681.9" y="596.3" width="8" height="8" rx="2.8" fill="#f88a10"/><circle cx="685.9" cy="600.3" r="3" fill="#000"/>
<rect x="545.6" y="692.1" width="8" height="14" fill="none" stroke="#f88a10" stroke-width="1.7"/><circle cx="549.6" cy="699.1" r="3" fill="#000"/>
<circle cx="616.3" cy="699.1" r="4.2" fill="#f08a1c"/><circle cx="616.3" cy="699.1" r="3.2" fill="#6a1ee8"/>
<rect x="748.5" y="698.9" width="8" height="8" rx="2.8" fill="#f88a10"/><circle cx="752.5" cy="702.9" r="3" fill="#000"/>
<rect x="793.2" y="698.9" width="8" height="8" rx="2.8" fill="#f88a10"/><circle cx="797.2" cy="702.9" r="3" fill="#000"/>
<rect x="346.8" y="460.1" width="16" height="7" rx="1" transform="rotate(34.7 354.8 463.6)" fill="none" stroke="#f08a1c" stroke-width="1.5"/><circle cx="354.8" cy="463.6" r="2.8" fill="#000"/>
<rect x="309.5" y="515.9" width="16" height="7" rx="1" transform="rotate(34.7 317.5 519.4)" fill="none" stroke="#f08a1c" stroke-width="1.5"/><circle cx="317.5" cy="519.4" r="2.8" fill="#000"/>
<rect x="418.2" y="505.8" width="8" height="8" rx="2.8" fill="#f88a10"/><circle cx="422.2" cy="509.8" r="3" fill="#000"/>
<rect x="460.3" y="533.5" width="8" height="8" rx="2.8" fill="#f88a10"/><circle cx="464.3" cy="537.5" r="3" fill="#000"/>
<rect x="380.4" y="561.2" width="8" height="8" rx="2.8" fill="#f88a10"/><circle cx="384.4" cy="565.2" r="3" fill="#000"/>
<rect x="305.1" y="673.1" width="8" height="8" rx="2.8" fill="#f88a10"/><circle cx="309.1" cy="677.1" r="3" fill="#000"/>
<circle cx="242.9" cy="633.8" r="4.2" fill="#f08a1c"/><circle cx="242.9" cy="633.8" r="3.2" fill="#6a1ee8"/>
<rect x="478.2" y="746.4" width="8" height="8" rx="2.8" fill="#f88a10"/><circle cx="482.2" cy="750.4" r="3" fill="#000"/>
<rect x="545.9" y="746.4" width="8" height="8" rx="2.8" fill="#f88a10"/><circle cx="549.9" cy="750.4" r="3" fill="#000"/>
<rect x="613.3" y="746.4" width="8" height="8" rx="2.8" fill="#f88a10"/><circle cx="617.3" cy="750.4" r="3" fill="#000"/>
<rect x="478.2" y="823.4" width="8" height="14" fill="none" stroke="#f88a10" stroke-width="1.7"/><circle cx="482.2" cy="830.4" r="3" fill="#000"/>
<rect x="545.9" y="823.4" width="8" height="14" fill="none" stroke="#f88a10" stroke-width="1.7"/><circle cx="549.9" cy="830.4" r="3" fill="#000"/>
<rect x="613.3" y="823.4" width="8" height="14" fill="none" stroke="#f88a10" stroke-width="1.7"/><circle cx="617.3" cy="830.4" r="3" fill="#000"/>
<rect x="201.9" y="685.4" width="8" height="8" rx="2.8" fill="#f88a10"/><circle cx="205.9" cy="689.4" r="3" fill="#000"/>
<rect x="163.3" y="740.5" width="8" height="8" rx="2.8" fill="#f88a10"/><circle cx="167.3" cy="744.5" r="3" fill="#000"/>
<rect x="276.3" y="735.5" width="8" height="8" rx="2.8" fill="#f88a10"/><circle cx="280.3" cy="739.5" r="3" fill="#000"/>
<circle cx="210.6" cy="774.4" r="4.2" fill="#f08a1c"/><circle cx="210.6" cy="774.4" r="3.2" fill="#6a1ee8"/>
<rect x="208.2" y="823.1" width="8" height="8" rx="2.8" fill="#f88a10"/><circle cx="212.2" cy="827.1" r="3" fill="#000"/>
<rect x="275.3" y="823.1" width="8" height="8" rx="2.8" fill="#f88a10"/><circle cx="279.3" cy="827.1" r="3" fill="#000"/>
<circle cx="684.4" cy="750.0" r="4.2" fill="#f08a1c"/><circle cx="684.4" cy="750.0" r="3.2" fill="#6a1ee8"/>
<rect x="748.2" y="746.0" width="8" height="8" rx="2.8" fill="#f88a10"/><circle cx="752.2" cy="750.0" r="3" fill="#000"/>
<rect x="793.0" y="746.0" width="8" height="8" rx="2.8" fill="#f88a10"/><circle cx="797.0" cy="750.0" r="3" fill="#000"/>
<rect x="680.4" y="825.3" width="8" height="19" fill="none" stroke="#f88a10" stroke-width="1.7"/><circle cx="684.4" cy="834.8" r="3" fill="#000"/>
<rect x="748.2" y="825.3" width="8" height="19" fill="none" stroke="#f88a10" stroke-width="1.7"/><circle cx="752.2" cy="834.8" r="3" fill="#000"/>
<rect x="793.0" y="825.3" width="8" height="19" fill="none" stroke="#f88a10" stroke-width="1.7"/><circle cx="797.0" cy="834.8" r="3" fill="#000"/>
<circle cx="518.1" cy="555.9" r="2.6" fill="#6a1ee8"/>
<circle cx="530.7" cy="577.2" r="2.6" fill="#6a1ee8"/>
<circle cx="554.3" cy="622.0" r="2.6" fill="#6a1ee8"/>
<circle cx="594.5" cy="629.1" r="2.6" fill="#6a1ee8"/>
<circle cx="439.4" cy="648.5" r="2.8" fill="#6a1ee8"/>
<circle cx="446.7" cy="677.8" r="2.0" fill="#6a1ee8"/>
<circle cx="647.6" cy="768.5" r="2.0" fill="#6a1ee8"/>
<circle cx="519.1" cy="612.6" r="2.5" fill="#1030ff"/>
</g>
<circle cx="485.9" cy="674.1" r="83.5" fill="none" stroke="#f00" stroke-width="3.5"/>
</g>
<g clip-path="url(#cb0)"><rect x="15.5" y="235.2" width="327.0" height="340.0" fill="#fff"/>
<pattern id="b0a" patternUnits="userSpaceOnUse" width="11.160" height="11.160" patternTransform="rotate(0.00)"><rect width="11.160" height="11.160" fill="#fffad6"/><rect width="11.160" height="1.000" fill="#7a7468"/><rect width="1.000" height="11.160" fill="#7a7468"/></pattern>
<pattern id="b0b" patternUnits="userSpaceOnUse" width="11.160" height="11.160" patternTransform="rotate(34.70)"><rect width="11.160" height="11.160" fill="#fffad6"/><rect width="11.160" height="1.000" fill="#7a7468"/><rect width="1.000" height="11.160" fill="#7a7468"/></pattern>
<path d="M37.7,-467.5 L503.8,-143.8 L480.4,-108.9 L494.5,-98.5 L508.2,-87.6 L521.6,-76.4 L534.7,-64.8 L547.3,-52.7 L559.6,-40.3 L571.6,-27.5 L583.1,-14.4 L594.2,-0.9 L604.9,13.0 L615.1,27.1 L625.0,41.6 L634.3,56.3 L643.3,71.4 L651.7,86.7 L659.7,102.2 L667.2,118.0 L674.2,134.0 L680.7,150.3 L686.8,166.7 L692.3,183.3 L697.3,200.0 L701.7,216.9 L705.7,233.9 L709.2,251.1 L712.1,268.3 L714.4,285.6 L716.3,303.0 L717.6,320.5 L718.4,337.9 L767.9,337.9 L767.9,908.9 L552.2,908.9 L552.2,1011.2 L492.6,1011.2 L492.6,719.2 L53.7,719.2 L53.7,750.8 L-78.4,750.8 L-78.4,708.1 L-329.5,708.1 L-329.5,691.3 L-343.4,690.2 L-357.0,686.7 L-369.7,681.0 L-381.4,673.3 L-391.6,663.7 L-400.1,652.6 L-406.6,640.2 L-410.9,626.9 L-413.0,613.1 L-412.7,599.1 L-410.2,585.4 L-405.3,572.3 L-409.5,550.0 L-270.0,341.6 L-297.9,324.9 L-223.5,217.0 L36.9,-136.4 L-197.8,-305.1 L-167.1,-349.3 L-84.0,-292.6Z" fill="url(#b0a)"/>
<path d="M37.7,-467.5 L503.8,-143.8 L480.4,-108.9 L494.5,-98.5 L508.2,-87.6 L521.6,-76.4 L534.7,-64.8 L547.3,-52.7 L559.6,-40.3 L571.6,-27.5 L583.1,-14.4 L594.2,-0.9 L604.9,13.0 L615.1,27.1 L625.0,41.6 L634.3,56.3 L643.3,71.4 L651.7,86.7 L659.7,102.2 L667.2,118.0 L674.2,134.0 L680.7,150.3 L686.8,166.7 L692.3,183.3 L697.3,200.0 L701.7,216.9 L705.7,233.9 L709.2,251.1 L712.1,268.3 L470.3,354.7 L321.5,395.6 L172.7,406.7 L61.1,447.7 L-13.3,475.6 L-41.2,531.4 L-143.5,624.4 L-273.7,643.0 L-357.4,587.2 L-409.5,550.0 L-270.0,341.6 L-297.9,324.9 L-223.5,217.0 L36.9,-136.4 L-197.8,-305.1 L-167.1,-349.3 L-84.0,-292.6Z" fill="url(#b0b)"/>
<path d="M164.9,466.2 L156.0,465.6 L147.2,464.3 L138.6,462.3 L130.1,459.7 L121.9,456.5 L113.9,452.7 L106.2,448.3 L98.8,443.4 L91.9,437.9 L85.3,431.9 L79.3,425.4 L73.7,418.5 L68.6,411.2 L64.2,403.6 L60.3,395.6 L57.0,387.4 L54.3,379.0 L52.2,370.3 L50.8,361.6 L50.1,352.8 L50.0,343.9 L50.6,335.1 L51.8,326.3 L53.7,317.6 L56.2,309.1 L59.4,300.8 L63.1,292.8 L67.5,285.1 L72.4,277.7 L77.8,270.7 L112.0,299.4 L108.6,303.8 L105.5,308.4 L102.8,313.2 L100.5,318.2 L98.5,323.4 L96.9,328.7 L95.8,334.1 L95.0,339.6 L94.6,345.1 L94.7,350.7 L95.2,356.2 L96.0,361.7 L97.3,367.1 L99.0,372.3 L101.0,377.5 L103.5,382.5 L106.3,387.2 L109.4,391.8 L112.9,396.1 L116.7,400.1 L120.8,403.9 L125.1,407.3 L129.7,410.4 L134.5,413.2 L139.5,415.5 L144.7,417.5 L150.0,419.2 L155.4,420.4 L160.9,421.2 L166.4,421.6Z" fill="#fffad6"/>
<path d="M166.4,421.6 L160.9,421.2 L155.4,420.4 L150.0,419.2 L144.7,417.5 L139.5,415.5 L134.5,413.2 L129.7,410.4 L125.1,407.3 L120.8,403.9 L116.7,400.1 L112.9,396.1 L109.4,391.8 L106.3,387.2 L103.5,382.5 L101.0,377.5 L99.0,372.3 L97.3,367.1 L96.0,361.7 L95.2,356.2 L94.7,350.7 L94.6,345.1 L95.0,339.6 L95.8,334.1 L96.9,328.7 L98.5,323.4 L100.5,318.2 L102.8,313.2 L105.5,308.4 L108.6,303.8 L112.0,299.4 M166.0,432.7 L159.7,432.3 L153.4,431.3 L147.2,429.9 L141.1,428.1 L135.1,425.8 L129.4,423.0 L123.8,419.9 L118.6,416.3 L113.6,412.4 L108.9,408.1 L104.5,403.4 L100.5,398.5 L96.9,393.2 L93.7,387.7 L90.8,382.0 L88.5,376.1 L86.5,370.0 L85.1,363.8 L84.1,357.6 L83.5,351.2 L83.5,344.8 L83.9,338.5 L84.8,332.2 L86.1,325.9 L87.9,319.8 L90.2,313.9 L92.9,308.1 L96.0,302.6 L99.6,297.3 L103.5,292.2 M165.6,443.9 L158.5,443.4 L151.3,442.3 L144.3,440.7 L137.4,438.6 L130.7,436.0 L124.2,432.9 L117.9,429.4 L112.0,425.3 L106.3,420.9 L101.0,416.0 L96.1,410.8 L91.6,405.2 L87.5,399.2 L83.8,393.0 L80.6,386.6 L78.0,379.9 L75.8,373.0 L74.1,366.0 L73.0,358.9 L72.4,351.7 L72.3,344.5 L72.8,337.3 L73.8,330.2 L75.3,323.2 L77.4,316.3 L79.9,309.5 L83.0,303.0 L86.5,296.7 L90.5,290.7 L94.9,285.1 M165.2,455.0 L157.2,454.5 L149.3,453.3 L141.5,451.5 L133.8,449.2 L126.3,446.3 L119.0,442.8 L112.1,438.8 L105.4,434.4 L99.1,429.4 L93.2,424.0 L87.7,418.1 L82.6,411.8 L78.1,405.2 L74.0,398.3 L70.5,391.1 L67.5,383.7 L65.0,376.0 L63.2,368.2 L61.9,360.2 L61.2,352.2 L61.2,344.2 L61.7,336.2 L62.8,328.2 L64.5,320.4 L66.8,312.7 L69.7,305.2 L73.1,297.9 L77.0,290.9 L81.4,284.2 L86.4,277.9 M164.9,466.2 L156.0,465.6 L147.2,464.3 L138.6,462.3 L130.1,459.7 L121.9,456.5 L113.9,452.7 L106.2,448.3 L98.8,443.4 L91.9,437.9 L85.3,431.9 L79.3,425.4 L73.7,418.5 L68.6,411.2 L64.2,403.6 L60.3,395.6 L57.0,387.4 L54.3,379.0 L52.2,370.3 L50.8,361.6 L50.1,352.8 L50.0,343.9 L50.6,335.1 L51.8,326.3 L53.7,317.6 L56.2,309.1 L59.4,300.8 L63.1,292.8 L67.5,285.1 L72.4,277.7 L77.8,270.7 M166.4,421.6 L164.9,466.2 M155.4,420.4 L147.3,464.3 M144.8,417.6 L130.3,459.8 M134.7,413.2 L114.0,452.8 M125.3,407.4 L99.0,443.5 M116.9,400.3 L85.6,432.1 M109.6,392.0 L73.9,418.9 M103.6,382.7 L64.4,404.0 M99.1,372.7 L57.1,387.9 M96.1,362.1 L52.4,371.0 M94.7,351.1 L50.1,353.5 M95.0,340.1 L50.5,335.8 M96.8,329.2 L53.5,318.4 M100.3,318.8 L59.0,301.7 M105.2,308.9 L67.0,285.9 M111.6,299.9 L77.2,271.5" fill="none" stroke="#7a7468" stroke-width="1"/>
<clipPath id="b0po"><path d="M37.7,-467.5 L503.8,-143.8 L480.4,-108.9 L494.5,-98.5 L508.2,-87.6 L521.6,-76.4 L534.7,-64.8 L547.3,-52.7 L559.6,-40.3 L571.6,-27.5 L583.1,-14.4 L594.2,-0.9 L604.9,13.0 L615.1,27.1 L625.0,41.6 L634.3,56.3 L643.3,71.4 L651.7,86.7 L659.7,102.2 L667.2,118.0 L674.2,134.0 L680.7,150.3 L686.8,166.7 L692.3,183.3 L697.3,200.0 L701.7,216.9 L705.7,233.9 L709.2,251.1 L712.1,268.3 L714.4,285.6 L716.3,303.0 L717.6,320.5 L718.4,337.9 L767.9,337.9 L767.9,908.9 L552.2,908.9 L552.2,1011.2 L492.6,1011.2 L492.6,719.2 L53.7,719.2 L53.7,750.8 L-78.4,750.8 L-78.4,708.1 L-329.5,708.1 L-329.5,691.3 L-343.4,690.2 L-357.0,686.7 L-369.7,681.0 L-381.4,673.3 L-391.6,663.7 L-400.1,652.6 L-406.6,640.2 L-410.9,626.9 L-413.0,613.1 L-412.7,599.1 L-410.2,585.4 L-405.3,572.3 L-409.5,550.0 L-270.0,341.6 L-297.9,324.9 L-223.5,217.0 L36.9,-136.4 L-197.8,-305.1 L-167.1,-349.3 L-84.0,-292.6Z"/></clipPath>
<g clip-path="url(#b0po)">
<path d="M-332.5,693.1 L-339.8,692.6 L-347.1,691.4 L-354.2,689.5 L-361.2,687.1 L-367.9,684.1 L-374.3,680.5 L-380.4,676.4 L-386.1,671.7 L-391.4,666.6 L-396.3,661.1 L-400.6,655.1 L-404.4,648.8 L-407.7,642.2 L-410.4,635.4 L-412.5,628.3 L-414.0,621.1 L-414.8,613.8 L-415.0,606.4 L-414.6,599.1 L-413.6,591.8 L-411.9,584.6 L-409.6,577.6 L-406.7,570.8 L-403.3,564.3 L-399.3,558.1 L-394.8,552.3 L-389.8,546.9 L-384.3,542.0 L-378.5,537.5 L-372.3,533.5 L-349.0,573.8 L-351.8,575.6 L-354.5,577.6 L-357.0,579.9 L-359.3,582.4 L-361.3,585.0 L-363.2,587.9 L-364.7,590.8 L-366.1,593.9 L-367.1,597.1 L-367.9,600.4 L-368.3,603.7 L-368.5,607.1 L-368.4,610.4 L-368.0,613.8 L-367.4,617.1 L-366.4,620.3 L-365.2,623.4 L-363.7,626.4 L-362.0,629.3 L-360.0,632.0 L-357.8,634.6 L-355.3,636.9 L-352.7,639.0 L-349.9,640.9 L-347.0,642.5 L-343.9,643.9 L-340.8,645.0 L-337.5,645.9 L-334.2,646.4 L-330.8,646.7Z" fill="#fffad6"/>
<path d="M-330.8,646.7 L-334.2,646.4 L-337.5,645.9 L-340.8,645.0 L-343.9,643.9 L-347.0,642.5 L-349.9,640.9 L-352.7,639.0 L-355.3,636.9 L-357.8,634.6 L-360.0,632.0 L-362.0,629.3 L-363.7,626.4 L-365.2,623.4 L-366.4,620.3 L-367.4,617.1 L-368.0,613.8 L-368.4,610.4 L-368.5,607.1 L-368.3,603.7 L-367.9,600.4 L-367.1,597.1 L-366.1,593.9 L-364.7,590.8 L-363.2,587.9 L-361.3,585.0 L-359.3,582.4 L-357.0,579.9 L-354.5,577.6 L-351.8,575.6 L-349.0,573.8 M-331.2,657.8 L-335.5,657.5 L-339.8,656.8 L-344.0,655.7 L-348.1,654.3 L-352.0,652.5 L-355.8,650.4 L-359.4,648.0 L-362.7,645.3 L-365.8,642.3 L-368.7,639.0 L-371.2,635.5 L-373.5,631.8 L-375.4,627.9 L-377.0,623.9 L-378.2,619.8 L-379.1,615.5 L-379.6,611.2 L-379.7,606.9 L-379.4,602.6 L-378.8,598.3 L-377.8,594.1 L-376.5,590.0 L-374.8,586.0 L-372.8,582.2 L-370.4,578.6 L-367.8,575.2 L-364.9,572.0 L-361.7,569.1 L-358.2,566.5 L-354.6,564.1 M-331.6,669.0 L-336.9,668.6 L-342.1,667.7 L-347.2,666.4 L-352.2,664.6 L-357.0,662.5 L-361.6,659.9 L-366.0,656.9 L-370.1,653.6 L-373.9,650.0 L-377.4,646.0 L-380.5,641.7 L-383.3,637.2 L-385.6,632.5 L-387.5,627.5 L-389.0,622.5 L-390.1,617.3 L-390.7,612.1 L-390.8,606.8 L-390.5,601.5 L-389.8,596.3 L-388.6,591.1 L-387.0,586.1 L-384.9,581.2 L-382.4,576.6 L-379.5,572.1 L-376.3,568.0 L-372.7,564.1 L-368.8,560.5 L-364.6,557.3 L-360.2,554.5 M-332.0,680.1 L-338.2,679.6 L-344.4,678.6 L-350.4,677.1 L-356.3,675.0 L-362.0,672.5 L-367.5,669.4 L-372.7,665.9 L-377.5,662.0 L-382.0,657.7 L-386.1,652.9 L-389.8,647.9 L-393.0,642.6 L-395.8,637.0 L-398.1,631.2 L-399.9,625.2 L-401.1,619.1 L-401.8,612.9 L-402.0,606.6 L-401.6,600.4 L-400.8,594.2 L-399.3,588.1 L-397.4,582.2 L-395.0,576.4 L-392.0,570.9 L-388.7,565.7 L-384.8,560.7 L-380.6,556.2 L-376.0,551.9 L-371.0,548.2 L-365.7,544.8 M-332.4,691.3 L-339.6,690.7 L-346.7,689.5 L-353.7,687.8 L-360.5,685.4 L-367.0,682.4 L-373.3,678.9 L-379.3,674.9 L-384.9,670.3 L-390.1,665.3 L-394.8,659.9 L-399.1,654.1 L-402.8,647.9 L-406.0,641.5 L-408.6,634.8 L-410.7,627.9 L-412.1,620.8 L-413.0,613.7 L-413.2,606.5 L-412.8,599.3 L-411.7,592.1 L-410.1,585.1 L-407.9,578.3 L-405.0,571.6 L-401.7,565.3 L-397.8,559.2 L-393.3,553.5 L-388.4,548.2 L-383.1,543.4 L-377.4,539.0 L-371.3,535.1 M-330.8,646.7 L-332.5,693.1 M-337.3,645.9 L-346.5,691.5 M-343.5,644.1 L-360.1,687.5 M-349.3,641.3 L-372.9,681.3 M-354.6,637.5 L-384.5,673.2 M-359.2,633.0 L-394.5,663.2 M-363.0,627.7 L-402.8,651.7 M-365.8,621.9 L-409.1,639.0 M-367.7,615.7 L-413.2,625.4 M-368.5,609.3 L-415.0,611.4 M-368.2,602.9 L-414.4,597.2 M-366.9,596.5 L-411.5,583.3 M-364.6,590.5 L-406.4,570.1 M-361.3,584.9 L-399.1,557.9 M-357.1,580.0 L-390.0,547.1 M-352.2,575.8 L-379.2,538.0" fill="none" stroke="#7a7468" stroke-width="1"/>
</g>
<path d="M383.5,-75.2 L433.1,-40.0 L385.5,26.0 L334.0,-9.1Z" fill="#fff"/>
<path d="M267.6,-23.0 L288.8,-53.6 L301.0,-45.1 L279.9,-14.5Z" fill="#fff"/>
<path d="M221.9,59.9 L200.5,45.1 L214.3,25.2 L235.7,40.0Z" fill="#fff"/>
<path d="M230.4,170.3 L286.2,142.6 L403.4,361.0 L347.6,388.7Z" fill="#fff"/>
<path d="M552.9,340.9 L634.0,340.9 L634.0,406.4 L552.9,406.4Z" fill="#fff"/>
<path d="M248.1,457.9 L269.8,457.9 L269.8,471.7 L248.1,471.7Z" fill="#fff"/>
<path d="M434.1,459.8 L475.7,459.8 L475.7,473.7 L434.1,473.7Z" fill="#fff"/>
<path d="M519.2,459.8 L566.7,459.8 L566.7,473.7 L519.2,473.7Z" fill="#fff"/>
<path d="M397.8,458.8 L425.7,458.8 L425.7,481.1 L397.8,481.1Z" fill="#fff"/>
<path d="M133.9,316.7 L171.1,340.9 L126.3,408.2 L122.6,405.4 L119.0,402.3 L115.6,399.0 L112.5,395.6 L109.5,391.9 L106.8,388.1 L104.4,384.0 L102.2,379.9 L100.2,375.6 L98.6,371.2Z" fill="#fff"/>
<path d="M106.3,207.1 L119.0,188.7 L131.3,197.2 L118.6,215.6Z" fill="#fff"/>
<path d="M-17.0,385.4 L-35.3,372.7 L-22.6,354.4 L-4.3,367.1Z" fill="#fff"/>
<path d="M253.8,214.0 L309.6,186.3" stroke="#6b6357" stroke-width="1"/>
<path d="M277.3,257.7 L333.1,230.0" stroke="#6b6357" stroke-width="1"/>
<path d="M300.7,301.4 L356.5,273.6" stroke="#6b6357" stroke-width="1"/>
<path d="M324.1,345.0 L379.9,317.3" stroke="#6b6357" stroke-width="1"/>
<g fill="none" stroke="#6a1ee8" stroke-width="1.3">
<path d="M-167.1,-349.3 L-84.0,-292.6 L37.7,-467.5 L396.9,-220.1"/>
<path d="M-126.7,-253.6 L36.9,-136.4 L-11.4,-69.4"/>
<path d="M12.8,-226.8 L95.9,-169.3"/>
<path d="M125.7,-147.5 L264.2,-54.5"/>
<path d="M349.4,-151.6 L398.9,-213.0"/>
<path d="M418.6,-166.9 L313.3,17.8 L369.1,55.0 L482.8,-104.2"/>
<path d="M382.9,-191.2 L454.3,-145.7"/>
<path d="M221.9,59.9 L200.5,45.1 L214.3,25.2 L235.7,40.0 L221.9,59.9"/>
<path d="M290.5,138.2 L230.4,170.3 L347.6,388.7 L406.2,357.8 L365.2,293.3 L413.4,268.5"/>
<path d="M321.5,121.2 L332.9,114.7 L450.1,335.9 L438.7,341.6"/>
<path d="M519.2,340.9 L733.1,340.9 L733.1,406.7 L519.2,406.7 L519.2,340.9"/>
<path d="M733.1,406.7 L733.1,425.3"/>
<path d="M397.8,458.8 L425.7,458.8 L425.7,481.1 L397.8,481.1 L397.8,458.8"/>
<path d="M733.1,453.2 L733.1,470.0 L679.6,470.0"/>
<path d="M733.1,470.0 L762.3,470.0"/>
<path d="M551.6,453.2 L551.6,814.1"/>
<path d="M551.6,847.6 L551.6,908.9"/>
<path d="M767.9,555.5 L767.9,908.9 L552.2,908.9 L552.2,1011.2 L492.6,1011.2 L492.6,719.2 L427.5,719.2"/>
<path d="M-75.8,555.0 L-75.8,722.9"/>
<path d="M-11.4,476.5 L-11.4,707.1"/>
<path d="M53.1,476.5 L53.1,707.1"/>
<path d="M-11.4,476.5 L53.1,476.5"/>
<path d="M-11.4,513.5 L53.1,513.5"/>
<path d="M-11.4,556.1 L53.1,556.1"/>
<path d="M-76.5,707.1 L-57.9,707.1"/>
<path d="M-30.0,707.1 L14.6,707.1"/>
<path d="M42.5,707.1 L53.7,707.1"/>
<path d="M-408.9,549.0 L-328.4,604.7"/>
<path d="M-329.8,651.5 L-329.8,707.1"/>
<path d="M-223.6,217.8 L-6.4,365.5"/>
<path d="M-297.9,324.9 L-270.0,341.6"/>
<path d="M-17.0,385.4 L-35.3,372.7 L-22.6,354.4 L-4.3,367.1 L-17.0,385.4"/>
<path d="M159.7,417.9 L173.1,417.9 L173.1,339.6 L113.2,298.1 L113.1,298.1 L109.3,302.8 L105.9,307.8 L102.9,313.1 L100.3,318.6 L98.2,324.3 L96.6,330.1 L95.4,336.1 L94.8,342.1 L94.6,348.2 L94.9,354.2 L95.8,360.2 L97.1,366.2 L98.8,372.0 L101.1,377.6 L103.8,383.0 L106.9,388.2 L110.5,393.1 L114.4,397.8 L118.7,402.0 L123.3,405.9 L128.3,409.5 L133.5,412.6 L138.9,415.3 L144.5,417.5"/>
<path d="M173.1,339.6 L228.5,310.0"/>
<path d="M159.7,417.9 L173.1,417.9"/>
</g>
<rect x="184.1" y="-363.1" width="16" height="7" rx="1" transform="rotate(34.7 192.1 -359.6)" fill="none" stroke="#f08a1c" stroke-width="1.5"/><circle cx="192.1" cy="-359.6" r="2.8" fill="#000"/>
<rect x="137.4" y="-293.0" width="16" height="7" rx="1" transform="rotate(34.7 145.4 -289.5)" fill="none" stroke="#f08a1c" stroke-width="1.5"/><circle cx="145.4" cy="-289.5" r="2.8" fill="#000"/>
<rect x="319.1" y="-275.7" width="9" height="13" fill="none" stroke="#f08a1c" stroke-width="1.6"/><circle cx="323.6" cy="-269.2" r="2.3" fill="#000"/>
<rect x="391.6" y="-227.3" width="9" height="13" fill="none" stroke="#f08a1c" stroke-width="1.6"/><circle cx="396.1" cy="-220.8" r="2.3" fill="#000"/>
<rect x="272.8" y="-207.6" width="9" height="13" fill="none" stroke="#f08a1c" stroke-width="1.6"/><circle cx="277.3" cy="-201.1" r="2.3" fill="#000"/>
<rect x="66.1" y="-189.5" width="16" height="7" rx="1" transform="rotate(34.7 74.1 -186.0)" fill="none" stroke="#f08a1c" stroke-width="1.5"/><circle cx="74.1" cy="-186.0" r="2.8" fill="#000"/>
<rect x="344.2" y="-158.1" width="9" height="13" fill="none" stroke="#f08a1c" stroke-width="1.6"/><circle cx="348.7" cy="-151.6" r="2.3" fill="#000"/>
<rect x="202.3" y="-103.8" width="9" height="13" fill="none" stroke="#f08a1c" stroke-width="1.6"/><circle cx="206.8" cy="-97.3" r="2.3" fill="#000"/>
<rect x="2.7" y="-81.7" width="16" height="7" rx="1" transform="rotate(34.7 10.7 -78.2)" fill="none" stroke="#f08a1c" stroke-width="1.5"/><circle cx="10.7" cy="-78.2" r="2.8" fill="#000"/>
<rect x="132.9" y="0.9" width="9" height="13" fill="none" stroke="#f08a1c" stroke-width="1.6"/><circle cx="137.4" cy="7.4" r="2.3" fill="#000"/>
<rect x="210.4" y="54.7" width="9" height="13" fill="none" stroke="#f08a1c" stroke-width="1.6"/><circle cx="214.9" cy="61.2" r="2.3" fill="#000"/>
<rect x="432.7" y="51.3" width="9" height="13" fill="none" stroke="#f08a1c" stroke-width="1.6"/><circle cx="437.2" cy="57.8" r="2.3" fill="#000"/>
<rect x="569.2" y="-21.8" width="9" height="13" fill="none" stroke="#f08a1c" stroke-width="1.6"/><circle cx="573.7" cy="-15.3" r="2.3" fill="#000"/>
<rect x="490.6" y="160.1" width="9" height="13" fill="none" stroke="#f08a1c" stroke-width="1.6"/><circle cx="495.1" cy="166.6" r="2.3" fill="#000"/>
<rect x="139.2" y="156.0" width="9" height="13" fill="none" stroke="#f08a1c" stroke-width="1.6"/><circle cx="143.7" cy="162.5" r="2.3" fill="#000"/>
<rect x="638.6" y="85.7" width="9" height="13" fill="none" stroke="#f08a1c" stroke-width="1.6"/><circle cx="643.1" cy="92.2" r="2.3" fill="#000"/>
<rect x="492.2" y="163.1" width="9" height="13" fill="none" stroke="#f08a1c" stroke-width="1.6"/><circle cx="496.7" cy="169.6" r="2.3" fill="#000"/>
<rect x="689.0" y="200.7" width="9" height="13" fill="none" stroke="#f08a1c" stroke-width="1.6"/><circle cx="693.5" cy="207.2" r="2.3" fill="#000"/>
<rect x="551.2" y="274.3" width="9" height="13" fill="none" stroke="#f08a1c" stroke-width="1.6"/><circle cx="555.7" cy="280.8" r="2.3" fill="#000"/>
<rect x="297.7" y="458.1" width="9" height="13" fill="none" stroke="#f08a1c" stroke-width="1.6"/><circle cx="302.2" cy="464.6" r="2.3" fill="#000"/>
<rect x="421.7" y="458.1" width="9" height="13" fill="none" stroke="#f08a1c" stroke-width="1.6"/><circle cx="426.2" cy="464.6" r="2.3" fill="#6a1ee8"/>
<rect x="675.1" y="465.2" width="9" height="13" fill="none" stroke="#f08a1c" stroke-width="1.6"/><circle cx="679.6" cy="471.7" r="2.3" fill="#000"/>
<rect x="758.2" y="465.2" width="9" height="13" fill="none" stroke="#f08a1c" stroke-width="1.6"/><circle cx="762.7" cy="471.7" r="2.3" fill="#000"/>
<rect x="-68.1" y="23.1" width="16" height="7" rx="1" transform="rotate(34.7 -60.1 26.6)" fill="none" stroke="#f08a1c" stroke-width="1.5"/><circle cx="-60.1" cy="26.6" r="2.8" fill="#000"/>
<rect x="-137.5" y="126.9" width="16" height="7" rx="1" transform="rotate(34.7 -129.5 130.4)" fill="none" stroke="#f08a1c" stroke-width="1.5"/><circle cx="-129.5" cy="130.4" r="2.8" fill="#000"/>
<rect x="60.7" y="106.0" width="9" height="13" fill="none" stroke="#f08a1c" stroke-width="1.6"/><circle cx="65.2" cy="112.5" r="2.3" fill="#000"/>
<rect x="139.0" y="157.5" width="9" height="13" fill="none" stroke="#f08a1c" stroke-width="1.6"/><circle cx="143.5" cy="164.0" r="2.3" fill="#000"/>
<rect x="-9.6" y="209.0" width="9" height="13" fill="none" stroke="#f08a1c" stroke-width="1.6"/><circle cx="-5.1" cy="215.5" r="2.3" fill="#000"/>
<rect x="-149.6" y="417.2" width="9" height="13" fill="none" stroke="#f08a1c" stroke-width="1.6"/><circle cx="-145.1" cy="423.7" r="2.3" fill="#000"/>
<rect x="-272.8" y="336.6" width="9" height="13" fill="none" stroke="#f08a1c" stroke-width="1.6"/><circle cx="-268.3" cy="343.1" r="2.3" fill="#6a1ee8"/>
<rect x="172.3" y="553.5" width="9" height="13" fill="none" stroke="#f08a1c" stroke-width="1.6"/><circle cx="176.8" cy="560.0" r="2.3" fill="#000"/>
<rect x="298.2" y="553.5" width="9" height="13" fill="none" stroke="#f08a1c" stroke-width="1.6"/><circle cx="302.7" cy="560.0" r="2.3" fill="#000"/>
<rect x="423.6" y="553.5" width="9" height="13" fill="none" stroke="#f08a1c" stroke-width="1.6"/><circle cx="428.1" cy="560.0" r="2.3" fill="#000"/>
<rect x="172.3" y="702.3" width="9" height="13" fill="none" stroke="#f08a1c" stroke-width="1.6"/><circle cx="176.8" cy="708.8" r="2.3" fill="#000"/>
<rect x="298.2" y="702.3" width="9" height="13" fill="none" stroke="#f08a1c" stroke-width="1.6"/><circle cx="302.7" cy="708.8" r="2.3" fill="#000"/>
<rect x="423.6" y="702.3" width="9" height="13" fill="none" stroke="#f08a1c" stroke-width="1.6"/><circle cx="428.1" cy="708.8" r="2.3" fill="#000"/>
<rect x="-341.6" y="440.1" width="9" height="13" fill="none" stroke="#f08a1c" stroke-width="1.6"/><circle cx="-337.1" cy="446.6" r="2.3" fill="#000"/>
<rect x="-413.4" y="542.5" width="9" height="13" fill="none" stroke="#f08a1c" stroke-width="1.6"/><circle cx="-408.9" cy="549.0" r="2.3" fill="#000"/>
<rect x="-203.2" y="533.2" width="9" height="13" fill="none" stroke="#f08a1c" stroke-width="1.6"/><circle cx="-198.7" cy="539.7" r="2.3" fill="#000"/>
<rect x="-332.9" y="598.2" width="9" height="13" fill="none" stroke="#f08a1c" stroke-width="1.6"/><circle cx="-328.4" cy="604.7" r="2.3" fill="#6a1ee8"/>
<rect x="-329.9" y="696.2" width="9" height="13" fill="none" stroke="#f08a1c" stroke-width="1.6"/><circle cx="-325.4" cy="702.7" r="2.3" fill="#000"/>
<rect x="-205.1" y="696.2" width="9" height="13" fill="none" stroke="#f08a1c" stroke-width="1.6"/><circle cx="-200.6" cy="702.7" r="2.3" fill="#000"/>
<rect x="548.4" y="552.8" width="9" height="13" fill="none" stroke="#f08a1c" stroke-width="1.6"/><circle cx="552.9" cy="559.3" r="2.3" fill="#6a1ee8"/>
<rect x="674.5" y="552.8" width="9" height="13" fill="none" stroke="#f08a1c" stroke-width="1.6"/><circle cx="679.0" cy="559.3" r="2.3" fill="#000"/>
<rect x="757.8" y="552.8" width="9" height="13" fill="none" stroke="#f08a1c" stroke-width="1.6"/><circle cx="762.3" cy="559.3" r="2.3" fill="#000"/>
<rect x="548.4" y="710.5" width="9" height="13" fill="none" stroke="#f08a1c" stroke-width="1.6"/><circle cx="552.9" cy="717.0" r="2.3" fill="#000"/>
<rect x="674.5" y="710.5" width="9" height="13" fill="none" stroke="#f08a1c" stroke-width="1.6"/><circle cx="679.0" cy="717.0" r="2.3" fill="#000"/>
<rect x="757.8" y="710.5" width="9" height="13" fill="none" stroke="#f08a1c" stroke-width="1.6"/><circle cx="762.3" cy="717.0" r="2.3" fill="#000"/>
<circle cx="243.6" cy="198.2" r="2.6" fill="#6a1ee8"/>
<circle cx="267.0" cy="237.9" r="2.6" fill="#6a1ee8"/>
<circle cx="310.9" cy="321.2" r="2.6" fill="#6a1ee8"/>
<circle cx="385.7" cy="334.4" r="2.6" fill="#6a1ee8"/>
<circle cx="97.2" cy="370.5" r="2.8" fill="#6a1ee8"/>
<circle cx="110.8" cy="425.0" r="2.0" fill="#6a1ee8"/>
<circle cx="484.5" cy="593.7" r="2.0" fill="#6a1ee8"/>
<circle cx="245.5" cy="303.7" r="2.5" fill="#1030ff"/>
</g>
<ellipse cx="179.0" cy="405.2" rx="163.5" ry="170.0" fill="none" stroke="#f00" stroke-width="3.5"/>
<g clip-path="url(#cvr)">
<pattern id="m1a" patternUnits="userSpaceOnUse" width="6.000" height="6.000" patternTransform="rotate(0.00)"><rect width="6.000" height="6.000" fill="#fff6d0"/><rect width="6.000" height="1.000" fill="#6b6357"/><rect width="1.000" height="6.000" fill="#6b6357"/></pattern>
<pattern id="m1b" patternUnits="userSpaceOnUse" width="6.200" height="6.200" patternTransform="rotate(34.70)"><rect width="6.200" height="6.200" fill="#fff6d0"/><rect width="6.200" height="1.000" fill="#6b6357"/><rect width="1.000" height="6.200" fill="#6b6357"/></pattern>
<path d="M1330.9,203.0 L1581.5,377.0 L1568.9,395.8 L1576.5,401.4 L1583.9,407.2 L1591.1,413.2 L1598.1,419.5 L1604.9,426.0 L1611.5,432.6 L1617.9,439.5 L1624.1,446.6 L1630.1,453.9 L1635.8,461.3 L1641.4,468.9 L1646.6,476.7 L1651.7,484.6 L1656.5,492.7 L1661.0,500.9 L1665.3,509.3 L1669.3,517.8 L1673.1,526.4 L1676.6,535.1 L1679.9,543.9 L1682.8,552.9 L1685.5,561.9 L1687.9,570.9 L1690.0,580.1 L1691.9,589.3 L1693.5,598.6 L1694.7,607.9 L1695.7,617.2 L1696.4,626.6 L1696.9,636.0 L1723.5,636.0 L1723.5,943.0 L1607.5,943.0 L1607.5,998.0 L1575.5,998.0 L1575.5,841.0 L1339.5,841.0 L1339.5,858.0 L1268.5,858.0 L1268.5,835.0 L1133.5,835.0 L1133.5,826.0 L1126.0,825.4 L1118.7,823.5 L1111.9,820.5 L1105.6,816.3 L1100.1,811.2 L1095.5,805.2 L1092.1,798.5 L1089.7,791.4 L1088.6,783.9 L1088.7,776.4 L1090.1,769.0 L1092.7,762.0 L1090.5,750.0 L1165.5,638.0 L1150.5,629.0 L1190.5,571.0 L1330.5,381.0 L1204.3,290.3 L1220.8,266.5 L1265.5,297.0Z" fill="url(#m1a)"/>
<path d="M1330.9,203.0 L1581.5,377.0 L1568.9,395.8 L1576.5,401.4 L1583.9,407.2 L1591.1,413.2 L1598.1,419.5 L1604.9,426.0 L1611.5,432.6 L1617.9,439.5 L1624.1,446.6 L1630.1,453.9 L1635.8,461.3 L1641.4,468.9 L1646.6,476.7 L1651.7,484.6 L1656.5,492.7 L1661.0,500.9 L1665.3,509.3 L1669.3,517.8 L1673.1,526.4 L1676.6,535.1 L1679.9,543.9 L1682.8,552.9 L1685.5,561.9 L1687.9,570.9 L1690.0,580.1 L1691.9,589.3 L1693.5,598.6 L1563.5,645.0 L1483.5,667.0 L1403.5,673.0 L1343.5,695.0 L1303.5,710.0 L1288.5,740.0 L1233.5,790.0 L1163.5,800.0 L1118.5,770.0 L1090.5,750.0 L1165.5,638.0 L1150.5,629.0 L1190.5,571.0 L1330.5,381.0 L1204.3,290.3 L1220.8,266.5 L1265.5,297.0Z" fill="url(#m1b)"/>
<path d="M1399.3,705.0 L1394.5,704.6 L1389.8,703.9 L1385.2,702.9 L1380.6,701.5 L1376.2,699.8 L1371.8,697.7 L1367.7,695.4 L1363.8,692.7 L1360.0,689.7 L1356.5,686.5 L1353.2,683.0 L1350.3,679.3 L1347.5,675.4 L1345.1,671.3 L1343.0,667.0 L1341.3,662.6 L1339.8,658.1 L1338.7,653.4 L1338.0,648.7 L1337.6,644.0 L1337.5,639.2 L1337.8,634.5 L1338.5,629.7 L1339.5,625.1 L1340.9,620.5 L1342.6,616.1 L1344.6,611.7 L1346.9,607.6 L1349.5,603.6 L1352.5,599.9 L1370.9,615.3 L1369.0,617.6 L1367.4,620.1 L1365.9,622.7 L1364.7,625.4 L1363.6,628.2 L1362.8,631.1 L1362.1,634.0 L1361.7,636.9 L1361.5,639.9 L1361.5,642.9 L1361.8,645.8 L1362.3,648.8 L1362.9,651.7 L1363.8,654.5 L1365.0,657.3 L1366.3,659.9 L1367.8,662.5 L1369.5,665.0 L1371.3,667.3 L1373.4,669.4 L1375.6,671.5 L1377.9,673.3 L1380.4,675.0 L1383.0,676.4 L1385.7,677.7 L1388.4,678.8 L1391.3,679.7 L1394.2,680.3 L1397.1,680.8 L1400.1,681.0Z" fill="#fff6d0"/>
<path d="M1400.1,681.0 L1397.1,680.8 L1394.2,680.3 L1391.3,679.7 L1388.4,678.8 L1385.7,677.7 L1383.0,676.4 L1380.4,675.0 L1377.9,673.3 L1375.6,671.5 L1373.4,669.4 L1371.3,667.3 L1369.5,665.0 L1367.8,662.5 L1366.3,659.9 L1365.0,657.3 L1363.8,654.5 L1362.9,651.7 L1362.3,648.8 L1361.8,645.8 L1361.5,642.9 L1361.5,639.9 L1361.7,636.9 L1362.1,634.0 L1362.8,631.1 L1363.6,628.2 L1364.7,625.4 L1365.9,622.7 L1367.4,620.1 L1369.0,617.6 L1370.9,615.3 M1399.9,687.0 L1396.5,686.7 L1393.1,686.2 L1389.7,685.5 L1386.5,684.5 L1383.3,683.2 L1380.2,681.8 L1377.2,680.1 L1374.4,678.2 L1371.7,676.0 L1369.2,673.7 L1366.8,671.2 L1364.7,668.6 L1362.7,665.7 L1361.0,662.8 L1359.5,659.7 L1358.2,656.5 L1357.2,653.3 L1356.4,649.9 L1355.8,646.6 L1355.5,643.1 L1355.5,639.7 L1355.7,636.3 L1356.2,632.9 L1356.9,629.6 L1357.9,626.3 L1359.1,623.1 L1360.6,620.0 L1362.3,617.0 L1364.2,614.1 L1366.3,611.4 M1399.7,693.0 L1395.8,692.7 L1392.0,692.1 L1388.2,691.3 L1384.5,690.1 L1380.9,688.7 L1377.4,687.1 L1374.0,685.2 L1370.8,683.0 L1367.8,680.6 L1364.9,678.0 L1362.3,675.2 L1359.9,672.1 L1357.7,669.0 L1355.7,665.6 L1354.0,662.2 L1352.6,658.6 L1351.4,654.9 L1350.5,651.1 L1349.9,647.3 L1349.6,643.4 L1349.5,639.5 L1349.8,635.7 L1350.3,631.9 L1351.1,628.1 L1352.2,624.4 L1353.6,620.7 L1355.3,617.2 L1357.1,613.9 L1359.3,610.6 L1361.7,607.6 M1399.5,699.0 L1395.2,698.7 L1390.9,698.0 L1386.7,697.1 L1382.6,695.8 L1378.5,694.3 L1374.6,692.4 L1370.9,690.3 L1367.3,687.8 L1363.9,685.2 L1360.7,682.3 L1357.8,679.1 L1355.1,675.7 L1352.6,672.2 L1350.4,668.5 L1348.5,664.6 L1346.9,660.6 L1345.6,656.5 L1344.6,652.3 L1343.9,648.0 L1343.6,643.7 L1343.5,639.4 L1343.8,635.1 L1344.4,630.8 L1345.3,626.6 L1346.6,622.4 L1348.1,618.4 L1349.9,614.5 L1352.0,610.7 L1354.4,607.1 L1357.1,603.7 M1399.3,705.0 L1394.5,704.6 L1389.8,703.9 L1385.2,702.9 L1380.6,701.5 L1376.2,699.8 L1371.8,697.7 L1367.7,695.4 L1363.8,692.7 L1360.0,689.7 L1356.5,686.5 L1353.2,683.0 L1350.3,679.3 L1347.5,675.4 L1345.1,671.3 L1343.0,667.0 L1341.3,662.6 L1339.8,658.1 L1338.7,653.4 L1338.0,648.7 L1337.6,644.0 L1337.5,639.2 L1337.8,634.5 L1338.5,629.7 L1339.5,625.1 L1340.9,620.5 L1342.6,616.1 L1344.6,611.7 L1346.9,607.6 L1349.5,603.6 L1352.5,599.9 M1400.1,681.0 L1399.3,705.0 M1394.2,680.3 L1389.8,703.9 M1388.5,678.8 L1380.7,701.5 M1383.0,676.5 L1371.9,697.8 M1378.0,673.4 L1363.9,692.8 M1373.5,669.5 L1356.6,686.6 M1369.6,665.1 L1350.4,679.5 M1366.3,660.1 L1345.3,671.5 M1363.9,654.7 L1341.4,662.9 M1362.3,649.0 L1338.8,653.8 M1361.6,643.1 L1337.6,644.3 M1361.7,637.2 L1337.8,634.9 M1362.7,631.3 L1339.4,625.5 M1364.5,625.7 L1342.4,616.5 M1367.2,620.4 L1346.6,608.0 M1370.6,615.6 L1352.1,600.3" fill="none" stroke="#6b6357" stroke-width="1"/>
<clipPath id="m1po"><path d="M1330.9,203.0 L1581.5,377.0 L1568.9,395.8 L1576.5,401.4 L1583.9,407.2 L1591.1,413.2 L1598.1,419.5 L1604.9,426.0 L1611.5,432.6 L1617.9,439.5 L1624.1,446.6 L1630.1,453.9 L1635.8,461.3 L1641.4,468.9 L1646.6,476.7 L1651.7,484.6 L1656.5,492.7 L1661.0,500.9 L1665.3,509.3 L1669.3,517.8 L1673.1,526.4 L1676.6,535.1 L1679.9,543.9 L1682.8,552.9 L1685.5,561.9 L1687.9,570.9 L1690.0,580.1 L1691.9,589.3 L1693.5,598.6 L1694.7,607.9 L1695.7,617.2 L1696.4,626.6 L1696.9,636.0 L1723.5,636.0 L1723.5,943.0 L1607.5,943.0 L1607.5,998.0 L1575.5,998.0 L1575.5,841.0 L1339.5,841.0 L1339.5,858.0 L1268.5,858.0 L1268.5,835.0 L1133.5,835.0 L1133.5,826.0 L1126.0,825.4 L1118.7,823.5 L1111.9,820.5 L1105.6,816.3 L1100.1,811.2 L1095.5,805.2 L1092.1,798.5 L1089.7,791.4 L1088.6,783.9 L1088.7,776.4 L1090.1,769.0 L1092.7,762.0 L1090.5,750.0 L1165.5,638.0 L1150.5,629.0 L1190.5,571.0 L1330.5,381.0 L1204.3,290.3 L1220.8,266.5 L1265.5,297.0Z"/></clipPath>
<g clip-path="url(#m1po)">
<path d="M1131.9,827.0 L1127.9,826.7 L1124.0,826.0 L1120.2,825.0 L1116.5,823.7 L1112.9,822.1 L1109.4,820.2 L1106.1,818.0 L1103.0,815.5 L1100.2,812.7 L1097.6,809.7 L1095.2,806.5 L1093.2,803.2 L1091.4,799.6 L1090.0,795.9 L1088.9,792.1 L1088.1,788.2 L1087.6,784.3 L1087.5,780.4 L1087.7,776.4 L1088.3,772.5 L1089.2,768.6 L1090.4,764.9 L1092.0,761.2 L1093.8,757.7 L1096.0,754.4 L1098.4,751.3 L1101.1,748.4 L1104.0,745.7 L1107.2,743.3 L1110.5,741.2 L1123.0,762.8 L1121.5,763.8 L1120.0,764.9 L1118.7,766.1 L1117.5,767.4 L1116.4,768.9 L1115.4,770.4 L1114.5,772.0 L1113.8,773.6 L1113.3,775.4 L1112.9,777.1 L1112.6,778.9 L1112.5,780.7 L1112.6,782.5 L1112.8,784.3 L1113.1,786.1 L1113.6,787.8 L1114.3,789.5 L1115.1,791.1 L1116.0,792.7 L1117.1,794.1 L1118.3,795.5 L1119.6,796.7 L1121.0,797.9 L1122.5,798.9 L1124.1,799.8 L1125.7,800.5 L1127.4,801.1 L1129.2,801.6 L1131.0,801.8 L1132.8,802.0Z" fill="#fff6d0"/>
<path d="M1132.8,802.0 L1131.0,801.8 L1129.2,801.6 L1127.4,801.1 L1125.7,800.5 L1124.1,799.8 L1122.5,798.9 L1121.0,797.9 L1119.6,796.7 L1118.3,795.5 L1117.1,794.1 L1116.0,792.7 L1115.1,791.1 L1114.3,789.5 L1113.6,787.8 L1113.1,786.1 L1112.8,784.3 L1112.6,782.5 L1112.5,780.7 L1112.6,778.9 L1112.9,777.1 L1113.3,775.4 L1113.8,773.6 L1114.5,772.0 L1115.4,770.4 L1116.4,768.9 L1117.5,767.4 L1118.7,766.1 L1120.0,764.9 L1121.5,763.8 L1123.0,762.8 M1132.6,808.0 L1130.2,807.8 L1127.9,807.4 L1125.7,806.8 L1123.5,806.1 L1121.4,805.1 L1119.4,804.0 L1117.4,802.7 L1115.6,801.2 L1113.9,799.6 L1112.4,797.9 L1111.0,796.0 L1109.8,794.0 L1108.8,791.9 L1108.0,789.8 L1107.3,787.5 L1106.8,785.3 L1106.6,782.9 L1106.5,780.6 L1106.6,778.3 L1107.0,776.0 L1107.5,773.7 L1108.2,771.5 L1109.1,769.4 L1110.2,767.3 L1111.5,765.4 L1112.9,763.5 L1114.5,761.8 L1116.2,760.3 L1118.0,758.9 L1120.0,757.6 M1132.3,814.0 L1129.5,813.8 L1126.7,813.3 L1124.0,812.6 L1121.3,811.7 L1118.7,810.5 L1116.2,809.1 L1113.9,807.5 L1111.6,805.7 L1109.6,803.8 L1107.7,801.6 L1106.1,799.3 L1104.6,796.9 L1103.3,794.4 L1102.3,791.7 L1101.5,789.0 L1100.9,786.2 L1100.6,783.4 L1100.5,780.5 L1100.7,777.7 L1101.1,774.9 L1101.7,772.1 L1102.6,769.4 L1103.7,766.8 L1105.0,764.3 L1106.6,761.9 L1108.3,759.7 L1110.2,757.6 L1112.3,755.7 L1114.6,753.9 L1117.0,752.4 M1132.1,820.0 L1128.8,819.7 L1125.5,819.2 L1122.2,818.3 L1119.1,817.2 L1116.0,815.9 L1113.1,814.2 L1110.3,812.3 L1107.7,810.2 L1105.3,807.9 L1103.0,805.4 L1101.1,802.7 L1099.3,799.8 L1097.8,796.8 L1096.6,793.7 L1095.7,790.4 L1095.0,787.1 L1094.6,783.8 L1094.5,780.5 L1094.7,777.1 L1095.2,773.8 L1095.9,770.5 L1097.0,767.3 L1098.3,764.2 L1099.9,761.3 L1101.7,758.4 L1103.7,755.8 L1106.0,753.3 L1108.5,751.1 L1111.2,749.0 L1114.0,747.2 M1131.9,826.0 L1128.1,825.7 L1124.2,825.0 L1120.5,824.1 L1116.8,822.8 L1113.3,821.2 L1109.9,819.3 L1106.7,817.2 L1103.7,814.7 L1100.9,812.0 L1098.4,809.1 L1096.1,806.0 L1094.1,802.7 L1092.3,799.2 L1090.9,795.6 L1089.8,791.9 L1089.1,788.1 L1088.6,784.2 L1088.5,780.4 L1088.7,776.5 L1089.3,772.7 L1090.2,768.9 L1091.4,765.2 L1092.9,761.7 L1094.7,758.2 L1096.8,755.0 L1099.2,751.9 L1101.8,749.1 L1104.7,746.5 L1107.7,744.1 L1111.0,742.0 M1132.8,802.0 L1131.9,827.0 M1129.3,801.6 L1124.3,826.1 M1126.0,800.6 L1117.0,823.9 M1122.8,799.1 L1110.2,820.6 M1120.0,797.1 L1103.9,816.2 M1117.5,794.6 L1098.5,810.9 M1115.5,791.8 L1094.1,804.7 M1114.0,788.7 L1090.7,797.9 M1113.0,785.4 L1088.5,790.6 M1112.5,781.9 L1087.5,783.0 M1112.7,778.4 L1087.8,775.4 M1113.4,775.0 L1089.4,767.9 M1114.6,771.8 L1092.2,760.8 M1116.4,768.8 L1096.1,754.3 M1118.7,766.2 L1101.0,748.5 M1121.3,763.9 L1106.8,743.6" fill="none" stroke="#6b6357" stroke-width="1"/>
</g>
<path d="M1516.8,413.9 L1543.5,432.8 L1517.9,468.3 L1490.2,449.4Z" fill="#fff"/>
<path d="M1454.5,441.9 L1465.9,425.5 L1472.5,430.1 L1461.1,446.5Z" fill="#fff"/>
<path d="M1430.0,486.5 L1418.4,478.6 L1425.8,467.9 L1437.4,475.8Z" fill="#fff"/>
<path d="M1434.5,545.9 L1464.5,531.0 L1527.5,648.4 L1497.5,663.3Z" fill="#fff"/>
<path d="M1607.9,637.6 L1651.5,637.6 L1651.5,672.8 L1607.9,672.8Z" fill="#fff"/>
<path d="M1444.0,700.5 L1455.7,700.5 L1455.7,707.9 L1444.0,707.9Z" fill="#fff"/>
<path d="M1544.0,701.5 L1566.4,701.5 L1566.4,709.0 L1544.0,709.0Z" fill="#fff"/>
<path d="M1589.8,701.5 L1615.3,701.5 L1615.3,709.0 L1589.8,709.0Z" fill="#fff"/>
<path d="M1524.5,701.0 L1539.5,701.0 L1539.5,713.0 L1524.5,713.0Z" fill="#fff"/>
<path d="M1382.6,624.6 L1402.6,637.6 L1378.6,673.8 L1376.5,672.3 L1374.6,670.6 L1372.8,668.9 L1371.1,667.0 L1369.5,665.0 L1368.1,662.9 L1366.7,660.8 L1365.6,658.6 L1364.5,656.3 L1363.6,653.9Z" fill="#fff"/>
<path d="M1367.8,565.7 L1374.6,555.8 L1381.2,560.3 L1374.4,570.2Z" fill="#fff"/>
<path d="M1301.5,661.5 L1291.7,654.7 L1298.5,644.9 L1308.3,651.7Z" fill="#fff"/>
<path d="M1447.1,569.4 L1477.1,554.5" stroke="#6b6357" stroke-width="1"/>
<path d="M1459.7,592.9 L1489.7,578.0" stroke="#6b6357" stroke-width="1"/>
<path d="M1472.3,616.3 L1502.3,601.4" stroke="#6b6357" stroke-width="1"/>
<path d="M1484.9,639.8 L1514.9,624.9" stroke="#6b6357" stroke-width="1"/>
<g fill="none" stroke="#6a1ee8" stroke-width="1.3">
<path d="M1220.8,266.5 L1265.5,297.0 L1330.9,203.0 L1524.0,336.0"/>
<path d="M1242.5,318.0 L1330.5,381.0 L1304.5,417.0"/>
<path d="M1317.5,332.4 L1362.2,363.3"/>
<path d="M1378.2,375.0 L1452.7,425.0"/>
<path d="M1498.5,372.8 L1525.1,339.8"/>
<path d="M1535.7,364.6 L1479.1,463.9 L1509.1,483.9 L1570.2,398.3"/>
<path d="M1516.5,351.5 L1554.9,376.0"/>
<path d="M1430.0,486.5 L1418.4,478.6 L1425.8,467.9 L1437.4,475.8 L1430.0,486.5"/>
<path d="M1466.8,528.6 L1434.5,545.9 L1497.5,663.3 L1529.0,646.7 L1507.0,612.0 L1532.9,598.7"/>
<path d="M1483.5,519.5 L1489.6,516.0 L1552.6,634.9 L1546.5,638.0"/>
<path d="M1589.8,637.6 L1704.8,637.6 L1704.8,673.0 L1589.8,673.0 L1589.8,637.6"/>
<path d="M1704.8,673.0 L1704.8,683.0"/>
<path d="M1524.5,701.0 L1539.5,701.0 L1539.5,713.0 L1524.5,713.0 L1524.5,701.0"/>
<path d="M1704.8,698.0 L1704.8,707.0 L1676.0,707.0"/>
<path d="M1704.8,707.0 L1720.5,707.0"/>
<path d="M1607.2,698.0 L1607.2,892.0"/>
<path d="M1607.2,910.0 L1607.2,943.0"/>
<path d="M1723.5,753.0 L1723.5,943.0 L1607.5,943.0 L1607.5,998.0 L1575.5,998.0 L1575.5,841.0 L1540.5,841.0"/>
<path d="M1269.9,752.7 L1269.9,843.0"/>
<path d="M1304.5,710.5 L1304.5,834.5"/>
<path d="M1339.2,710.5 L1339.2,834.5"/>
<path d="M1304.5,710.5 L1339.2,710.5"/>
<path d="M1304.5,730.4 L1339.2,730.4"/>
<path d="M1304.5,753.3 L1339.2,753.3"/>
<path d="M1269.5,834.5 L1279.5,834.5"/>
<path d="M1294.5,834.5 L1318.5,834.5"/>
<path d="M1333.5,834.5 L1339.5,834.5"/>
<path d="M1090.8,749.5 L1134.1,779.4"/>
<path d="M1133.3,804.6 L1133.3,834.5"/>
<path d="M1190.4,571.4 L1307.2,650.8"/>
<path d="M1150.5,629.0 L1165.5,638.0"/>
<path d="M1301.5,661.5 L1291.7,654.7 L1298.5,644.9 L1308.3,651.7 L1301.5,661.5"/>
<path d="M1396.5,679.0 L1403.7,679.0 L1403.7,636.9 L1371.5,614.6 L1371.4,614.6 L1369.4,617.1 L1367.6,619.8 L1366.0,622.7 L1364.6,625.6 L1363.4,628.7 L1362.6,631.8 L1362.0,635.0 L1361.6,638.3 L1361.5,641.5 L1361.7,644.8 L1362.1,648.0 L1362.8,651.2 L1363.8,654.3 L1365.0,657.3 L1366.4,660.2 L1368.1,663.0 L1370.0,665.7 L1372.1,668.2 L1374.4,670.5 L1376.9,672.6 L1379.6,674.5 L1382.4,676.1 L1385.3,677.6 L1388.3,678.8"/>
<path d="M1403.7,636.9 L1433.5,621.0"/>
<path d="M1396.5,679.0 L1403.7,679.0"/>
</g>
<rect x="1405.9" y="257.5" width="16" height="7" rx="1" transform="rotate(34.7 1413.9 261.0)" fill="none" stroke="#f08a1c" stroke-width="1.5"/><circle cx="1413.9" cy="261.0" r="2.8" fill="#000"/>
<rect x="1380.8" y="295.2" width="16" height="7" rx="1" transform="rotate(34.7 1388.8 298.7)" fill="none" stroke="#f08a1c" stroke-width="1.5"/><circle cx="1388.8" cy="298.7" r="2.8" fill="#000"/>
<rect x="1480.6" y="305.6" width="8" height="8" rx="2.8" fill="#f88a10"/><circle cx="1484.6" cy="309.6" r="3" fill="#000"/>
<rect x="1519.6" y="331.6" width="8" height="8" rx="2.8" fill="#f88a10"/><circle cx="1523.6" cy="335.6" r="3" fill="#000"/>
<rect x="1455.7" y="342.2" width="8" height="8" rx="2.8" fill="#f88a10"/><circle cx="1459.7" cy="346.2" r="3" fill="#000"/>
<rect x="1342.5" y="350.8" width="16" height="7" rx="1" transform="rotate(34.7 1350.5 354.3)" fill="none" stroke="#f08a1c" stroke-width="1.5"/><circle cx="1350.5" cy="354.3" r="2.8" fill="#000"/>
<rect x="1494.1" y="368.8" width="8" height="8" rx="2.8" fill="#f88a10"/><circle cx="1498.1" cy="372.8" r="3" fill="#000"/>
<rect x="1417.8" y="398.0" width="8" height="8" rx="2.8" fill="#f88a10"/><circle cx="1421.8" cy="402.0" r="3" fill="#000"/>
<rect x="1308.4" y="408.8" width="16" height="7" rx="1" transform="rotate(34.7 1316.4 412.3)" fill="none" stroke="#f08a1c" stroke-width="1.5"/><circle cx="1316.4" cy="412.3" r="2.8" fill="#000"/>
<rect x="1380.5" y="454.3" width="8" height="8" rx="2.8" fill="#f88a10"/><circle cx="1384.5" cy="458.3" r="3" fill="#000"/>
<rect x="1422.2" y="483.2" width="8" height="8" rx="2.8" fill="#f88a10"/><circle cx="1426.2" cy="487.2" r="3" fill="#000"/>
<rect x="1541.7" y="481.4" width="8" height="8" rx="2.8" fill="#f88a10"/><circle cx="1545.7" cy="485.4" r="3" fill="#000"/>
<rect x="1615.1" y="442.1" width="8" height="8" rx="2.8" fill="#f88a10"/><circle cx="1619.1" cy="446.1" r="3" fill="#000"/>
<rect x="1572.8" y="539.9" width="8" height="8" rx="2.8" fill="#f88a10"/><circle cx="1576.8" cy="543.9" r="3" fill="#000"/>
<rect x="1383.9" y="537.7" width="8" height="8" rx="2.8" fill="#f88a10"/><circle cx="1387.9" cy="541.7" r="3" fill="#000"/>
<rect x="1652.4" y="499.9" width="8" height="8" rx="2.8" fill="#f88a10"/><circle cx="1656.4" cy="503.9" r="3" fill="#000"/>
<rect x="1573.7" y="541.5" width="8" height="8" rx="2.8" fill="#f88a10"/><circle cx="1577.7" cy="545.5" r="3" fill="#000"/>
<rect x="1679.5" y="561.7" width="8" height="8" rx="2.8" fill="#f88a10"/><circle cx="1683.5" cy="565.7" r="3" fill="#000"/>
<rect x="1605.4" y="601.3" width="8" height="8" rx="2.8" fill="#f88a10"/><circle cx="1609.4" cy="605.3" r="3" fill="#000"/>
<rect x="1469.1" y="697.1" width="8" height="14" fill="none" stroke="#f88a10" stroke-width="1.7"/><circle cx="1473.1" cy="704.1" r="3" fill="#000"/>
<circle cx="1539.8" cy="704.1" r="4.2" fill="#f08a1c"/><circle cx="1539.8" cy="704.1" r="3.2" fill="#6a1ee8"/>
<rect x="1672.0" y="703.9" width="8" height="8" rx="2.8" fill="#f88a10"/><circle cx="1676.0" cy="707.9" r="3" fill="#000"/>
<rect x="1716.7" y="703.9" width="8" height="8" rx="2.8" fill="#f88a10"/><circle cx="1720.7" cy="707.9" r="3" fill="#000"/>
<rect x="1270.3" y="465.1" width="16" height="7" rx="1" transform="rotate(34.7 1278.3 468.6)" fill="none" stroke="#f08a1c" stroke-width="1.5"/><circle cx="1278.3" cy="468.6" r="2.8" fill="#000"/>
<rect x="1233.0" y="520.9" width="16" height="7" rx="1" transform="rotate(34.7 1241.0 524.4)" fill="none" stroke="#f08a1c" stroke-width="1.5"/><circle cx="1241.0" cy="524.4" r="2.8" fill="#000"/>
<rect x="1341.7" y="510.8" width="8" height="8" rx="2.8" fill="#f88a10"/><circle cx="1345.7" cy="514.8" r="3" fill="#000"/>
<rect x="1383.8" y="538.5" width="8" height="8" rx="2.8" fill="#f88a10"/><circle cx="1387.8" cy="542.5" r="3" fill="#000"/>
<rect x="1303.9" y="566.2" width="8" height="8" rx="2.8" fill="#f88a10"/><circle cx="1307.9" cy="570.2" r="3" fill="#000"/>
<rect x="1228.6" y="678.1" width="8" height="8" rx="2.8" fill="#f88a10"/><circle cx="1232.6" cy="682.1" r="3" fill="#000"/>
<circle cx="1166.4" cy="638.8" r="4.2" fill="#f08a1c"/><circle cx="1166.4" cy="638.8" r="3.2" fill="#6a1ee8"/>
<rect x="1401.7" y="751.4" width="8" height="8" rx="2.8" fill="#f88a10"/><circle cx="1405.7" cy="755.4" r="3" fill="#000"/>
<rect x="1469.4" y="751.4" width="8" height="8" rx="2.8" fill="#f88a10"/><circle cx="1473.4" cy="755.4" r="3" fill="#000"/>
<rect x="1536.8" y="751.4" width="8" height="8" rx="2.8" fill="#f88a10"/><circle cx="1540.8" cy="755.4" r="3" fill="#000"/>
<rect x="1401.7" y="828.4" width="8" height="14" fill="none" stroke="#f88a10" stroke-width="1.7"/><circle cx="1405.7" cy="835.4" r="3" fill="#000"/>
<rect x="1469.4" y="828.4" width="8" height="14" fill="none" stroke="#f88a10" stroke-width="1.7"/><circle cx="1473.4" cy="835.4" r="3" fill="#000"/>
<rect x="1536.8" y="828.4" width="8" height="14" fill="none" stroke="#f88a10" stroke-width="1.7"/><circle cx="1540.8" cy="835.4" r="3" fill="#000"/>
<rect x="1125.4" y="690.4" width="8" height="8" rx="2.8" fill="#f88a10"/><circle cx="1129.4" cy="694.4" r="3" fill="#000"/>
<rect x="1086.8" y="745.5" width="8" height="8" rx="2.8" fill="#f88a10"/><circle cx="1090.8" cy="749.5" r="3" fill="#000"/>
<rect x="1199.8" y="740.5" width="8" height="8" rx="2.8" fill="#f88a10"/><circle cx="1203.8" cy="744.5" r="3" fill="#000"/>
<circle cx="1134.1" cy="779.4" r="4.2" fill="#f08a1c"/><circle cx="1134.1" cy="779.4" r="3.2" fill="#6a1ee8"/>
<rect x="1131.7" y="828.1" width="8" height="8" rx="2.8" fill="#f88a10"/><circle cx="1135.7" cy="832.1" r="3" fill="#000"/>
<rect x="1198.8" y="828.1" width="8" height="8" rx="2.8" fill="#f88a10"/><circle cx="1202.8" cy="832.1" r="3" fill="#000"/>
<circle cx="1607.9" cy="755.0" r="4.2" fill="#f08a1c"/><circle cx="1607.9" cy="755.0" r="3.2" fill="#6a1ee8"/>
<rect x="1671.7" y="751.0" width="8" height="8" rx="2.8" fill="#f88a10"/><circle cx="1675.7" cy="755.0" r="3" fill="#000"/>
<rect x="1716.5" y="751.0" width="8" height="8" rx="2.8" fill="#f88a10"/><circle cx="1720.5" cy="755.0" r="3" fill="#000"/>
<rect x="1603.9" y="830.3" width="8" height="19" fill="none" stroke="#f88a10" stroke-width="1.7"/><circle cx="1607.9" cy="839.8" r="3" fill="#000"/>
<rect x="1671.7" y="830.3" width="8" height="19" fill="none" stroke="#f88a10" stroke-width="1.7"/><circle cx="1675.7" cy="839.8" r="3" fill="#000"/>
<rect x="1716.5" y="830.3" width="8" height="19" fill="none" stroke="#f88a10" stroke-width="1.7"/><circle cx="1720.5" cy="839.8" r="3" fill="#000"/>
<circle cx="1441.6" cy="560.9" r="2.6" fill="#6a1ee8"/>
<circle cx="1454.2" cy="582.2" r="2.6" fill="#6a1ee8"/>
<circle cx="1477.8" cy="627.0" r="2.6" fill="#6a1ee8"/>
<circle cx="1518.0" cy="634.1" r="2.6" fill="#6a1ee8"/>
<circle cx="1362.9" cy="653.5" r="2.8" fill="#6a1ee8"/>
<circle cx="1370.2" cy="682.8" r="2.0" fill="#6a1ee8"/>
<circle cx="1571.1" cy="773.5" r="2.0" fill="#6a1ee8"/>
<circle cx="1442.6" cy="617.6" r="2.5" fill="#1030ff"/>
<path d="M1103.8,386.6 L1266.0,352.0 L1438.3,593.3 L1411.6,676.5 L1360.0,739.0 L1060.0,553.3Z" fill="#ff0000" fill-opacity="0.2"/>
<g clip-path="url(#cs1)"><rect x="1328.1" y="593.0" width="167.0" height="167.0" fill="#fff"/>
<pattern id="s1a" patternUnits="userSpaceOnUse" width="6.000" height="6.000" patternTransform="rotate(0.00)"><rect width="6.000" height="6.000" fill="#fff6d0"/><rect width="6.000" height="1.000" fill="#6b6357"/><rect width="1.000" height="6.000" fill="#6b6357"/></pattern>
<pattern id="s1b" patternUnits="userSpaceOnUse" width="6.200" height="6.200" patternTransform="rotate(34.70)"><rect width="6.200" height="6.200" fill="#fff6d0"/><rect width="6.200" height="1.000" fill="#6b6357"/><rect width="1.000" height="6.200" fill="#6b6357"/></pattern>
<path d="M1330.9,203.0 L1581.5,377.0 L1568.9,395.8 L1576.5,401.4 L1583.9,407.2 L1591.1,413.2 L1598.1,419.5 L1604.9,426.0 L1611.5,432.6 L1617.9,439.5 L1624.1,446.6 L1630.1,453.9 L1635.8,461.3 L1641.4,468.9 L1646.6,476.7 L1651.7,484.6 L1656.5,492.7 L1661.0,500.9 L1665.3,509.3 L1669.3,517.8 L1673.1,526.4 L1676.6,535.1 L1679.9,543.9 L1682.8,552.9 L1685.5,561.9 L1687.9,570.9 L1690.0,580.1 L1691.9,589.3 L1693.5,598.6 L1694.7,607.9 L1695.7,617.2 L1696.4,626.6 L1696.9,636.0 L1723.5,636.0 L1723.5,943.0 L1607.5,943.0 L1607.5,998.0 L1575.5,998.0 L1575.5,841.0 L1339.5,841.0 L1339.5,858.0 L1268.5,858.0 L1268.5,835.0 L1133.5,835.0 L1133.5,826.0 L1126.0,825.4 L1118.7,823.5 L1111.9,820.5 L1105.6,816.3 L1100.1,811.2 L1095.5,805.2 L1092.1,798.5 L1089.7,791.4 L1088.6,783.9 L1088.7,776.4 L1090.1,769.0 L1092.7,762.0 L1090.5,750.0 L1165.5,638.0 L1150.5,629.0 L1190.5,571.0 L1330.5,381.0 L1204.3,290.3 L1220.8,266.5 L1265.5,297.0Z" fill="url(#s1a)"/>
<path d="M1330.9,203.0 L1581.5,377.0 L1568.9,395.8 L1576.5,401.4 L1583.9,407.2 L1591.1,413.2 L1598.1,419.5 L1604.9,426.0 L1611.5,432.6 L1617.9,439.5 L1624.1,446.6 L1630.1,453.9 L1635.8,461.3 L1641.4,468.9 L1646.6,476.7 L1651.7,484.6 L1656.5,492.7 L1661.0,500.9 L1665.3,509.3 L1669.3,517.8 L1673.1,526.4 L1676.6,535.1 L1679.9,543.9 L1682.8,552.9 L1685.5,561.9 L1687.9,570.9 L1690.0,580.1 L1691.9,589.3 L1693.5,598.6 L1563.5,645.0 L1483.5,667.0 L1403.5,673.0 L1343.5,695.0 L1303.5,710.0 L1288.5,740.0 L1233.5,790.0 L1163.5,800.0 L1118.5,770.0 L1090.5,750.0 L1165.5,638.0 L1150.5,629.0 L1190.5,571.0 L1330.5,381.0 L1204.3,290.3 L1220.8,266.5 L1265.5,297.0Z" fill="url(#s1b)"/>
<path d="M1399.3,705.0 L1394.5,704.6 L1389.8,703.9 L1385.2,702.9 L1380.6,701.5 L1376.2,699.8 L1371.8,697.7 L1367.7,695.4 L1363.8,692.7 L1360.0,689.7 L1356.5,686.5 L1353.2,683.0 L1350.3,679.3 L1347.5,675.4 L1345.1,671.3 L1343.0,667.0 L1341.3,662.6 L1339.8,658.1 L1338.7,653.4 L1338.0,648.7 L1337.6,644.0 L1337.5,639.2 L1337.8,634.5 L1338.5,629.7 L1339.5,625.1 L1340.9,620.5 L1342.6,616.1 L1344.6,611.7 L1346.9,607.6 L1349.5,603.6 L1352.5,599.9 L1370.9,615.3 L1369.0,617.6 L1367.4,620.1 L1365.9,622.7 L1364.7,625.4 L1363.6,628.2 L1362.8,631.1 L1362.1,634.0 L1361.7,636.9 L1361.5,639.9 L1361.5,642.9 L1361.8,645.8 L1362.3,648.8 L1362.9,651.7 L1363.8,654.5 L1365.0,657.3 L1366.3,659.9 L1367.8,662.5 L1369.5,665.0 L1371.3,667.3 L1373.4,669.4 L1375.6,671.5 L1377.9,673.3 L1380.4,675.0 L1383.0,676.4 L1385.7,677.7 L1388.4,678.8 L1391.3,679.7 L1394.2,680.3 L1397.1,680.8 L1400.1,681.0Z" fill="#fff6d0"/>
<path d="M1400.1,681.0 L1397.1,680.8 L1394.2,680.3 L1391.3,679.7 L1388.4,678.8 L1385.7,677.7 L1383.0,676.4 L1380.4,675.0 L1377.9,673.3 L1375.6,671.5 L1373.4,669.4 L1371.3,667.3 L1369.5,665.0 L1367.8,662.5 L1366.3,659.9 L1365.0,657.3 L1363.8,654.5 L1362.9,651.7 L1362.3,648.8 L1361.8,645.8 L1361.5,642.9 L1361.5,639.9 L1361.7,636.9 L1362.1,634.0 L1362.8,631.1 L1363.6,628.2 L1364.7,625.4 L1365.9,622.7 L1367.4,620.1 L1369.0,617.6 L1370.9,615.3 M1399.9,687.0 L1396.5,686.7 L1393.1,686.2 L1389.7,685.5 L1386.5,684.5 L1383.3,683.2 L1380.2,681.8 L1377.2,680.1 L1374.4,678.2 L1371.7,676.0 L1369.2,673.7 L1366.8,671.2 L1364.7,668.6 L1362.7,665.7 L1361.0,662.8 L1359.5,659.7 L1358.2,656.5 L1357.2,653.3 L1356.4,649.9 L1355.8,646.6 L1355.5,643.1 L1355.5,639.7 L1355.7,636.3 L1356.2,632.9 L1356.9,629.6 L1357.9,626.3 L1359.1,623.1 L1360.6,620.0 L1362.3,617.0 L1364.2,614.1 L1366.3,611.4 M1399.7,693.0 L1395.8,692.7 L1392.0,692.1 L1388.2,691.3 L1384.5,690.1 L1380.9,688.7 L1377.4,687.1 L1374.0,685.2 L1370.8,683.0 L1367.8,680.6 L1364.9,678.0 L1362.3,675.2 L1359.9,672.1 L1357.7,669.0 L1355.7,665.6 L1354.0,662.2 L1352.6,658.6 L1351.4,654.9 L1350.5,651.1 L1349.9,647.3 L1349.6,643.4 L1349.5,639.5 L1349.8,635.7 L1350.3,631.9 L1351.1,628.1 L1352.2,624.4 L1353.6,620.7 L1355.3,617.2 L1357.1,613.9 L1359.3,610.6 L1361.7,607.6 M1399.5,699.0 L1395.2,698.7 L1390.9,698.0 L1386.7,697.1 L1382.6,695.8 L1378.5,694.3 L1374.6,692.4 L1370.9,690.3 L1367.3,687.8 L1363.9,685.2 L1360.7,682.3 L1357.8,679.1 L1355.1,675.7 L1352.6,672.2 L1350.4,668.5 L1348.5,664.6 L1346.9,660.6 L1345.6,656.5 L1344.6,652.3 L1343.9,648.0 L1343.6,643.7 L1343.5,639.4 L1343.8,635.1 L1344.4,630.8 L1345.3,626.6 L1346.6,622.4 L1348.1,618.4 L1349.9,614.5 L1352.0,610.7 L1354.4,607.1 L1357.1,603.7 M1399.3,705.0 L1394.5,704.6 L1389.8,703.9 L1385.2,702.9 L1380.6,701.5 L1376.2,699.8 L1371.8,697.7 L1367.7,695.4 L1363.8,692.7 L1360.0,689.7 L1356.5,686.5 L1353.2,683.0 L1350.3,679.3 L1347.5,675.4 L1345.1,671.3 L1343.0,667.0 L1341.3,662.6 L1339.8,658.1 L1338.7,653.4 L1338.0,648.7 L1337.6,644.0 L1337.5,639.2 L1337.8,634.5 L1338.5,629.7 L1339.5,625.1 L1340.9,620.5 L1342.6,616.1 L1344.6,611.7 L1346.9,607.6 L1349.5,603.6 L1352.5,599.9 M1400.1,681.0 L1399.3,705.0 M1394.2,680.3 L1389.8,703.9 M1388.5,678.8 L1380.7,701.5 M1383.0,676.5 L1371.9,697.8 M1378.0,673.4 L1363.9,692.8 M1373.5,669.5 L1356.6,686.6 M1369.6,665.1 L1350.4,679.5 M1366.3,660.1 L1345.3,671.5 M1363.9,654.7 L1341.4,662.9 M1362.3,649.0 L1338.8,653.8 M1361.6,643.1 L1337.6,644.3 M1361.7,637.2 L1337.8,634.9 M1362.7,631.3 L1339.4,625.5 M1364.5,625.7 L1342.4,616.5 M1367.2,620.4 L1346.6,608.0 M1370.6,615.6 L1352.1,600.3" fill="none" stroke="#6b6357" stroke-width="1"/>
<clipPath id="s1po"><path d="M1330.9,203.0 L1581.5,377.0 L1568.9,395.8 L1576.5,401.4 L1583.9,407.2 L1591.1,413.2 L1598.1,419.5 L1604.9,426.0 L1611.5,432.6 L1617.9,439.5 L1624.1,446.6 L1630.1,453.9 L1635.8,461.3 L1641.4,468.9 L1646.6,476.7 L1651.7,484.6 L1656.5,492.7 L1661.0,500.9 L1665.3,509.3 L1669.3,517.8 L1673.1,526.4 L1676.6,535.1 L1679.9,543.9 L1682.8,552.9 L1685.5,561.9 L1687.9,570.9 L1690.0,580.1 L1691.9,589.3 L1693.5,598.6 L1694.7,607.9 L1695.7,617.2 L1696.4,626.6 L1696.9,636.0 L1723.5,636.0 L1723.5,943.0 L1607.5,943.0 L1607.5,998.0 L1575.5,998.0 L1575.5,841.0 L1339.5,841.0 L1339.5,858.0 L1268.5,858.0 L1268.5,835.0 L1133.5,835.0 L1133.5,826.0 L1126.0,825.4 L1118.7,823.5 L1111.9,820.5 L1105.6,816.3 L1100.1,811.2 L1095.5,805.2 L1092.1,798.5 L1089.7,791.4 L1088.6,783.9 L1088.7,776.4 L1090.1,769.0 L1092.7,762.0 L1090.5,750.0 L1165.5,638.0 L1150.5,629.0 L1190.5,571.0 L1330.5,381.0 L1204.3,290.3 L1220.8,266.5 L1265.5,297.0Z"/></clipPath>
<g clip-path="url(#s1po)">
<path d="M1131.9,827.0 L1127.9,826.7 L1124.0,826.0 L1120.2,825.0 L1116.5,823.7 L1112.9,822.1 L1109.4,820.2 L1106.1,818.0 L1103.0,815.5 L1100.2,812.7 L1097.6,809.7 L1095.2,806.5 L1093.2,803.2 L1091.4,799.6 L1090.0,795.9 L1088.9,792.1 L1088.1,788.2 L1087.6,784.3 L1087.5,780.4 L1087.7,776.4 L1088.3,772.5 L1089.2,768.6 L1090.4,764.9 L1092.0,761.2 L1093.8,757.7 L1096.0,754.4 L1098.4,751.3 L1101.1,748.4 L1104.0,745.7 L1107.2,743.3 L1110.5,741.2 L1123.0,762.8 L1121.5,763.8 L1120.0,764.9 L1118.7,766.1 L1117.5,767.4 L1116.4,768.9 L1115.4,770.4 L1114.5,772.0 L1113.8,773.6 L1113.3,775.4 L1112.9,777.1 L1112.6,778.9 L1112.5,780.7 L1112.6,782.5 L1112.8,784.3 L1113.1,786.1 L1113.6,787.8 L1114.3,789.5 L1115.1,791.1 L1116.0,792.7 L1117.1,794.1 L1118.3,795.5 L1119.6,796.7 L1121.0,797.9 L1122.5,798.9 L1124.1,799.8 L1125.7,800.5 L1127.4,801.1 L1129.2,801.6 L1131.0,801.8 L1132.8,802.0Z" fill="#fff6d0"/>
<path d="M1132.8,802.0 L1131.0,801.8 L1129.2,801.6 L1127.4,801.1 L1125.7,800.5 L1124.1,799.8 L1122.5,798.9 L1121.0,797.9 L1119.6,796.7 L1118.3,795.5 L1117.1,794.1 L1116.0,792.7 L1115.1,791.1 L1114.3,789.5 L1113.6,787.8 L1113.1,786.1 L1112.8,784.3 L1112.6,782.5 L1112.5,780.7 L1112.6,778.9 L1112.9,777.1 L1113.3,775.4 L1113.8,773.6 L1114.5,772.0 L1115.4,770.4 L1116.4,768.9 L1117.5,767.4 L1118.7,766.1 L1120.0,764.9 L1121.5,763.8 L1123.0,762.8 M1132.6,808.0 L1130.2,807.8 L1127.9,807.4 L1125.7,806.8 L1123.5,806.1 L1121.4,805.1 L1119.4,804.0 L1117.4,802.7 L1115.6,801.2 L1113.9,799.6 L1112.4,797.9 L1111.0,796.0 L1109.8,794.0 L1108.8,791.9 L1108.0,789.8 L1107.3,787.5 L1106.8,785.3 L1106.6,782.9 L1106.5,780.6 L1106.6,778.3 L1107.0,776.0 L1107.5,773.7 L1108.2,771.5 L1109.1,769.4 L1110.2,767.3 L1111.5,765.4 L1112.9,763.5 L1114.5,761.8 L1116.2,760.3 L1118.0,758.9 L1120.0,757.6 M1132.3,814.0 L1129.5,813.8 L1126.7,813.3 L1124.0,812.6 L1121.3,811.7 L1118.7,810.5 L1116.2,809.1 L1113.9,807.5 L1111.6,805.7 L1109.6,803.8 L1107.7,801.6 L1106.1,799.3 L1104.6,796.9 L1103.3,794.4 L1102.3,791.7 L1101.5,789.0 L1100.9,786.2 L1100.6,783.4 L1100.5,780.5 L1100.7,777.7 L1101.1,774.9 L1101.7,772.1 L1102.6,769.4 L1103.7,766.8 L1105.0,764.3 L1106.6,761.9 L1108.3,759.7 L1110.2,757.6 L1112.3,755.7 L1114.6,753.9 L1117.0,752.4 M1132.1,820.0 L1128.8,819.7 L1125.5,819.2 L1122.2,818.3 L1119.1,817.2 L1116.0,815.9 L1113.1,814.2 L1110.3,812.3 L1107.7,810.2 L1105.3,807.9 L1103.0,805.4 L1101.1,802.7 L1099.3,799.8 L1097.8,796.8 L1096.6,793.7 L1095.7,790.4 L1095.0,787.1 L1094.6,783.8 L1094.5,780.5 L1094.7,777.1 L1095.2,773.8 L1095.9,770.5 L1097.0,767.3 L1098.3,764.2 L1099.9,761.3 L1101.7,758.4 L1103.7,755.8 L1106.0,753.3 L1108.5,751.1 L1111.2,749.0 L1114.0,747.2 M1131.9,826.0 L1128.1,825.7 L1124.2,825.0 L1120.5,824.1 L1116.8,822.8 L1113.3,821.2 L1109.9,819.3 L1106.7,817.2 L1103.7,814.7 L1100.9,812.0 L1098.4,809.1 L1096.1,806.0 L1094.1,802.7 L1092.3,799.2 L1090.9,795.6 L1089.8,791.9 L1089.1,788.1 L1088.6,784.2 L1088.5,780.4 L1088.7,776.5 L1089.3,772.7 L1090.2,768.9 L1091.4,765.2 L1092.9,761.7 L1094.7,758.2 L1096.8,755.0 L1099.2,751.9 L1101.8,749.1 L1104.7,746.5 L1107.7,744.1 L1111.0,742.0 M1132.8,802.0 L1131.9,827.0 M1129.3,801.6 L1124.3,826.1 M1126.0,800.6 L1117.0,823.9 M1122.8,799.1 L1110.2,820.6 M1120.0,797.1 L1103.9,816.2 M1117.5,794.6 L1098.5,810.9 M1115.5,791.8 L1094.1,804.7 M1114.0,788.7 L1090.7,797.9 M1113.0,785.4 L1088.5,790.6 M1112.5,781.9 L1087.5,783.0 M1112.7,778.4 L1087.8,775.4 M1113.4,775.0 L1089.4,767.9 M1114.6,771.8 L1092.2,760.8 M1116.4,768.8 L1096.1,754.3 M1118.7,766.2 L1101.0,748.5 M1121.3,763.9 L1106.8,743.6" fill="none" stroke="#6b6357" stroke-width="1"/>
</g>
<path d="M1516.8,413.9 L1543.5,432.8 L1517.9,468.3 L1490.2,449.4Z" fill="#fff"/>
<path d="M1454.5,441.9 L1465.9,425.5 L1472.5,430.1 L1461.1,446.5Z" fill="#fff"/>
<path d="M1430.0,486.5 L1418.4,478.6 L1425.8,467.9 L1437.4,475.8Z" fill="#fff"/>
<path d="M1434.5,545.9 L1464.5,531.0 L1527.5,648.4 L1497.5,663.3Z" fill="#fff"/>
<path d="M1607.9,637.6 L1651.5,637.6 L1651.5,672.8 L1607.9,672.8Z" fill="#fff"/>
<path d="M1444.0,700.5 L1455.7,700.5 L1455.7,707.9 L1444.0,707.9Z" fill="#fff"/>
<path d="M1544.0,701.5 L1566.4,701.5 L1566.4,709.0 L1544.0,709.0Z" fill="#fff"/>
<path d="M1589.8,701.5 L1615.3,701.5 L1615.3,709.0 L1589.8,709.0Z" fill="#fff"/>
<path d="M1524.5,701.0 L1539.5,701.0 L1539.5,713.0 L1524.5,713.0Z" fill="#fff"/>
<path d="M1382.6,624.6 L1402.6,637.6 L1378.6,673.8 L1376.5,672.3 L1374.6,670.6 L1372.8,668.9 L1371.1,667.0 L1369.5,665.0 L1368.1,662.9 L1366.7,660.8 L1365.6,658.6 L1364.5,656.3 L1363.6,653.9Z" fill="#fff"/>
<path d="M1367.8,565.7 L1374.6,555.8 L1381.2,560.3 L1374.4,570.2Z" fill="#fff"/>
<path d="M1301.5,661.5 L1291.7,654.7 L1298.5,644.9 L1308.3,651.7Z" fill="#fff"/>
<path d="M1447.1,569.4 L1477.1,554.5" stroke="#6b6357" stroke-width="1"/>
<path d="M1459.7,592.9 L1489.7,578.0" stroke="#6b6357" stroke-width="1"/>
<path d="M1472.3,616.3 L1502.3,601.4" stroke="#6b6357" stroke-width="1"/>
<path d="M1484.9,639.8 L1514.9,624.9" stroke="#6b6357" stroke-width="1"/>
<g fill="none" stroke="#6a1ee8" stroke-width="1.3">
<path d="M1220.8,266.5 L1265.5,297.0 L1330.9,203.0 L1524.0,336.0"/>
<path d="M1242.5,318.0 L1330.5,381.0 L1304.5,417.0"/>
<path d="M1317.5,332.4 L1362.2,363.3"/>
<path d="M1378.2,375.0 L1452.7,425.0"/>
<path d="M1498.5,372.8 L1525.1,339.8"/>
<path d="M1535.7,364.6 L1479.1,463.9 L1509.1,483.9 L1570.2,398.3"/>
<path d="M1516.5,351.5 L1554.9,376.0"/>
<path d="M1430.0,486.5 L1418.4,478.6 L1425.8,467.9 L1437.4,475.8 L1430.0,486.5"/>
<path d="M1466.8,528.6 L1434.5,545.9 L1497.5,663.3 L1529.0,646.7 L1507.0,612.0 L1532.9,598.7"/>
<path d="M1483.5,519.5 L1489.6,516.0 L1552.6,634.9 L1546.5,638.0"/>
<path d="M1589.8,637.6 L1704.8,637.6 L1704.8,673.0 L1589.8,673.0 L1589.8,637.6"/>
<path d="M1704.8,673.0 L1704.8,683.0"/>
<path d="M1524.5,701.0 L1539.5,701.0 L1539.5,713.0 L1524.5,713.0 L1524.5,701.0"/>
<path d="M1704.8,698.0 L1704.8,707.0 L1676.0,707.0"/>
<path d="M1704.8,707.0 L1720.5,707.0"/>
<path d="M1607.2,698.0 L1607.2,892.0"/>
<path d="M1607.2,910.0 L1607.2,943.0"/>
<path d="M1723.5,753.0 L1723.5,943.0 L1607.5,943.0 L1607.5,998.0 L1575.5,998.0 L1575.5,841.0 L1540.5,841.0"/>
<path d="M1269.9,752.7 L1269.9,843.0"/>
<path d="M1304.5,710.5 L1304.5,834.5"/>
<path d="M1339.2,710.5 L1339.2,834.5"/>
<path d="M1304.5,710.5 L1339.2,710.5"/>
<path d="M1304.5,730.4 L1339.2,730.4"/>
<path d="M1304.5,753.3 L1339.2,753.3"/>
<path d="M1269.5,834.5 L1279.5,834.5"/>
<path d="M1294.5,834.5 L1318.5,834.5"/>
<path d="M1333.5,834.5 L1339.5,834.5"/>
<path d="M1090.8,749.5 L1134.1,779.4"/>
<path d="M1133.3,804.6 L1133.3,834.5"/>
<path d="M1190.4,571.4 L1307.2,650.8"/>
<path d="M1150.5,629.0 L1165.5,638.0"/>
<path d="M1301.5,661.5 L1291.7,654.7 L1298.5,644.9 L1308.3,651.7 L1301.5,661.5"/>
<path d="M1396.5,679.0 L1403.7,679.0 L1403.7,636.9 L1371.5,614.6 L1371.4,614.6 L1369.4,617.1 L1367.6,619.8 L1366.0,622.7 L1364.6,625.6 L1363.4,628.7 L1362.6,631.8 L1362.0,635.0 L1361.6,638.3 L1361.5,641.5 L1361.7,644.8 L1362.1,648.0 L1362.8,651.2 L1363.8,654.3 L1365.0,657.3 L1366.4,660.2 L1368.1,663.0 L1370.0,665.7 L1372.1,668.2 L1374.4,670.5 L1376.9,672.6 L1379.6,674.5 L1382.4,676.1 L1385.3,677.6 L1388.3,678.8"/>
<path d="M1403.7,636.9 L1433.5,621.0"/>
<path d="M1396.5,679.0 L1403.7,679.0"/>
</g>
<rect x="1405.9" y="257.5" width="16" height="7" rx="1" transform="rotate(34.7 1413.9 261.0)" fill="none" stroke="#f08a1c" stroke-width="1.5"/><circle cx="1413.9" cy="261.0" r="2.8" fill="#000"/>
<rect x="1380.8" y="295.2" width="16" height="7" rx="1" transform="rotate(34.7 1388.8 298.7)" fill="none" stroke="#f08a1c" stroke-width="1.5"/><circle cx="1388.8" cy="298.7" r="2.8" fill="#000"/>
<rect x="1480.6" y="305.6" width="8" height="8" rx="2.8" fill="#f88a10"/><circle cx="1484.6" cy="309.6" r="3" fill="#000"/>
<rect x="1519.6" y="331.6" width="8" height="8" rx="2.8" fill="#f88a10"/><circle cx="1523.6" cy="335.6" r="3" fill="#000"/>
<rect x="1455.7" y="342.2" width="8" height="8" rx="2.8" fill="#f88a10"/><circle cx="1459.7" cy="346.2" r="3" fill="#000"/>
<rect x="1342.5" y="350.8" width="16" height="7" rx="1" transform="rotate(34.7 1350.5 354.3)" fill="none" stroke="#f08a1c" stroke-width="1.5"/><circle cx="1350.5" cy="354.3" r="2.8" fill="#000"/>
<rect x="1494.1" y="368.8" width="8" height="8" rx="2.8" fill="#f88a10"/><circle cx="1498.1" cy="372.8" r="3" fill="#000"/>
<rect x="1417.8" y="398.0" width="8" height="8" rx="2.8" fill="#f88a10"/><circle cx="1421.8" cy="402.0" r="3" fill="#000"/>
<rect x="1308.4" y="408.8" width="16" height="7" rx="1" transform="rotate(34.7 1316.4 412.3)" fill="none" stroke="#f08a1c" stroke-width="1.5"/><circle cx="1316.4" cy="412.3" r="2.8" fill="#000"/>
<rect x="1380.5" y="454.3" width="8" height="8" rx="2.8" fill="#f88a10"/><circle cx="1384.5" cy="458.3" r="3" fill="#000"/>
<rect x="1422.2" y="483.2" width="8" height="8" rx="2.8" fill="#f88a10"/><circle cx="1426.2" cy="487.2" r="3" fill="#000"/>
<rect x="1541.7" y="481.4" width="8" height="8" rx="2.8" fill="#f88a10"/><circle cx="1545.7" cy="485.4" r="3" fill="#000"/>
<rect x="1615.1" y="442.1" width="8" height="8" rx="2.8" fill="#f88a10"/><circle cx="1619.1" cy="446.1" r="3" fill="#000"/>
<rect x="1572.8" y="539.9" width="8" height="8" rx="2.8" fill="#f88a10"/><circle cx="1576.8" cy="543.9" r="3" fill="#000"/>
<rect x="1383.9" y="537.7" width="8" height="8" rx="2.8" fill="#f88a10"/><circle cx="1387.9" cy="541.7" r="3" fill="#000"/>
<rect x="1652.4" y="499.9" width="8" height="8" rx="2.8" fill="#f88a10"/><circle cx="1656.4" cy="503.9" r="3" fill="#000"/>
<rect x="1573.7" y="541.5" width="8" height="8" rx="2.8" fill="#f88a10"/><circle cx="1577.7" cy="545.5" r="3" fill="#000"/>
<rect x="1679.5" y="561.7" width="8" height="8" rx="2.8" fill="#f88a10"/><circle cx="1683.5" cy="565.7" r="3" fill="#000"/>
<rect x="1605.4" y="601.3" width="8" height="8" rx="2.8" fill="#f88a10"/><circle cx="1609.4" cy="605.3" r="3" fill="#000"/>
<rect x="1469.1" y="697.1" width="8" height="14" fill="none" stroke="#f88a10" stroke-width="1.7"/><circle cx="1473.1" cy="704.1" r="3" fill="#000"/>
<circle cx="1539.8" cy="704.1" r="4.2" fill="#f08a1c"/><circle cx="1539.8" cy="704.1" r="3.2" fill="#6a1ee8"/>
<rect x="1672.0" y="703.9" width="8" height="8" rx="2.8" fill="#f88a10"/><circle cx="1676.0" cy="707.9" r="3" fill="#000"/>
<rect x="1716.7" y="703.9" width="8" height="8" rx="2.8" fill="#f88a10"/><circle cx="1720.7" cy="707.9" r="3" fill="#000"/>
<rect x="1270.3" y="465.1" width="16" height="7" rx="1" transform="rotate(34.7 1278.3 468.6)" fill="none" stroke="#f08a1c" stroke-width="1.5"/><circle cx="1278.3" cy="468.6" r="2.8" fill="#000"/>
<rect x="1233.0" y="520.9" width="16" height="7" rx="1" transform="rotate(34.7 1241.0 524.4)" fill="none" stroke="#f08a1c" stroke-width="1.5"/><circle cx="1241.0" cy="524.4" r="2.8" fill="#000"/>
<rect x="1341.7" y="510.8" width="8" height="8" rx="2.8" fill="#f88a10"/><circle cx="1345.7" cy="514.8" r="3" fill="#000"/>
<rect x="1383.8" y="538.5" width="8" height="8" rx="2.8" fill="#f88a10"/><circle cx="1387.8" cy="542.5" r="3" fill="#000"/>
<rect x="1303.9" y="566.2" width="8" height="8" rx="2.8" fill="#f88a10"/><circle cx="1307.9" cy="570.2" r="3" fill="#000"/>
<rect x="1228.6" y="678.1" width="8" height="8" rx="2.8" fill="#f88a10"/><circle cx="1232.6" cy="682.1" r="3" fill="#000"/>
<circle cx="1166.4" cy="638.8" r="4.2" fill="#f08a1c"/><circle cx="1166.4" cy="638.8" r="3.2" fill="#6a1ee8"/>
<rect x="1401.7" y="751.4" width="8" height="8" rx="2.8" fill="#f88a10"/><circle cx="1405.7" cy="755.4" r="3" fill="#000"/>
<rect x="1469.4" y="751.4" width="8" height="8" rx="2.8" fill="#f88a10"/><circle cx="1473.4" cy="755.4" r="3" fill="#000"/>
<rect x="1536.8" y="751.4" width="8" height="8" rx="2.8" fill="#f88a10"/><circle cx="1540.8" cy="755.4" r="3" fill="#000"/>
<rect x="1401.7" y="828.4" width="8" height="14" fill="none" stroke="#f88a10" stroke-width="1.7"/><circle cx="1405.7" cy="835.4" r="3" fill="#000"/>
<rect x="1469.4" y="828.4" width="8" height="14" fill="none" stroke="#f88a10" stroke-width="1.7"/><circle cx="1473.4" cy="835.4" r="3" fill="#000"/>
<rect x="1536.8" y="828.4" width="8" height="14" fill="none" stroke="#f88a10" stroke-width="1.7"/><circle cx="1540.8" cy="835.4" r="3" fill="#000"/>
<rect x="1125.4" y="690.4" width="8" height="8" rx="2.8" fill="#f88a10"/><circle cx="1129.4" cy="694.4" r="3" fill="#000"/>
<rect x="1086.8" y="745.5" width="8" height="8" rx="2.8" fill="#f88a10"/><circle cx="1090.8" cy="749.5" r="3" fill="#000"/>
<rect x="1199.8" y="740.5" width="8" height="8" rx="2.8" fill="#f88a10"/><circle cx="1203.8" cy="744.5" r="3" fill="#000"/>
<circle cx="1134.1" cy="779.4" r="4.2" fill="#f08a1c"/><circle cx="1134.1" cy="779.4" r="3.2" fill="#6a1ee8"/>
<rect x="1131.7" y="828.1" width="8" height="8" rx="2.8" fill="#f88a10"/><circle cx="1135.7" cy="832.1" r="3" fill="#000"/>
<rect x="1198.8" y="828.1" width="8" height="8" rx="2.8" fill="#f88a10"/><circle cx="1202.8" cy="832.1" r="3" fill="#000"/>
<circle cx="1607.9" cy="755.0" r="4.2" fill="#f08a1c"/><circle cx="1607.9" cy="755.0" r="3.2" fill="#6a1ee8"/>
<rect x="1671.7" y="751.0" width="8" height="8" rx="2.8" fill="#f88a10"/><circle cx="1675.7" cy="755.0" r="3" fill="#000"/>
<rect x="1716.5" y="751.0" width="8" height="8" rx="2.8" fill="#f88a10"/><circle cx="1720.5" cy="755.0" r="3" fill="#000"/>
<rect x="1603.9" y="830.3" width="8" height="19" fill="none" stroke="#f88a10" stroke-width="1.7"/><circle cx="1607.9" cy="839.8" r="3" fill="#000"/>
<rect x="1671.7" y="830.3" width="8" height="19" fill="none" stroke="#f88a10" stroke-width="1.7"/><circle cx="1675.7" cy="839.8" r="3" fill="#000"/>
<rect x="1716.5" y="830.3" width="8" height="19" fill="none" stroke="#f88a10" stroke-width="1.7"/><circle cx="1720.5" cy="839.8" r="3" fill="#000"/>
<circle cx="1441.6" cy="560.9" r="2.6" fill="#6a1ee8"/>
<circle cx="1454.2" cy="582.2" r="2.6" fill="#6a1ee8"/>
<circle cx="1477.8" cy="627.0" r="2.6" fill="#6a1ee8"/>
<circle cx="1518.0" cy="634.1" r="2.6" fill="#6a1ee8"/>
<circle cx="1362.9" cy="653.5" r="2.8" fill="#6a1ee8"/>
<circle cx="1370.2" cy="682.8" r="2.0" fill="#6a1ee8"/>
<circle cx="1571.1" cy="773.5" r="2.0" fill="#6a1ee8"/>
<circle cx="1442.6" cy="617.6" r="2.5" fill="#1030ff"/>
</g>
<circle cx="1411.6" cy="676.5" r="83.5" fill="none" stroke="#f00" stroke-width="3.5"/>
</g>
<g clip-path="url(#cb1)"><rect x="940.3" y="217.1" width="327.0" height="339.0" fill="#fff"/>
<pattern id="b1a" patternUnits="userSpaceOnUse" width="11.760" height="11.760" patternTransform="rotate(0.00)"><rect width="11.760" height="11.760" fill="#fffad6"/><rect width="11.760" height="1.000" fill="#7a7468"/><rect width="1.000" height="11.760" fill="#7a7468"/></pattern>
<pattern id="b1b" patternUnits="userSpaceOnUse" width="11.760" height="11.760" patternTransform="rotate(34.70)"><rect width="11.760" height="11.760" fill="#fffad6"/><rect width="11.760" height="1.000" fill="#7a7468"/><rect width="1.000" height="11.760" fill="#7a7468"/></pattern>
<path d="M955.8,-543.1 L1447.0,-202.1 L1422.4,-165.3 L1437.2,-154.3 L1451.6,-142.9 L1465.8,-131.1 L1479.5,-118.8 L1492.9,-106.1 L1505.8,-93.0 L1518.4,-79.5 L1530.5,-65.7 L1542.2,-51.5 L1553.5,-36.9 L1564.3,-22.0 L1574.7,-6.7 L1584.5,8.8 L1593.9,24.7 L1602.9,40.8 L1611.3,57.2 L1619.2,73.8 L1626.6,90.7 L1633.4,107.8 L1639.8,125.1 L1645.6,142.6 L1650.8,160.2 L1655.6,178.0 L1659.7,196.0 L1663.4,214.0 L1666.4,232.2 L1668.9,250.5 L1670.9,268.8 L1672.3,287.1 L1673.1,305.6 L1725.3,305.5 L1725.3,907.3 L1497.9,907.3 L1497.9,1015.1 L1435.2,1015.1 L1435.2,707.3 L972.7,707.3 L972.7,740.7 L833.5,740.7 L833.5,695.6 L568.9,695.6 L568.9,677.9 L554.2,676.7 L540.0,673.1 L526.5,667.1 L514.2,658.9 L503.4,648.9 L494.5,637.1 L487.7,624.1 L483.1,610.1 L480.9,595.5 L481.2,580.8 L483.9,566.3 L489.0,552.5 L484.6,529.0 L631.6,309.5 L602.2,291.8 L680.6,178.1 L955.0,-194.3 L707.7,-372.0 L740.0,-418.7 L827.6,-358.9Z" fill="url(#b1a)"/>
<path d="M955.8,-543.1 L1447.0,-202.1 L1422.4,-165.3 L1437.2,-154.3 L1451.6,-142.9 L1465.8,-131.1 L1479.5,-118.8 L1492.9,-106.1 L1505.8,-93.0 L1518.4,-79.5 L1530.5,-65.7 L1542.2,-51.5 L1553.5,-36.9 L1564.3,-22.0 L1574.7,-6.7 L1584.5,8.8 L1593.9,24.7 L1602.9,40.8 L1611.3,57.2 L1619.2,73.8 L1626.6,90.7 L1633.4,107.8 L1639.8,125.1 L1645.6,142.6 L1650.8,160.2 L1655.6,178.0 L1659.7,196.0 L1663.4,214.0 L1666.4,232.2 L1411.7,323.2 L1254.9,366.3 L1098.1,378.1 L980.5,421.2 L902.1,450.6 L872.7,509.4 L764.9,607.4 L627.7,627.0 L539.5,568.2 L484.6,529.0 L631.6,309.5 L602.2,291.8 L680.6,178.1 L955.0,-194.3 L707.7,-372.0 L740.0,-418.7 L827.6,-358.9Z" fill="url(#b1b)"/>
<path d="M1089.8,440.7 L1080.5,440.0 L1071.3,438.7 L1062.1,436.6 L1053.2,433.9 L1044.5,430.5 L1036.1,426.5 L1028.0,421.9 L1020.2,416.7 L1012.9,410.9 L1006.0,404.6 L999.6,397.8 L993.7,390.5 L988.4,382.8 L983.7,374.7 L979.6,366.4 L976.1,357.7 L973.3,348.8 L971.1,339.7 L969.7,330.5 L968.9,321.2 L968.8,311.8 L969.4,302.5 L970.7,293.3 L972.7,284.1 L975.3,275.2 L978.7,266.5 L982.6,258.0 L987.2,249.9 L992.4,242.1 L998.1,234.7 L1034.1,264.9 L1030.5,269.6 L1027.3,274.4 L1024.5,279.5 L1022.0,284.8 L1019.9,290.3 L1018.3,295.8 L1017.0,301.6 L1016.2,307.3 L1015.8,313.2 L1015.9,319.0 L1016.4,324.8 L1017.3,330.6 L1018.6,336.3 L1020.4,341.8 L1022.6,347.2 L1025.1,352.5 L1028.1,357.5 L1031.4,362.3 L1035.1,366.8 L1039.1,371.1 L1043.4,375.0 L1048.0,378.7 L1052.8,381.9 L1057.9,384.8 L1063.1,387.3 L1068.6,389.4 L1074.2,391.1 L1079.9,392.4 L1085.6,393.3 L1091.5,393.7Z" fill="#fffad6"/>
<path d="M1091.5,393.7 L1085.6,393.3 L1079.9,392.4 L1074.2,391.1 L1068.6,389.4 L1063.1,387.3 L1057.9,384.8 L1052.8,381.9 L1048.0,378.7 L1043.4,375.0 L1039.1,371.1 L1035.1,366.8 L1031.4,362.3 L1028.1,357.5 L1025.1,352.5 L1022.6,347.2 L1020.4,341.8 L1018.6,336.3 L1017.3,330.6 L1016.4,324.8 L1015.9,319.0 L1015.8,313.2 L1016.2,307.3 L1017.0,301.6 L1018.3,295.8 L1019.9,290.3 L1022.0,284.8 L1024.5,279.5 L1027.3,274.4 L1030.5,269.6 L1034.1,264.9 M1091.0,405.4 L1084.3,405.0 L1077.7,404.0 L1071.2,402.5 L1064.7,400.6 L1058.5,398.1 L1052.4,395.2 L1046.6,391.9 L1041.0,388.2 L1035.8,384.0 L1030.8,379.5 L1026.2,374.6 L1022.0,369.4 L1018.2,363.8 L1014.8,358.0 L1011.8,352.0 L1009.3,345.8 L1007.3,339.4 L1005.7,332.9 L1004.7,326.2 L1004.1,319.5 L1004.1,312.8 L1004.5,306.1 L1005.4,299.5 L1006.9,292.9 L1008.8,286.5 L1011.2,280.2 L1014.0,274.1 L1017.3,268.3 L1021.0,262.7 L1025.1,257.4 M1090.6,417.2 L1083.1,416.7 L1075.6,415.5 L1068.2,413.9 L1060.9,411.7 L1053.8,408.9 L1047.0,405.7 L1040.4,401.9 L1034.1,397.7 L1028.1,393.0 L1022.5,387.8 L1017.3,382.3 L1012.6,376.4 L1008.3,370.2 L1004.4,363.6 L1001.1,356.8 L998.3,349.8 L996.0,342.5 L994.2,335.1 L993.0,327.6 L992.4,320.1 L992.3,312.5 L992.8,304.9 L993.9,297.4 L995.5,290.0 L997.6,282.7 L1000.3,275.6 L1003.5,268.8 L1007.3,262.1 L1011.5,255.8 L1016.1,249.8 M1090.2,429.0 L1081.8,428.3 L1073.4,427.1 L1065.1,425.3 L1057.1,422.8 L1049.2,419.7 L1041.5,416.1 L1034.2,411.9 L1027.2,407.2 L1020.5,401.9 L1014.3,396.2 L1008.5,390.0 L1003.2,383.4 L998.3,376.5 L994.1,369.2 L990.3,361.6 L987.2,353.7 L984.6,345.7 L982.7,337.4 L981.3,329.1 L980.6,320.6 L980.6,312.2 L981.1,303.7 L982.3,295.3 L984.1,287.1 L986.5,279.0 L989.5,271.0 L993.1,263.4 L997.2,256.0 L1001.9,249.0 L1007.1,242.3 M1089.8,440.7 L1080.5,440.0 L1071.3,438.7 L1062.1,436.6 L1053.2,433.9 L1044.5,430.5 L1036.1,426.5 L1028.0,421.9 L1020.2,416.7 L1012.9,410.9 L1006.0,404.6 L999.6,397.8 L993.7,390.5 L988.4,382.8 L983.7,374.7 L979.6,366.4 L976.1,357.7 L973.3,348.8 L971.1,339.7 L969.7,330.5 L968.9,321.2 L968.8,311.8 L969.4,302.5 L970.7,293.3 L972.7,284.1 L975.3,275.2 L978.7,266.5 L982.6,258.0 L987.2,249.9 L992.4,242.1 L998.1,234.7 M1091.5,393.7 L1089.8,440.7 M1079.9,392.4 L1071.3,438.7 M1068.7,389.5 L1053.3,433.9 M1058.0,384.9 L1036.3,426.6 M1048.1,378.8 L1020.5,416.8 M1039.2,371.3 L1006.3,404.8 M1031.6,362.5 L994.0,390.8 M1025.3,352.8 L983.9,375.2 M1020.5,342.2 L976.3,358.2 M1017.4,331.0 L971.3,340.4 M1015.9,319.4 L968.9,321.9 M1016.1,307.8 L969.3,303.3 M1018.1,296.4 L972.5,285.0 M1021.8,285.3 L978.3,267.3 M1027.0,275.0 L986.7,250.7 M1033.7,265.5 L997.4,235.6" fill="none" stroke="#7a7468" stroke-width="1"/>
<clipPath id="b1po"><path d="M955.8,-543.1 L1447.0,-202.1 L1422.4,-165.3 L1437.2,-154.3 L1451.6,-142.9 L1465.8,-131.1 L1479.5,-118.8 L1492.9,-106.1 L1505.8,-93.0 L1518.4,-79.5 L1530.5,-65.7 L1542.2,-51.5 L1553.5,-36.9 L1564.3,-22.0 L1574.7,-6.7 L1584.5,8.8 L1593.9,24.7 L1602.9,40.8 L1611.3,57.2 L1619.2,73.8 L1626.6,90.7 L1633.4,107.8 L1639.8,125.1 L1645.6,142.6 L1650.8,160.2 L1655.6,178.0 L1659.7,196.0 L1663.4,214.0 L1666.4,232.2 L1668.9,250.5 L1670.9,268.8 L1672.3,287.1 L1673.1,305.6 L1725.3,305.5 L1725.3,907.3 L1497.9,907.3 L1497.9,1015.1 L1435.2,1015.1 L1435.2,707.3 L972.7,707.3 L972.7,740.7 L833.5,740.7 L833.5,695.6 L568.9,695.6 L568.9,677.9 L554.2,676.7 L540.0,673.1 L526.5,667.1 L514.2,658.9 L503.4,648.9 L494.5,637.1 L487.7,624.1 L483.1,610.1 L480.9,595.5 L481.2,580.8 L483.9,566.3 L489.0,552.5 L484.6,529.0 L631.6,309.5 L602.2,291.8 L680.6,178.1 L955.0,-194.3 L707.7,-372.0 L740.0,-418.7 L827.6,-358.9Z"/></clipPath>
<g clip-path="url(#b1po)">
<path d="M565.8,679.8 L558.0,679.2 L550.4,678.0 L542.8,676.1 L535.5,673.5 L528.4,670.3 L521.7,666.5 L515.2,662.2 L509.2,657.3 L503.6,651.9 L498.5,646.1 L493.9,639.8 L489.9,633.2 L486.5,626.2 L483.6,619.0 L481.4,611.6 L479.9,604.0 L479.0,596.2 L478.8,588.5 L479.2,580.7 L480.3,573.1 L482.1,565.5 L484.5,558.1 L487.5,551.0 L491.1,544.1 L495.4,537.6 L500.1,531.5 L505.4,525.8 L511.1,520.5 L517.3,515.8 L523.8,511.7 L548.3,554.1 L545.3,556.0 L542.5,558.2 L539.9,560.5 L537.5,563.1 L535.3,565.9 L533.4,568.9 L531.7,572.0 L530.4,575.3 L529.3,578.7 L528.5,582.1 L528.0,585.6 L527.8,589.2 L527.9,592.7 L528.3,596.2 L529.0,599.7 L530.0,603.1 L531.3,606.4 L532.8,609.6 L534.7,612.6 L536.8,615.5 L539.1,618.1 L541.7,620.6 L544.4,622.8 L547.3,624.8 L550.4,626.5 L553.7,628.0 L557.0,629.1 L560.4,630.0 L563.9,630.6 L567.5,630.9Z" fill="#fffad6"/>
<path d="M567.5,630.9 L563.9,630.6 L560.4,630.0 L557.0,629.1 L553.7,628.0 L550.4,626.5 L547.3,624.8 L544.4,622.8 L541.7,620.6 L539.1,618.1 L536.8,615.5 L534.7,612.6 L532.8,609.6 L531.3,606.4 L530.0,603.1 L529.0,599.7 L528.3,596.2 L527.9,592.7 L527.8,589.2 L528.0,585.6 L528.5,582.1 L529.3,578.7 L530.4,575.3 L531.7,572.0 L533.4,568.9 L535.3,565.9 L537.5,563.1 L539.9,560.5 L542.5,558.2 L545.3,556.0 L548.3,554.1 M567.1,642.6 L562.5,642.3 L558.0,641.5 L553.6,640.4 L549.3,638.9 L545.2,637.0 L541.2,634.8 L537.4,632.3 L533.9,629.4 L530.6,626.2 L527.6,622.8 L524.9,619.1 L522.5,615.2 L520.5,611.2 L518.9,606.9 L517.6,602.5 L516.6,598.1 L516.1,593.6 L516.0,589.0 L516.3,584.5 L516.9,579.9 L517.9,575.5 L519.4,571.2 L521.1,567.0 L523.3,563.0 L525.7,559.1 L528.5,555.5 L531.6,552.2 L535.0,549.1 L538.6,546.4 L542.4,543.9 M566.7,654.4 L561.1,654.0 L555.6,653.0 L550.2,651.7 L545.0,649.8 L539.9,647.5 L535.0,644.8 L530.4,641.7 L526.1,638.2 L522.1,634.3 L518.4,630.2 L515.1,625.7 L512.2,620.9 L509.8,615.9 L507.7,610.7 L506.1,605.4 L505.0,599.9 L504.4,594.4 L504.2,588.8 L504.6,583.3 L505.3,577.8 L506.6,572.4 L508.3,567.1 L510.5,561.9 L513.1,557.0 L516.1,552.3 L519.6,547.9 L523.3,543.8 L527.4,540.1 L531.9,536.7 L536.6,533.7 M566.2,666.1 L559.7,665.6 L553.2,664.6 L546.8,662.9 L540.6,660.8 L534.6,658.1 L528.9,654.9 L523.4,651.2 L518.3,647.0 L513.6,642.5 L509.2,637.5 L505.3,632.2 L501.9,626.6 L499.0,620.7 L496.6,614.5 L494.7,608.2 L493.4,601.8 L492.7,595.3 L492.5,588.7 L492.9,582.1 L493.8,575.6 L495.3,569.2 L497.3,562.9 L499.9,556.9 L503.0,551.1 L506.5,545.5 L510.6,540.3 L515.0,535.5 L519.9,531.1 L525.1,527.1 L530.7,523.5 M565.8,677.9 L558.3,677.3 L550.8,676.1 L543.4,674.2 L536.2,671.7 L529.3,668.6 L522.7,664.9 L516.4,660.6 L510.5,655.8 L505.0,650.6 L500.0,644.9 L495.6,638.7 L491.6,632.2 L488.3,625.4 L485.5,618.4 L483.3,611.1 L481.8,603.6 L480.9,596.1 L480.7,588.5 L481.1,580.9 L482.2,573.4 L484.0,566.0 L486.3,558.8 L489.3,551.8 L492.8,545.1 L497.0,538.7 L501.6,532.7 L506.8,527.2 L512.4,522.0 L518.4,517.4 L524.8,513.4 M567.5,630.9 L565.8,679.8 M560.7,630.1 L550.9,678.1 M554.2,628.2 L536.6,673.9 M548.0,625.2 L523.1,667.4 M542.5,621.3 L511.0,658.8 M537.6,616.5 L500.3,648.3 M533.6,610.9 L491.6,636.2 M530.6,604.8 L485.0,622.8 M528.6,598.3 L480.7,608.5 M527.8,591.5 L478.8,593.7 M528.1,584.7 L479.4,578.8 M529.4,578.1 L482.5,564.1 M531.9,571.7 L487.9,550.2 M535.4,565.8 L495.5,537.4 M539.8,560.6 L505.2,526.0 M545.0,556.2 L516.6,516.3" fill="none" stroke="#7a7468" stroke-width="1"/>
</g>
<path d="M1320.2,-129.8 L1372.5,-92.7 L1322.3,-23.1 L1268.0,-60.2Z" fill="#fff"/>
<path d="M1198.1,-74.8 L1220.4,-107.0 L1233.3,-98.1 L1211.0,-65.9Z" fill="#fff"/>
<path d="M1150.0,12.6 L1127.4,-3.0 L1141.9,-24.0 L1164.5,-8.4Z" fill="#fff"/>
<path d="M1158.9,128.9 L1217.7,99.7 L1341.1,329.8 L1282.3,359.1Z" fill="#fff"/>
<path d="M1498.7,308.7 L1584.2,308.7 L1584.2,377.7 L1498.7,377.7Z" fill="#fff"/>
<path d="M1177.5,432.0 L1200.4,432.0 L1200.4,446.5 L1177.5,446.5Z" fill="#fff"/>
<path d="M1373.5,433.9 L1417.4,433.9 L1417.4,448.6 L1373.5,448.6Z" fill="#fff"/>
<path d="M1463.3,433.9 L1513.2,433.9 L1513.2,448.6 L1463.3,448.6Z" fill="#fff"/>
<path d="M1335.3,432.9 L1364.7,432.9 L1364.7,456.5 L1335.3,456.5Z" fill="#fff"/>
<path d="M1057.1,283.2 L1096.3,308.7 L1049.2,379.6 L1045.3,376.6 L1041.5,373.4 L1037.9,369.9 L1034.6,366.3 L1031.5,362.4 L1028.6,358.4 L1026.1,354.1 L1023.7,349.8 L1021.7,345.2 L1020.0,340.6Z" fill="#fff"/>
<path d="M1028.1,167.7 L1041.5,148.3 L1054.4,157.3 L1041.0,176.6Z" fill="#fff"/>
<path d="M898.2,355.6 L878.9,342.2 L892.3,322.9 L911.6,336.3Z" fill="#fff"/>
<path d="M1183.6,175.0 L1242.4,145.8" stroke="#6b6357" stroke-width="1"/>
<path d="M1208.3,221.0 L1267.1,191.8" stroke="#6b6357" stroke-width="1"/>
<path d="M1233.0,267.0 L1291.8,237.8" stroke="#6b6357" stroke-width="1"/>
<path d="M1257.7,313.0 L1316.5,283.8" stroke="#6b6357" stroke-width="1"/>
<g fill="none" stroke="#6a1ee8" stroke-width="1.3">
<path d="M740.0,-418.7 L827.6,-358.9 L955.8,-543.1 L1334.3,-282.5"/>
<path d="M782.5,-317.7 L955.0,-194.3 L904.1,-123.7"/>
<path d="M929.5,-289.5 L1017.2,-228.9"/>
<path d="M1048.5,-206.0 L1194.5,-108.0"/>
<path d="M1284.3,-210.3 L1336.4,-275.0"/>
<path d="M1357.2,-226.4 L1246.3,-31.8 L1305.1,7.4 L1424.8,-160.3"/>
<path d="M1319.6,-252.1 L1394.9,-204.1"/>
<path d="M1150.0,12.6 L1127.4,-3.0 L1141.9,-24.0 L1164.5,-8.4 L1150.0,12.6"/>
<path d="M1222.2,95.0 L1158.9,128.9 L1282.3,359.1 L1344.1,326.5 L1301.0,258.5 L1351.7,232.4"/>
<path d="M1254.9,77.2 L1266.9,70.3 L1390.3,303.4 L1378.4,309.5"/>
<path d="M1463.3,308.7 L1688.7,308.7 L1688.7,378.1 L1463.3,378.1 L1463.3,308.7"/>
<path d="M1688.7,378.1 L1688.7,397.7"/>
<path d="M1335.3,432.9 L1364.7,432.9 L1364.7,456.5 L1335.3,456.5 L1335.3,432.9"/>
<path d="M1688.7,427.1 L1688.7,444.7 L1632.2,444.7"/>
<path d="M1688.7,444.7 L1719.4,444.7"/>
<path d="M1497.4,427.1 L1497.4,807.3"/>
<path d="M1497.4,842.6 L1497.4,907.3"/>
<path d="M1725.3,534.9 L1725.3,907.3 L1497.9,907.3 L1497.9,1015.1 L1435.2,1015.1 L1435.2,707.3 L1366.6,707.3"/>
<path d="M836.3,534.3 L836.3,711.3"/>
<path d="M904.1,451.6 L904.1,694.6"/>
<path d="M972.1,451.6 L972.1,694.6"/>
<path d="M904.1,451.6 L972.1,451.6"/>
<path d="M904.1,490.6 L972.1,490.6"/>
<path d="M904.1,535.5 L972.1,535.5"/>
<path d="M835.5,694.6 L855.1,694.6"/>
<path d="M884.5,694.6 L931.5,694.6"/>
<path d="M960.9,694.6 L972.7,694.6"/>
<path d="M485.2,528.0 L570.1,586.6"/>
<path d="M568.5,636.0 L568.5,694.6"/>
<path d="M680.4,178.9 L909.4,334.6"/>
<path d="M602.2,291.8 L631.6,309.5"/>
<path d="M898.2,355.6 L878.9,342.2 L892.3,322.9 L911.6,336.3 L898.2,355.6"/>
<path d="M1084.4,389.8 L1098.5,389.8 L1098.5,307.3 L1035.4,263.6 L1035.3,263.6 L1031.3,268.6 L1027.7,273.8 L1024.5,279.4 L1021.8,285.2 L1019.6,291.2 L1017.9,297.3 L1016.7,303.6 L1016.0,310.0 L1015.8,316.4 L1016.1,322.7 L1017.0,329.1 L1018.4,335.3 L1020.2,341.4 L1022.6,347.3 L1025.5,353.1 L1028.8,358.5 L1032.5,363.7 L1036.6,368.6 L1041.2,373.1 L1046.0,377.2 L1051.2,380.9 L1056.7,384.2 L1062.5,387.0 L1068.4,389.4"/>
<path d="M1098.5,307.3 L1156.9,276.1"/>
<path d="M1084.4,389.8 L1098.5,389.8"/>
</g>
<rect x="1110.5" y="-433.0" width="16" height="7" rx="1" transform="rotate(34.7 1118.5 -429.5)" fill="none" stroke="#f08a1c" stroke-width="1.5"/><circle cx="1118.5" cy="-429.5" r="2.8" fill="#000"/>
<rect x="1061.3" y="-359.1" width="16" height="7" rx="1" transform="rotate(34.7 1069.3 -355.6)" fill="none" stroke="#f08a1c" stroke-width="1.5"/><circle cx="1069.3" cy="-355.6" r="2.8" fill="#000"/>
<rect x="1252.6" y="-340.7" width="9" height="13" fill="none" stroke="#f08a1c" stroke-width="1.6"/><circle cx="1257.1" cy="-334.2" r="2.3" fill="#000"/>
<rect x="1329.0" y="-289.7" width="9" height="13" fill="none" stroke="#f08a1c" stroke-width="1.6"/><circle cx="1333.5" cy="-283.2" r="2.3" fill="#000"/>
<rect x="1203.8" y="-269.0" width="9" height="13" fill="none" stroke="#f08a1c" stroke-width="1.6"/><circle cx="1208.3" cy="-262.5" r="2.3" fill="#000"/>
<rect x="986.2" y="-250.1" width="16" height="7" rx="1" transform="rotate(34.7 994.2 -246.6)" fill="none" stroke="#f08a1c" stroke-width="1.5"/><circle cx="994.2" cy="-246.6" r="2.8" fill="#000"/>
<rect x="1279.0" y="-216.8" width="9" height="13" fill="none" stroke="#f08a1c" stroke-width="1.6"/><circle cx="1283.5" cy="-210.3" r="2.3" fill="#000"/>
<rect x="1129.5" y="-159.6" width="9" height="13" fill="none" stroke="#f08a1c" stroke-width="1.6"/><circle cx="1134.0" cy="-153.1" r="2.3" fill="#000"/>
<rect x="919.4" y="-136.4" width="16" height="7" rx="1" transform="rotate(34.7 927.4 -132.9)" fill="none" stroke="#f08a1c" stroke-width="1.5"/><circle cx="927.4" cy="-132.9" r="2.8" fill="#000"/>
<rect x="1056.4" y="-49.2" width="9" height="13" fill="none" stroke="#f08a1c" stroke-width="1.6"/><circle cx="1060.9" cy="-42.7" r="2.3" fill="#000"/>
<rect x="1138.1" y="7.4" width="9" height="13" fill="none" stroke="#f08a1c" stroke-width="1.6"/><circle cx="1142.6" cy="13.9" r="2.3" fill="#000"/>
<rect x="1372.3" y="3.9" width="9" height="13" fill="none" stroke="#f08a1c" stroke-width="1.6"/><circle cx="1376.8" cy="10.4" r="2.3" fill="#000"/>
<rect x="1516.2" y="-73.2" width="9" height="13" fill="none" stroke="#f08a1c" stroke-width="1.6"/><circle cx="1520.7" cy="-66.7" r="2.3" fill="#000"/>
<rect x="1433.3" y="118.5" width="9" height="13" fill="none" stroke="#f08a1c" stroke-width="1.6"/><circle cx="1437.8" cy="125.0" r="2.3" fill="#000"/>
<rect x="1063.0" y="114.2" width="9" height="13" fill="none" stroke="#f08a1c" stroke-width="1.6"/><circle cx="1067.5" cy="120.7" r="2.3" fill="#000"/>
<rect x="1589.3" y="40.1" width="9" height="13" fill="none" stroke="#f08a1c" stroke-width="1.6"/><circle cx="1593.8" cy="46.6" r="2.3" fill="#000"/>
<rect x="1435.0" y="121.7" width="9" height="13" fill="none" stroke="#f08a1c" stroke-width="1.6"/><circle cx="1439.5" cy="128.2" r="2.3" fill="#000"/>
<rect x="1642.4" y="161.3" width="9" height="13" fill="none" stroke="#f08a1c" stroke-width="1.6"/><circle cx="1646.9" cy="167.8" r="2.3" fill="#000"/>
<rect x="1497.2" y="238.9" width="9" height="13" fill="none" stroke="#f08a1c" stroke-width="1.6"/><circle cx="1501.7" cy="245.4" r="2.3" fill="#000"/>
<rect x="1230.0" y="432.5" width="9" height="13" fill="none" stroke="#f08a1c" stroke-width="1.6"/><circle cx="1234.5" cy="439.0" r="2.3" fill="#000"/>
<rect x="1360.8" y="432.5" width="9" height="13" fill="none" stroke="#f08a1c" stroke-width="1.6"/><circle cx="1365.3" cy="439.0" r="2.3" fill="#6a1ee8"/>
<rect x="1627.7" y="440.0" width="9" height="13" fill="none" stroke="#f08a1c" stroke-width="1.6"/><circle cx="1632.2" cy="446.5" r="2.3" fill="#000"/>
<rect x="1715.3" y="440.0" width="9" height="13" fill="none" stroke="#f08a1c" stroke-width="1.6"/><circle cx="1719.8" cy="446.5" r="2.3" fill="#000"/>
<rect x="844.7" y="-26.1" width="16" height="7" rx="1" transform="rotate(34.7 852.7 -22.6)" fill="none" stroke="#f08a1c" stroke-width="1.5"/><circle cx="852.7" cy="-22.6" r="2.8" fill="#000"/>
<rect x="771.6" y="83.3" width="16" height="7" rx="1" transform="rotate(34.7 779.6 86.8)" fill="none" stroke="#f08a1c" stroke-width="1.5"/><circle cx="779.6" cy="86.8" r="2.8" fill="#000"/>
<rect x="980.3" y="61.5" width="9" height="13" fill="none" stroke="#f08a1c" stroke-width="1.6"/><circle cx="984.8" cy="68.0" r="2.3" fill="#000"/>
<rect x="1062.8" y="115.8" width="9" height="13" fill="none" stroke="#f08a1c" stroke-width="1.6"/><circle cx="1067.3" cy="122.3" r="2.3" fill="#000"/>
<rect x="906.2" y="170.1" width="9" height="13" fill="none" stroke="#f08a1c" stroke-width="1.6"/><circle cx="910.7" cy="176.6" r="2.3" fill="#000"/>
<rect x="758.6" y="389.4" width="9" height="13" fill="none" stroke="#f08a1c" stroke-width="1.6"/><circle cx="763.1" cy="395.9" r="2.3" fill="#000"/>
<rect x="628.9" y="304.5" width="9" height="13" fill="none" stroke="#f08a1c" stroke-width="1.6"/><circle cx="633.4" cy="311.0" r="2.3" fill="#6a1ee8"/>
<rect x="1097.9" y="533.1" width="9" height="13" fill="none" stroke="#f08a1c" stroke-width="1.6"/><circle cx="1102.4" cy="539.6" r="2.3" fill="#000"/>
<rect x="1230.6" y="533.1" width="9" height="13" fill="none" stroke="#f08a1c" stroke-width="1.6"/><circle cx="1235.1" cy="539.6" r="2.3" fill="#000"/>
<rect x="1362.7" y="533.1" width="9" height="13" fill="none" stroke="#f08a1c" stroke-width="1.6"/><circle cx="1367.2" cy="539.6" r="2.3" fill="#000"/>
<rect x="1097.9" y="689.9" width="9" height="13" fill="none" stroke="#f08a1c" stroke-width="1.6"/><circle cx="1102.4" cy="696.4" r="2.3" fill="#000"/>
<rect x="1230.6" y="689.9" width="9" height="13" fill="none" stroke="#f08a1c" stroke-width="1.6"/><circle cx="1235.1" cy="696.4" r="2.3" fill="#000"/>
<rect x="1362.7" y="689.9" width="9" height="13" fill="none" stroke="#f08a1c" stroke-width="1.6"/><circle cx="1367.2" cy="696.4" r="2.3" fill="#000"/>
<rect x="556.4" y="413.5" width="9" height="13" fill="none" stroke="#f08a1c" stroke-width="1.6"/><circle cx="560.9" cy="420.0" r="2.3" fill="#000"/>
<rect x="480.7" y="521.5" width="9" height="13" fill="none" stroke="#f08a1c" stroke-width="1.6"/><circle cx="485.2" cy="528.0" r="2.3" fill="#000"/>
<rect x="702.2" y="511.7" width="9" height="13" fill="none" stroke="#f08a1c" stroke-width="1.6"/><circle cx="706.7" cy="518.2" r="2.3" fill="#000"/>
<rect x="565.6" y="580.1" width="9" height="13" fill="none" stroke="#f08a1c" stroke-width="1.6"/><circle cx="570.1" cy="586.6" r="2.3" fill="#6a1ee8"/>
<rect x="568.7" y="683.4" width="9" height="13" fill="none" stroke="#f08a1c" stroke-width="1.6"/><circle cx="573.2" cy="689.9" r="2.3" fill="#000"/>
<rect x="700.2" y="683.4" width="9" height="13" fill="none" stroke="#f08a1c" stroke-width="1.6"/><circle cx="704.7" cy="689.9" r="2.3" fill="#000"/>
<rect x="1494.2" y="532.3" width="9" height="13" fill="none" stroke="#f08a1c" stroke-width="1.6"/><circle cx="1498.7" cy="538.8" r="2.3" fill="#6a1ee8"/>
<rect x="1627.1" y="532.3" width="9" height="13" fill="none" stroke="#f08a1c" stroke-width="1.6"/><circle cx="1631.6" cy="538.8" r="2.3" fill="#000"/>
<rect x="1714.9" y="532.3" width="9" height="13" fill="none" stroke="#f08a1c" stroke-width="1.6"/><circle cx="1719.4" cy="538.8" r="2.3" fill="#000"/>
<rect x="1494.2" y="698.5" width="9" height="13" fill="none" stroke="#f08a1c" stroke-width="1.6"/><circle cx="1498.7" cy="705.0" r="2.3" fill="#000"/>
<rect x="1627.1" y="698.5" width="9" height="13" fill="none" stroke="#f08a1c" stroke-width="1.6"/><circle cx="1631.6" cy="705.0" r="2.3" fill="#000"/>
<rect x="1714.9" y="698.5" width="9" height="13" fill="none" stroke="#f08a1c" stroke-width="1.6"/><circle cx="1719.4" cy="705.0" r="2.3" fill="#000"/>
<circle cx="1172.8" cy="158.3" r="2.6" fill="#6a1ee8"/>
<circle cx="1197.5" cy="200.1" r="2.6" fill="#6a1ee8"/>
<circle cx="1243.7" cy="287.9" r="2.6" fill="#6a1ee8"/>
<circle cx="1322.5" cy="301.8" r="2.6" fill="#6a1ee8"/>
<circle cx="1018.5" cy="339.8" r="2.8" fill="#6a1ee8"/>
<circle cx="1032.8" cy="397.3" r="2.0" fill="#6a1ee8"/>
<circle cx="1426.6" cy="575.0" r="2.0" fill="#6a1ee8"/>
<circle cx="1174.7" cy="269.5" r="2.5" fill="#1030ff"/>
</g>
<ellipse cx="1103.8" cy="386.6" rx="163.5" ry="169.5" fill="none" stroke="#f00" stroke-width="3.5"/>
</svg>
<div class="a" style="left:24px;top:1011px;width:1870px;height:1px;background:#b9def5"></div>
<svg class="a" style="left:32px;top:1019px;" width="13" height="14" viewBox="0 0 13 14"><rect x="1" y="1" width="11" height="12" fill="#fff" stroke="#666"/><rect x="1" y="1" width="11" height="3" fill="#8899cc"/><path d="M3,7h7M3,9h7M3,11h7" stroke="#555"/></svg>
<div class="a" style="left:56.00px;top:1019.39px;font-size:11.52px;line-height:13.25px;color:#3a3a3a;">Служебная информация</div>
<svg class="a" style="left:3px;top:1040px;" width="4" height="16" viewBox="0 0 4 16"><path d="M2,1v2M2,5v2M2,9v2M2,13v2" stroke="#888" stroke-width="1.5"/></svg>
<div class="a" style="left:10.3px;top:1037px;width:21.0px;height:21px;background:#b9c1d4;border:1px solid #1d2f6f"></div>
<div class="a" style="left:32.3px;top:1037px;width:21.0px;height:21px;background:#b9c1d4;border:1px solid #1d2f6f"></div>
<div class="a" style="left:54.0px;top:1037px;width:21.0px;height:21px;background:#b9c1d4;border:1px solid #1d2f6f"></div>
<div class="a" style="left:76.5px;top:1037px;width:21.0px;height:21px;background:#b9c1d4;border:1px solid #1d2f6f"></div>
<div class="a" style="left:98.0px;top:1037px;width:21.0px;height:21px;background:#b9c1d4;border:1px solid #1d2f6f"></div>
<svg class="a" style="left:12px;top:1040px;" width="18" height="16" viewBox="0 0 18 16"><path d="M1,5h16M1,10h16M6,1v15M12,1v15" stroke="#9aa" stroke-width="0.8"/><path d="M7,2 l1,3 l3,1 l-3,1 l-1,3 l-1,-3 l-3,-1 l3,-1z" fill="#1e6fe0"/></svg>
<svg class="a" style="left:34px;top:1040px;" width="18" height="16" viewBox="0 0 18 16"><path d="M2,14 L16,6" stroke="#333" stroke-dasharray="2,1"/><path d="M7,2 l1,3 l3,1 l-3,1 l-1,3 l-1,-3 l-3,-1 l3,-1z" fill="#1e6fe0"/></svg>
<svg class="a" style="left:56px;top:1040px;" width="18" height="16" viewBox="0 0 18 16"><path d="M2,1v14h15" stroke="#333" stroke-dasharray="2,1" fill="none"/><path d="M3,14 L16,2" stroke="#333"/><path d="M7,2 l1,3 l3,1 l-3,1 l-1,3 l-1,-3 l-3,-1 l3,-1z" fill="#1e6fe0"/></svg>
<svg class="a" style="left:78px;top:1040px;" width="18" height="16" viewBox="0 0 18 16"><path d="M5,1 l1,3 l3,1 l-3,1 l-1,3 l-1,-3 l-3,-1 l3,-1z" fill="#1e6fe0"/><circle cx="7" cy="13" r="2.5" fill="none" stroke="#1e6fe0" stroke-width="1.3"/><circle cx="13" cy="7" r="1.5" fill="none" stroke="#333"/></svg>
<svg class="a" style="left:100px;top:1040px;" width="18" height="16" viewBox="0 0 18 16"><path d="M2,14 L16,3" stroke="#1e6fe0" stroke-width="1.3"/><circle cx="6" cy="11" r="1.5" fill="#fff" stroke="#1e6fe0"/><circle cx="11" cy="7" r="1.5" fill="#fff" stroke="#1e6fe0"/></svg>
<div class="a" style="left:124px;top:1040px;width:1px;height:15px;background:#f4f4f4"></div>
<div class="a" style="left:128.0px;top:1037px;width:22.0px;height:21px;background:#b9c1d4;border:1px solid #1d2f6f"></div>
<svg class="a" style="left:130px;top:1039px;" width="19" height="18" viewBox="0 0 19 18"><rect x="1" y="6" width="14" height="9" fill="#fff" stroke="#333"/><path d="M5,17h7M8,15v2" stroke="#333"/><path d="M6,9 v-4 a4,4 0 0 1 8,0 v4" stroke="#333" stroke-width="2.4" fill="none"/></svg>
<svg class="a" style="left:152px;top:1040px;" width="20" height="17" viewBox="0 0 20 17"><path d="M1,8 l3,-2 h10 v8 l-3,2 h-10z" fill="#fff" stroke="#333"/><path d="M1,12 h11 v3" stroke="#1e6fe0" stroke-width="1.5" fill="none"/><path d="M12,7 v-3 a3,3 0 0 1 6,0 v3" stroke="#333" stroke-width="2" fill="none"/></svg>
<div class="a" style="left:176px;top:1040px;width:1px;height:15px;background:#f4f4f4"></div>
<div class="a" style="left:180.0px;top:1037px;width:22.0px;height:21px;background:#b9c1d4;border:1px solid #1d2f6f"></div>
<svg class="a" style="left:183px;top:1040px;" width="17" height="16" viewBox="0 0 17 16"><path d="M3,12 h10 l3,3 h-13z" fill="#fff" stroke="#222"/><path d="M8,1 l1,2.5 l2.5,1 l-2.5,1 l-1,2.5 l-1,-2.5 l-2.5,-1 l2.5,-1z" fill="#1e6fe0"/><path d="M8,8 v5" stroke="#1e6fe0" stroke-dasharray="1,1"/></svg>
<div class="a" style="left:205px;top:1040px;width:74px;height:15px;background:#efefef"></div>
<div class="a" style="left:286px;top:1040px;width:1px;height:15px;background:#f4f4f4"></div>
<svg class="a" style="left:292px;top:1040px;" width="17" height="17" viewBox="0 0 17 17"><path d="M2,15 L15,2" stroke="#223" stroke-width="1.5"/><path d="M8,6 l1,2 l2,1 l-2,1 l-1,2 l-1,-2 l-2,-1 l2,-1z" fill="#1e6fe0"/></svg>
<svg class="a" style="left:316px;top:1040px;" width="17" height="17" viewBox="0 0 17 17"><circle cx="8" cy="8" r="6.5" fill="#fff" stroke="#333"/><path d="M8,5 l1,2 l2,1 l-2,1 l-1,2 l-1,-2 l-2,-1 l2,-1z" fill="#1e6fe0"/></svg>
<div class="a" style="left:338px;top:1040px;width:1px;height:15px;background:#f4f4f4"></div>
<svg class="a" style="left:345px;top:1040px;" width="17" height="17" viewBox="0 0 17 17"><path d="M3,1 v14 h13 M3,9 h6 v6" stroke="#222" stroke-width="1.4" fill="none"/></svg>
<div class="a" style="left:368px;top:1040px;width:1px;height:15px;background:#f4f4f4"></div>
<svg class="a" style="left:374px;top:1040px;" width="17" height="17" viewBox="0 0 17 17"><path d="M3,3 v13 h13" stroke="#333" fill="none"/><path d="M2,6 l4,-4 l1,4" stroke="#333" fill="none"/><text x="8" y="14" font-family="Liberation Sans" font-size="11" fill="#1e6fe0">X</text></svg>
<svg class="a" style="left:396px;top:1040px;" width="17" height="17" viewBox="0 0 17 17"><path d="M3,3 v13 h13" stroke="#333" fill="none"/><path d="M2,6 l4,-4 l1,4" stroke="#333" fill="none"/><text x="8" y="14" font-family="Liberation Sans" font-size="11" fill="#1e6fe0">Y</text></svg>
<svg class="a" style="left:420px;top:1040px;" width="17" height="17" viewBox="0 0 17 17"><path d="M2,8 h6 M2,11 l3,3 l3,-3z" stroke="#777" fill="#777"/></svg>
<div class="a" style="left:435px;top:1040px;width:1px;height:15px;background:#f4f4f4"></div>
<svg class="a" style="left:441px;top:1040px;" width="17" height="17" viewBox="0 0 17 17"><rect x="3" y="3" width="11" height="11" fill="#fff" stroke="#222" stroke-width="1.2"/><path d="M1,1 h11 v11 h-11z" fill="none" stroke="#222"/></svg>
<svg class="a" style="left:463px;top:1040px;" width="17" height="17" viewBox="0 0 17 17"><path d="M1,3 l3,-2 h11 v11 l-3,3 h-11z" fill="#fff" stroke="#222" stroke-width="1.2"/><path d="M1,3 h11 v12 M12,3 l3,-2" stroke="#222" fill="none"/></svg>
<svg class="a" style="left:485px;top:1040px;" width="17" height="17" viewBox="0 0 17 17"><path d="M1,3 l3,-2 h11 v11 l-3,3 h-11z" fill="#fff" stroke="#222" stroke-width="1.2"/><path d="M12,3 l3,-2 v11 l-3,3z" fill="#223"/></svg>
<svg class="a" style="left:507px;top:1040px;" width="17" height="17" viewBox="0 0 17 17"><rect x="2" y="2" width="13" height="13" fill="#fff" stroke="#222" stroke-width="1.2"/><rect x="5" y="5" width="7" height="7" fill="#556"/><rect x="5" y="5" width="3.5" height="3.5" fill="#9ad"/></svg>
<svg class="a" style="left:529px;top:1040px;" width="17" height="17" viewBox="0 0 17 17"><path d="M1,3 l3,-2 h11 v11 l-3,3 h-11z" fill="#fff" stroke="#222"/><circle cx="13" cy="13" r="4" fill="#333"/><circle cx="13" cy="13" r="1.5" fill="#fff"/></svg>
<svg class="a" style="left:552px;top:1040px;" width="17" height="17" viewBox="0 0 17 17"><path d="M1,4v-3h3 M13,1h3v3 M16,13v3h-3 M4,16h-3v-3" stroke="#1e6fe0" stroke-width="1.5" fill="none"/><rect x="4" y="5" width="9" height="8" fill="#fff" stroke="#222"/><path d="M5,12 L12,6" stroke="#333" stroke-dasharray="1,1"/></svg>
<div class="a" style="left:574px;top:1040px;width:1px;height:15px;background:#f4f4f4"></div>
<div class="a" style="left:579.0px;top:1037px;width:22.0px;height:21px;background:#b9c1d4;border:1px solid #1d2f6f"></div>
<svg class="a" style="left:581px;top:1039px;" width="19" height="19" viewBox="0 0 19 19"><path d="M2,5 l3,-3 h10 v12 l-3,3 h-10z" fill="#fff" stroke="#222"/><path d="M9,3 v13" stroke="#1e6fe0" stroke-width="1.6"/></svg>
<svg class="a" style="left:603px;top:1039px;" width="19" height="19" viewBox="0 0 19 19"><path d="M2,5 l3,-3 h10 v12 l-3,3 h-10z" fill="none" stroke="#aab"/><path d="M9,3 v13" stroke="#9c9" stroke-width="2"/></svg>
<svg class="a" style="left:626px;top:1039px;" width="19" height="19" viewBox="0 0 19 19"><path d="M2,6 h15 v10 h-15z" fill="#dde" stroke="#99a"/><path d="M4,3v3M7,3v3M10,3v3M13,3v3" stroke="#99a"/></svg>
<div class="a" style="left:650px;top:1040px;width:1px;height:15px;background:#f4f4f4"></div>
<svg class="a" style="left:655px;top:1040px;" width="14" height="17" viewBox="0 0 14 17"><path d="M7,1 a5,5 0 0 1 4,9 v3 h-8 v-3 a5,5 0 0 1 4,-9z" fill="none" stroke="#aaa"/></svg>
<div class="a" style="left:677.0px;top:1039px;width:16.0px;height:18px;background:#c2cde0;border:1px solid #7a9ad0"></div>
<svg class="a" style="left:678px;top:1040px;" width="14" height="17" viewBox="0 0 14 17"><path d="M7,1 a5,5 0 0 1 4,9 v3 h-8 v-3 a5,5 0 0 1 4,-9z" fill="#f5e79a" stroke="#999"/></svg>
<svg class="a" style="left:700px;top:1040px;" width="14" height="17" viewBox="0 0 14 17"><path d="M7,1 a5,5 0 0 1 4,9 v3 h-8 v-3 a5,5 0 0 1 4,-9z" fill="#f6d21a" stroke="#555"/><path d="M4,15h6" stroke="#333"/></svg>
<svg class="a" style="left:721px;top:1039px;" width="18" height="18" viewBox="0 0 18 18"><rect x="1" y="6" width="8" height="11" fill="#fff" stroke="#333"/><path d="M12,2 a3,3 0 0 1 3,5 v2 h-5 v-2 a3,3 0 0 1 2,-5z" fill="#fff" stroke="#333"/></svg>
<svg class="a" style="left:743px;top:1039px;" width="19" height="18" viewBox="0 0 19 18"><rect x="1" y="3" width="12" height="13" fill="#fff" stroke="#333"/><path d="M1,8h12M1,12h12" stroke="#1e6fe0" stroke-width="1.5"/><circle cx="14" cy="5" r="4" fill="#f6d21a" stroke="#555"/></svg>
<div class="a" style="left:765.0px;top:1039px;width:145.0px;height:18px;background:#fff;border:1px solid #e4e4e4"></div>
<div class="a" style="left:895.0px;top:1040px;width:14px;height:16px;background:#f1f1f1;border-left:1px solid #ddd"></div>
<svg class="a" style="left:899px;top:1046px;" width="7" height="4" viewBox="0 0 7 4"><path d="M0,0 L7,0 L3.5,4Z" fill="#888"/></svg>
<div class="a" style="left:768.30px;top:1041.67px;font-size:11.10px;line-height:12.76px;color:#111;">этаж #7(3 этаж)</div>
<svg class="a" style="left:915px;top:1040px;" width="18" height="17" viewBox="0 0 18 17"><path d="M3,2h12l-2,3h-12z M3,7h12l-2,3h-12z M3,12h12l-2,3h-12z" fill="#fff" stroke="#222"/><path d="M3,7h12l-2,3h-12z" fill="#6aa6f8" stroke="#1e6fe0"/></svg>
<div class="a" style="left:939px;top:1041px;width:1px;height:14px;background:#f4f4f4"></div>
<svg class="a" style="left:946px;top:1039px;" width="19" height="19" viewBox="0 0 19 19"><path d="M16,4 Q10,0 5,5 M5,5 l0,-3 M5,5 l3,1" stroke="#1e6fe0" stroke-width="2" fill="none"/><text x="4" y="17" font-family="Liberation Sans" font-size="11" font-weight="bold" fill="#334">№</text></svg>
<div class="a" style="left:966.7px;top:1039px;width:146.6px;height:18px;background:#fff;border:1px solid #e4e4e4"></div>
<div class="a" style="left:1098.3px;top:1040px;width:14px;height:16px;background:#f1f1f1;border-left:1px solid #ddd"></div>
<svg class="a" style="left:1102px;top:1046px;" width="7" height="4" viewBox="0 0 7 4"><path d="M0,0 L7,0 L3.5,4Z" fill="#888"/></svg>
<div class="a" style="left:970.00px;top:1041.56px;font-size:11.26px;line-height:12.95px;color:#111;">1.Собственный вес</div>
<div class="a" style="left:1115.5px;top:1037px;width:21.5px;height:21px;background:#b9c1d4;border:1px solid #1d2f6f"></div>
<svg class="a" style="left:1117px;top:1039px;" width="19" height="18" viewBox="0 0 19 18"><path d="M2,1 h15 l-6,7 v4 h-3 v-4z" fill="#fff" stroke="#444"/><path d="M4,11 v6 M2,15 l2,2 l2,-2 M13,11 v6 M11,15 l2,2 l2,-2 M4,11h9" stroke="#1e6fe0" stroke-width="1.4" fill="none"/></svg>
<div class="a" style="left:1141px;top:1041px;width:1px;height:14px;background:#f4f4f4"></div>
<svg class="a" style="left:1145px;top:1039px;" width="20" height="18" viewBox="0 0 20 18"><path d="M3,4 L11,12 L7,12 L9,17 L7,17 L5,13 L2,15z" fill="#1e6fe0"/><path d="M8,2 h11 l-4,5 v4 l-3,-2 v-2z" fill="#fff" stroke="#555"/></svg>
<svg class="a" style="left:1168px;top:1039px;" width="20" height="18" viewBox="0 0 20 18"><rect x="2" y="9" width="10" height="8" fill="#fff" stroke="#1e6fe0"/><path d="M2,12h10M2,15h10M6,9v8" stroke="#1e6fe0"/><path d="M8,2 h11 l-4,5 v4 l-3,-2 v-2z" fill="#fff" stroke="#555"/></svg>
<div class="a" style="left:1193px;top:1041px;width:1px;height:14px;background:#f4f4f4"></div>
<svg class="a" style="left:1199px;top:1039px;" width="19" height="18" viewBox="0 0 19 18"><path d="M2,8 L9,2 L16,8 v8 h-14z" fill="none" stroke="#999"/><path d="M4,12 l3,3 l6,-7" stroke="#9c9" stroke-width="2" fill="none"/></svg>
<svg class="a" style="left:1221px;top:1046px;" width="8" height="10" viewBox="0 0 8 10"><path d="M1,3h6M1,6 l3,3 l3,-3z" stroke="#888" fill="#888"/></svg>
<svg class="a" style="left:1233px;top:1039px;" width="4" height="17" viewBox="0 0 4 17"><path d="M2,1v2M2,5v2M2,9v2M2,13v2" stroke="#888" stroke-width="1.5"/></svg>
<svg class="a" style="left:1243px;top:1040px;" width="18" height="17" viewBox="0 0 18 17"><rect x="7" y="7" width="4" height="4" fill="none" stroke="#aaa"/><path d="M9,1 v5 M9,12 v5 M1,9 h5 M12,9 h5" stroke="#aaa" stroke-width="1.4"/></svg>
<svg class="a" style="left:1266px;top:1040px;" width="18" height="17" viewBox="0 0 18 17"><path d="M14,5 a6,6 0 1 0 1,6" stroke="#aaa" stroke-width="1.8" fill="none"/><path d="M11,4 l5,-2 v5z" fill="#aaa"/></svg>
<div class="a" style="left:1290px;top:1041px;width:1px;height:14px;background:#f4f4f4"></div>
<svg class="a" style="left:1294px;top:1040px;" width="18" height="17" viewBox="0 0 18 17"><rect x="6" y="6" width="3" height="3" fill="none" stroke="#aaa"/><path d="M7.5,1 v4 M7.5,10 v4 M1,7.5 h4 M10,7.5 h4 M9,9 L16,15" stroke="#aaa" stroke-width="1.2"/><circle cx="16" cy="15" r="1.5" fill="none" stroke="#7ab0ee"/></svg>
<svg class="a" style="left:1319px;top:1040px;" width="18" height="17" viewBox="0 0 18 17"><path d="M3,15 L15,4" stroke="#aaa" stroke-width="2"/><path d="M3,3 h10 M3,3 v10" stroke="#ccc" stroke-dasharray="1.5,1.5"/><rect x="1" y="1" width="3" height="3" fill="none" stroke="#7ab0ee"/></svg>
<svg class="a" style="left:1341px;top:1040px;" width="18" height="17" viewBox="0 0 18 17"><path d="M3,15 L15,4" stroke="#aac" stroke-width="2"/><path d="M3,3 q8,-2 12,3" stroke="#8ab8ec" fill="none"/><path d="M1,1 l4,4 M5,1 l-4,4" stroke="#7ab0ee"/></svg>
<div class="a" style="left:0;top:1061px;width:1920px;height:1px;background:#9ea3aa"></div>
<div class="a" style="left:0;top:1062px;width:1920px;height:18px;background:#cdd1d7"></div>
<div class="a" style="left:4.00px;top:1065.30px;font-size:11.66px;line-height:13.41px;color:#1a1a1a;">Редактируйте значения параметров указанного объекта : "без сглаживания"</div>
<div class="a" style="left:1419px;top:1062px;width:34px;height:18px;border-left:1px solid #9a9ea6"></div>
<div class="a" style="left:1454px;top:1062px;width:35px;height:18px;border-left:1px solid #9a9ea6"></div>
<div class="a" style="left:1490px;top:1063px;width:85px;height:17px;background:#fbf9e8;border-left:1px solid #9a9ea6"></div>
<div class="a" style="left:1576px;top:1063px;width:85px;height:17px;background:#fbf9e8;border-left:1px solid #9a9ea6"></div>
<div class="a" style="left:1662px;top:1063px;width:85px;height:17px;background:#fbf9e8;border-left:1px solid #9a9ea6"></div>
<div class="a" style="left:1748px;top:1063px;width:85px;height:17px;background:#fbf9e8;border-left:1px solid #9a9ea6"></div>
<div class="a" style="left:1834px;top:1063px;width:85px;height:17px;background:#fbf9e8;border-left:1px solid #9a9ea6"></div>
<div class="a" style="left:1426.30px;top:1065.69px;font-size:11.07px;line-height:12.73px;color:#222;">NUM</div>
<div class="a" style="left:1458.20px;top:1066.01px;font-size:10.57px;line-height:12.15px;color:#8a8a8a;">ОРТО</div>
<div class="a" style="left:1493.40px;top:1065.82px;font-size:10.87px;line-height:12.50px;color:#1d9a1d;">4660.24</div>
<div class="a" style="left:1580.70px;top:1066.01px;font-size:10.57px;line-height:12.16px;color:#2020c0;">12555.40</div>
<div class="a" style="left:1666.30px;top:1066.02px;font-size:10.56px;line-height:12.15px;color:#b01818;">7400</div>
<div class="a" style="left:1752.60px;top:1066.00px;font-size:10.60px;line-height:12.19px;color:#2a98c0;">15300.85</div>
<div class="a" style="left:1837.40px;top:1065.08px;font-size:12.00px;line-height:13.80px;color:#111;">1</div>
<div class="a" style="left:1803px;top:200px;width:75px;height:106px;background:#cdd1d7"></div>
<div class="a" style="left:1808.00px;top:208.72px;font-size:11.02px;line-height:12.68px;color:#3a3a3a;font-weight:bold;">Проекц...</div>
<svg class="a" style="left:1862px;top:209px;" width="10" height="10" viewBox="0 0 10 10"><path d="M1,1 L9,9 M9,1 L1,9" stroke="#555" stroke-width="1.3"/></svg>
<svg class="a" style="left:1809px;top:229px;" width="19" height="19" viewBox="0 0 19 19"><path d="M3,6 l4,-4 h9 v11 l-4,4 h-9z M3,6 h9 v11 M12,6 l4,-4" fill="#e8e8ee" stroke="#8a8aa0"/></svg>
<svg class="a" style="left:1831px;top:229px;" width="19" height="19" viewBox="0 0 19 19"><path d="M3,6 l4,-4 h9 v11 l-4,4 h-9z M3,6 h9 v11 M12,6 l4,-4" fill="#e8e8ee" stroke="#8a8aa0"/><path d="M3,5 l4,-4 h9" stroke="#e02020" stroke-width="2" fill="none"/></svg>
<svg class="a" style="left:1853px;top:229px;" width="19" height="19" viewBox="0 0 19 19"><path d="M3,6 l4,-4 h9 v11 l-4,4 h-9z M3,6 h9 v11 M12,6 l4,-4" fill="#e8e8ee" stroke="#8a8aa0"/><rect x="8" y="8" width="9" height="9" fill="#b8d4fb" stroke="#1e6fe0"/></svg>
<svg class="a" style="left:1809px;top:256px;" width="19" height="19" viewBox="0 0 19 19"><path d="M3,6 l4,-4 h9 v11 l-4,4 h-9z M3,6 h9 v11 M12,6 l4,-4" fill="#e8e8ee" stroke="#8a8aa0"/><path d="M3,6 v11" stroke="#20a040" stroke-width="2"/></svg>
<svg class="a" style="left:1831px;top:256px;" width="19" height="19" viewBox="0 0 19 19"><path d="M3,6 l4,-4 h9 v11 l-4,4 h-9z M3,6 h9 v11 M12,6 l4,-4" fill="#e8e8ee" stroke="#8a8aa0"/><path d="M1,4v-3h3 M14,1h3v3 M17,15v3h-3 M4,18h-3v-3" stroke="#1e6fe0" stroke-width="1.4" fill="none"/></svg>
<svg class="a" style="left:1853px;top:256px;" width="19" height="19" viewBox="0 0 19 19"><path d="M3,6 l4,-4 h9 v11 l-4,4 h-9z M3,6 h9 v11 M12,6 l4,-4" fill="#e8e8ee" stroke="#8a8aa0"/><path d="M16,4 v11" stroke="#20a040" stroke-width="2"/></svg>
<svg class="a" style="left:1809px;top:283px;" width="19" height="19" viewBox="0 0 19 19"><path d="M3,6 l4,-4 h9 v11 l-4,4 h-9z M3,6 h9 v11 M12,6 l4,-4" fill="#e8e8ee" stroke="#8a8aa0"/><path d="M1,1 L7,16" stroke="#1e6fe0" stroke-width="1.3"/></svg>
<svg class="a" style="left:1831px;top:283px;" width="19" height="19" viewBox="0 0 19 19"><path d="M3,6 l4,-4 h9 v11 l-4,4 h-9z M3,6 h9 v11 M12,6 l4,-4" fill="#e8e8ee" stroke="#8a8aa0"/><path d="M3,18 h9 l4,-4" stroke="#e02020" stroke-width="2" fill="none"/></svg>
<svg class="a" style="left:1853px;top:283px;" width="19" height="19" viewBox="0 0 19 19"><path d="M3,6 l4,-4 h9 v11 l-4,4 h-9z M3,6 h9 v11 M12,6 l4,-4" fill="#e8e8ee" stroke="#8a8aa0"/><rect x="1" y="1" width="9" height="9" fill="none" stroke="#1e6fe0" stroke-width="1.4"/></svg>
<div class="a" style="left:1748px;top:922px;width:140px;height:77px;background:#efefef;border-top:1px solid #d6d2ca;border-left:1px solid #d6d2ca;border-right:2px solid #333;border-bottom:2px solid #333"></div>
<div class="a" style="left:1756px;top:930px;width:1px;height:33px;background:#888"></div><div class="a" style="left:1879px;top:930px;width:1px;height:33px;background:#888"></div>
<div class="a" style="left:1764.00px;top:925.73px;font-size:11.00px;line-height:12.65px;color:#20208a;">X :</div>
<div class="a" style="left:1784.00px;top:926.20px;font-size:10.28px;line-height:11.82px;color:#20a020;">0.00</div>
<div class="a" style="left:1764.00px;top:939.73px;font-size:11.00px;line-height:12.65px;color:#20208a;">Y :</div>
<div class="a" style="left:1784.00px;top:940.03px;font-size:10.55px;line-height:12.13px;color:#2020d0;">12555.40</div>
<div class="a" style="left:1764.00px;top:953.73px;font-size:11.00px;line-height:12.65px;color:#20208a;">Z :</div>
<div class="a" style="left:1784.00px;top:954.16px;font-size:10.34px;line-height:11.89px;color:#c02020;">7400</div>
<div class="a" style="left:1764.00px;top:967.73px;font-size:11.00px;line-height:12.65px;color:#20208a;font-weight:bold;">L :</div>
<div class="a" style="left:1784.00px;top:968.03px;font-size:10.55px;line-height:12.13px;color:#1890b0;font-weight:bold;">15300.85</div>
<div class="a" style="left:1759.00px;top:981.73px;font-size:11.00px;line-height:12.65px;color:#20208a;">Ux :</div>
<div class="a" style="left:1784.00px;top:981.87px;font-size:10.79px;line-height:12.41px;color:#3aa0c0;">69.64</div>
</body></html>
